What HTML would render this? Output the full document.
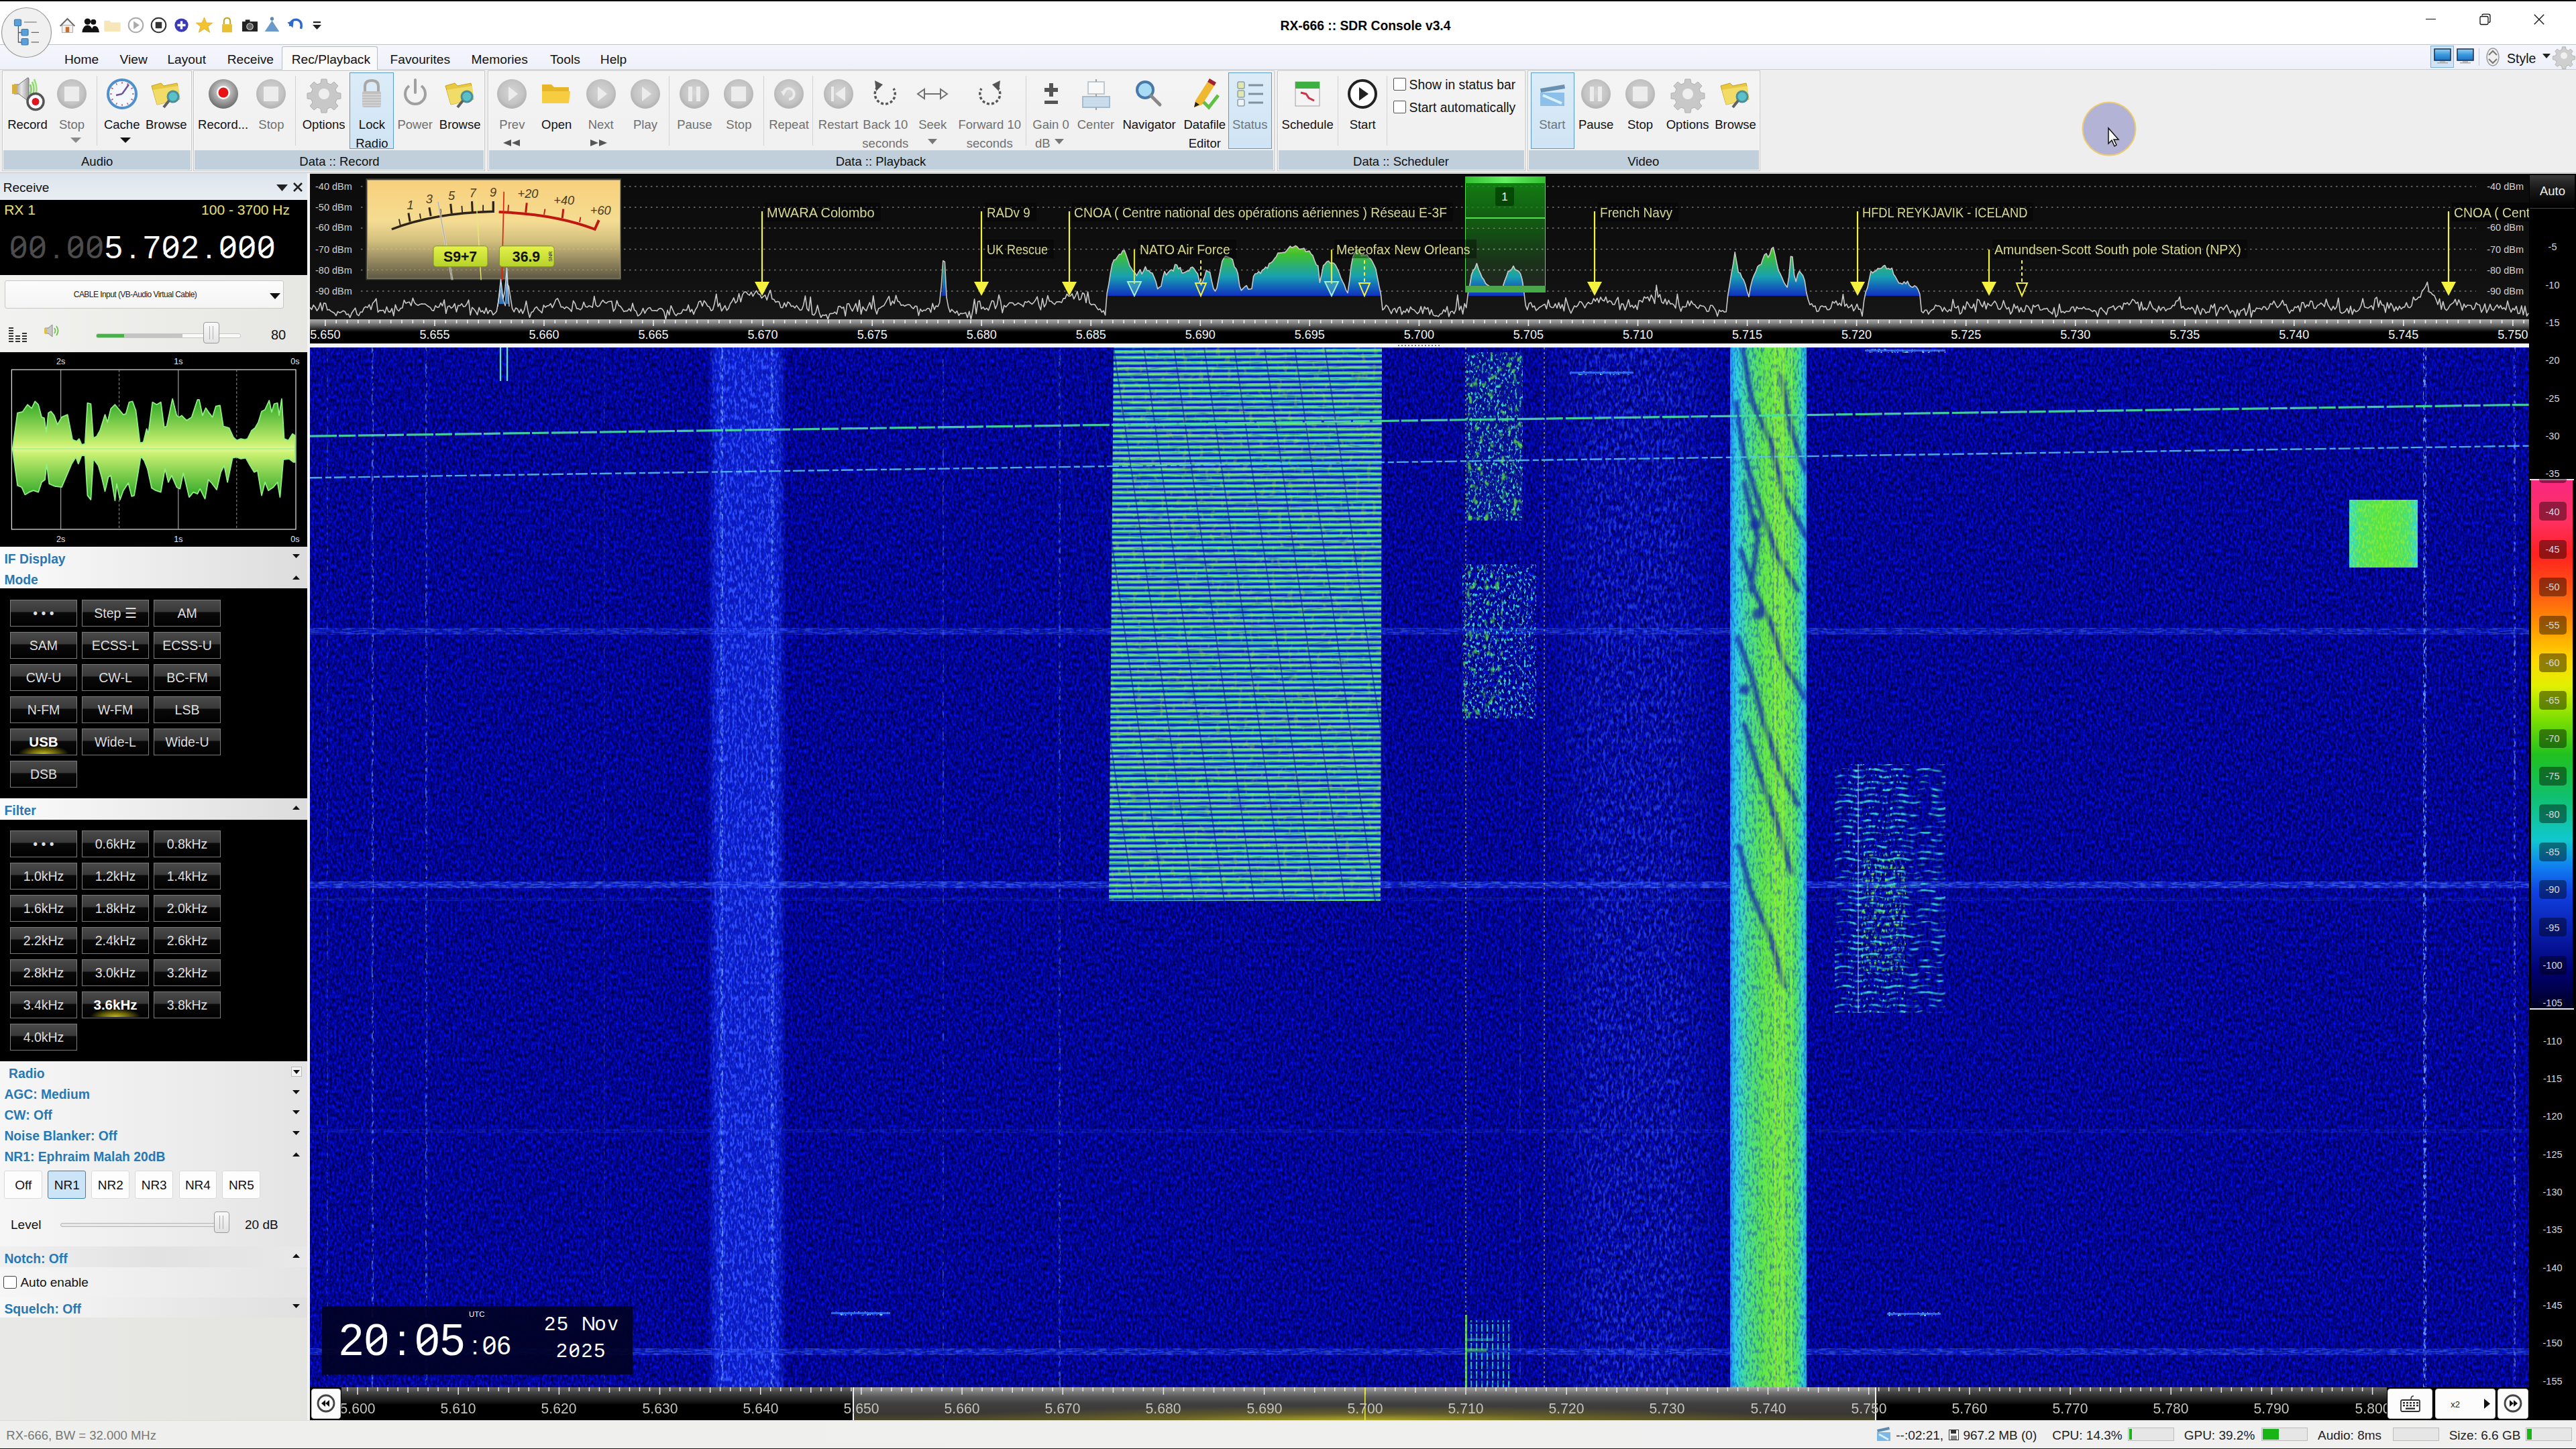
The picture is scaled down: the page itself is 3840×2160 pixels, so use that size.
<!DOCTYPE html><html><head><meta charset="utf-8"><style>*{margin:0;padding:0;box-sizing:border-box}
html,body{width:3840px;height:2160px;overflow:hidden;background:#efefef;font-family:"Liberation Sans",sans-serif}
.a{position:absolute}
.t{position:absolute;white-space:nowrap;line-height:1}
.c{width:400px;text-align:center}
.r{width:400px;text-align:right}
svg{overflow:visible}
</style></head><body><div class="a" style="left:0px;top:0px;width:3840px;height:2px;background:#0a0a0a"></div><div class="a" style="left:0px;top:2px;width:3840px;height:64px;background:#fff"></div><svg class="a" style="left:86.5px;top:23.5px;" width="27" height="27" viewBox="0 0 40 40"><path d="M4 22 L20 6 L36 22" stroke="#666" stroke-width="3" fill="#f4f4f4"/><rect x="8" y="20" width="24" height="16" fill="#f0f0f0" stroke="#888"/><rect x="16" y="24" width="8" height="12" fill="#c07030"/></svg><svg class="a" style="left:120.5px;top:23.5px;" width="27" height="27" viewBox="0 0 40 40"><circle cx="14" cy="12" r="7" fill="#111"/><circle cx="27" cy="13" r="6" fill="#111"/><path d="M2 36 Q4 20 14 20 Q24 20 26 36Z M22 36 Q24 22 30 22 Q38 22 40 36Z" fill="#111"/></svg><svg class="a" style="left:153.5px;top:23.5px;" width="27" height="27" viewBox="0 0 40 40"><path d="M2 10 L14 10 L17 14 L38 14 L38 34 L2 34Z" fill="#f6e6b8"/></svg><svg class="a" style="left:188.5px;top:23.5px;" width="27" height="27" viewBox="0 0 40 40"><circle cx="20" cy="20" r="16" fill="#fff" stroke="#aaa" stroke-width="3"/><path d="M15 11 L28 20 L15 29Z" fill="#aaa"/></svg><svg class="a" style="left:222.5px;top:23.5px;" width="27" height="27" viewBox="0 0 40 40"><circle cx="20" cy="20" r="16" fill="#fff" stroke="#333" stroke-width="3"/><rect x="13" y="13" width="14" height="14" fill="#333"/></svg><svg class="a" style="left:256.5px;top:23.5px;" width="27" height="27" viewBox="0 0 40 40"><circle cx="20" cy="20" r="15" fill="#3a3ab8"/><path d="M20 11V29M11 20H29" stroke="#fff" stroke-width="5"/></svg><svg class="a" style="left:290.5px;top:23.5px;" width="27" height="27" viewBox="0 0 40 40"><path d="M20 3 L25 15 L38 15 L28 23 L32 36 L20 28 L8 36 L12 23 L2 15 L15 15Z" fill="#f4c430" stroke="#d89a10"/></svg><svg class="a" style="left:324.5px;top:23.5px;" width="27" height="27" viewBox="0 0 40 40"><path d="M13 18V12Q13 4 20 4Q27 4 27 12V18" stroke="#c0a020" stroke-width="3" fill="none"/><rect x="9" y="18" width="22" height="18" fill="#e8c030"/></svg><svg class="a" style="left:358.5px;top:23.5px;" width="27" height="27" viewBox="0 0 40 40"><rect x="3" y="12" width="34" height="22" fill="#222"/><rect x="10" y="8" width="10" height="5" fill="#222"/><circle cx="20" cy="23" r="7" fill="#666" stroke="#ddd" stroke-width="1.5"/></svg><svg class="a" style="left:391.5px;top:23.5px;" width="27" height="27" viewBox="0 0 40 40"><circle cx="20" cy="6" r="4" fill="#5a88b8"/><path d="M20 10 L36 34 L4 34Z" fill="#6a9ac8"/></svg><svg class="a" style="left:426.5px;top:23.5px;" width="27" height="27" viewBox="0 0 40 40"><path d="M8 22 Q10 6 24 8 Q36 12 32 28" stroke="#2a6ad0" stroke-width="5" fill="none"/><path d="M2 14 L14 26 L16 10Z" fill="#2a6ad0"/></svg><svg class="a" style="left:466px;top:32px;" width="13" height="13" viewBox="0 0 13 13"><rect x="1" y="0" width="11" height="2.2" fill="#222"/><path d="M0 5 H13 L6.5 12Z" fill="#222"/></svg><div class="t" style="left:1908.5px;top:28.7px;font-size:19.3px;color:#000;font-weight:700;">RX-666 :: SDR Console v3.4</div><div class="a" style="left:3616px;top:28px;width:15px;height:1.3px;background:#111"></div><svg class="a" style="left:3696px;top:20px;" width="18" height="18" viewBox="0 0 18 18"><rect x="1" y="4.5" width="12" height="12" rx="1.8" fill="none" stroke="#111" stroke-width="1.3"/><path d="M4 3.2 Q4 1.2 6 1.2 H13.5 Q16 1.2 16 3.7 V11.5 Q16 13.5 14 13.5" fill="none" stroke="#111" stroke-width="1.3"/></svg><svg class="a" style="left:3777px;top:21px;" width="16" height="16" viewBox="0 0 16 16"><path d="M0.8 0.8 L15.2 15.2 M15.2 0.8 L0.8 15.2" stroke="#111" stroke-width="1.3"/></svg><div class="a" style="left:0px;top:66px;width:3840px;height:38px;background:linear-gradient(#f6f7fd,#eef0fa);border-top:1px solid #bfc3cc;border-bottom:1px solid #c7cad2"></div><div class="a" style="left:420px;top:69px;width:143px;height:35px;background:#fafafa;border:1px solid #b8bcc4;border-bottom:none;border-radius:3px 3px 0 0"></div><div class="t" style="left:96.0px;top:78.7px;font-size:19.2px;color:#111;font-weight:400;">Home</div><div class="t" style="left:178.6px;top:78.7px;font-size:19.2px;color:#111;font-weight:400;">View</div><div class="t" style="left:249.4px;top:78.7px;font-size:19.2px;color:#111;font-weight:400;">Layout</div><div class="t" style="left:338.7px;top:78.7px;font-size:19.2px;color:#111;font-weight:400;">Receive</div><div class="t" style="left:434.7px;top:78.7px;font-size:19.2px;color:#111;font-weight:400;">Rec/Playback</div><div class="t" style="left:581.5px;top:78.7px;font-size:19.2px;color:#111;font-weight:400;">Favourites</div><div class="t" style="left:702.6px;top:78.7px;font-size:19.2px;color:#111;font-weight:400;">Memories</div><div class="t" style="left:820.0px;top:78.7px;font-size:19.2px;color:#111;font-weight:400;">Tools</div><div class="t" style="left:894.8px;top:78.7px;font-size:19.2px;color:#111;font-weight:400;">Help</div><svg class="a" style="left:2px;top:11px;" width="76" height="76" viewBox="0 0 76 76"><circle cx="37.5" cy="37.5" r="37" fill="#f0f0f0" stroke="#9a9a9a" stroke-width="1.2"/><path d="M25.4 27 V52 H30 M25.4 37.5 H30" stroke="#555" stroke-width="1.3" fill="none"/><g fill="#5aa0d8" stroke="#3a78b0" stroke-width="1.2"><rect x="19.5" y="18" width="10" height="9.5" rx="1.5"/><rect x="30" y="32.5" width="10" height="9.5" rx="1.5"/><rect x="30" y="46.5" width="10" height="9.5" rx="1.5"/></g><path d="M34 22 H52.7 M44.6 37.3 H56 M44.6 51.9 H56" stroke="#666" stroke-width="1.2"/></svg><div class="a" style="left:3623px;top:68px;width:35px;height:33px;background:#cfe4f6;border:1px solid #7fb0dc"></div><svg class="a" style="left:3626px;top:70px;" width="30" height="26" viewBox="0 0 30 26"><defs><linearGradient id="scr" x1="0" y1="0" x2="0" y2="1"><stop offset="0" stop-color="#9ad0f0"/><stop offset="0.5" stop-color="#3a9ae0"/><stop offset="1" stop-color="#2070c0"/></linearGradient></defs><rect x="3" y="3" width="24" height="17" fill="url(#scr)" stroke="#1a2a40" stroke-width="1.5"/><rect x="11" y="21" width="8" height="2" fill="#bbb"/><rect x="7" y="23" width="16" height="1.5" fill="#aaa"/></svg><svg class="a" style="left:3660px;top:70px;" width="30" height="26" viewBox="0 0 30 26"><defs><linearGradient id="scr" x1="0" y1="0" x2="0" y2="1"><stop offset="0" stop-color="#9ad0f0"/><stop offset="0.5" stop-color="#3a9ae0"/><stop offset="1" stop-color="#2070c0"/></linearGradient></defs><rect x="3" y="3" width="24" height="17" fill="url(#scr)" stroke="#1a2a40" stroke-width="1.5"/><rect x="11" y="21" width="8" height="2" fill="#bbb"/><rect x="7" y="23" width="16" height="1.5" fill="#aaa"/></svg><div class="a" style="left:3695px;top:72px;width:1px;height:26px;background:#c8c8c8"></div><svg class="a" style="left:3704px;top:70px;" width="24" height="30" viewBox="0 0 24 30"><ellipse cx="12" cy="15" rx="9" ry="13" fill="#f0f0f0" stroke="#999" stroke-width="1.5"/><path d="M6 12 L12 6 L18 12 M6 18 L12 24 L18 18" stroke="#777" stroke-width="2" fill="none"/></svg><div class="t" style="left:3737.0px;top:77.5px;font-size:19.5px;color:#111;font-weight:400;">Style</div><svg class="a" style="left:3790px;top:80px;" width="12" height="8" viewBox="0 0 12 8"><path d="M0 0H12L6 7Z" fill="#222"/></svg><svg class="a" style="left:3808px;top:69px;" width="28" height="28" viewBox="0 0 34 34"><path d="M14 1h6l1 5 4 2 4-3 4 4-3 4 2 4 5 1v6l-5 1-2 4 3 4-4 4-4-3-4 2-1 5h-6l-1-5-4-2-4 3-4-4 3-4-2-4-5-1v-6l5-1 2-4-3-4 4-4 4 3 4-2z" fill="#cfcfcf" stroke="#aaa"/><circle cx="17" cy="17" r="6" fill="#f0f0f0"/></svg><div class="a" style="left:0px;top:104px;width:3840px;height:154px;background:#eeeeee;border-bottom:1px solid #c8c8c8"></div><div class="a" style="left:3px;top:105px;width:283px;height:150px;background:linear-gradient(#f4f4f4,#efefef);border:1px solid #c4c6c8;box-shadow:inset 0 0 0 1px #fdfdfd"></div><div class="a" style="left:5px;top:224px;width:279px;height:29px;background:linear-gradient(#c2cfda,#bfcfdc)"></div><div class="t c" style="left:-55.3px;top:232.3px;font-size:18.5px;color:#111;font-weight:400;">Audio</div><div class="a" style="left:288px;top:105px;width:435px;height:150px;background:linear-gradient(#f4f4f4,#efefef);border:1px solid #c4c6c8;box-shadow:inset 0 0 0 1px #fdfdfd"></div><div class="a" style="left:290px;top:224px;width:431px;height:29px;background:linear-gradient(#c2cfda,#bfcfdc)"></div><div class="t c" style="left:306.0px;top:232.3px;font-size:18.5px;color:#111;font-weight:400;">Data :: Record</div><div class="a" style="left:727px;top:105px;width:1173px;height:150px;background:linear-gradient(#f4f4f4,#efefef);border:1px solid #c4c6c8;box-shadow:inset 0 0 0 1px #fdfdfd"></div><div class="a" style="left:729px;top:224px;width:1169px;height:29px;background:linear-gradient(#c2cfda,#bfcfdc)"></div><div class="t c" style="left:1113.0px;top:232.3px;font-size:18.5px;color:#111;font-weight:400;">Data :: Playback</div><div class="a" style="left:1904px;top:105px;width:370px;height:150px;background:linear-gradient(#f4f4f4,#efefef);border:1px solid #c4c6c8;box-shadow:inset 0 0 0 1px #fdfdfd"></div><div class="a" style="left:1906px;top:224px;width:366px;height:29px;background:linear-gradient(#c2cfda,#bfcfdc)"></div><div class="t c" style="left:1888.5px;top:232.3px;font-size:18.5px;color:#111;font-weight:400;">Data :: Scheduler</div><div class="a" style="left:2277px;top:105px;width:347px;height:150px;background:linear-gradient(#f4f4f4,#efefef);border:1px solid #c4c6c8;box-shadow:inset 0 0 0 1px #fdfdfd"></div><div class="a" style="left:2279px;top:224px;width:343px;height:29px;background:linear-gradient(#c2cfda,#bfcfdc)"></div><div class="t c" style="left:2249.8px;top:232.3px;font-size:18.5px;color:#111;font-weight:400;">Video</div><div class="a" style="left:144px;top:113px;width:1px;height:104px;background:#d2d2d2"></div><div class="a" style="left:440px;top:113px;width:1px;height:104px;background:#d2d2d2"></div><div class="a" style="left:997px;top:113px;width:1px;height:104px;background:#d2d2d2"></div><div class="a" style="left:1138px;top:113px;width:1px;height:104px;background:#d2d2d2"></div><div class="a" style="left:1211px;top:113px;width:1px;height:104px;background:#d2d2d2"></div><div class="a" style="left:1529px;top:113px;width:1px;height:104px;background:#d2d2d2"></div><div class="a" style="left:1994px;top:113px;width:1px;height:104px;background:#d2d2d2"></div><div class="a" style="left:2067px;top:113px;width:1px;height:104px;background:#d2d2d2"></div><div class="a" style="left:521px;top:108px;width:66px;height:114px;background:linear-gradient(#dcecf8,#cfe4f4);border:1px solid #5a9acd"></div><div class="a" style="left:1831px;top:108px;width:65px;height:114px;background:linear-gradient(#dcecf8,#cfe4f4);border:1px solid #5a9acd"></div><div class="a" style="left:2282px;top:108px;width:65px;height:114px;background:linear-gradient(#dcecf8,#cfe4f4);border:1px solid #5a9acd"></div><svg width="0" height="0" style="position:absolute"><defs><radialGradient id="gc" cx="50%" cy="45%" r="55%"><stop offset="0" stop-color="#d6d6d6"/><stop offset="0.7" stop-color="#c4c4c4"/><stop offset="1" stop-color="#b0b0b0"/></radialGradient></defs></svg><svg class="a" style="left:15.0px;top:114.0px;" width="52" height="52" viewBox="0 0 52 52"><defs><linearGradient id="cone" x1="0" x2="1"><stop offset="0" stop-color="#8a8a8a"/><stop offset="0.5" stop-color="#e8e8e8"/><stop offset="1" stop-color="#9a9a9a"/></linearGradient></defs><path d="M6 12 L13 12 L26 2 Q28 1 28 4 L28 34 Q28 37 26 36 L13 26 L6 26 Z" fill="url(#cone)" stroke="#777" stroke-width="1"/><rect x="3" y="12" width="7" height="14" fill="#d8b040"/><path d="M30 12 Q33 19 30 26" stroke="#80d060" stroke-width="2.6" fill="none"/><path d="M33 8 Q38 19 33 30" stroke="#8ada6a" stroke-width="2.6" fill="none"/><path d="M36 4 Q43 19 36 34" stroke="#98e078" stroke-width="2.6" fill="none"/><circle cx="38" cy="37.5" r="12" fill="#fff" stroke="#555" stroke-width="3.5"/><circle cx="38" cy="37.5" r="5.5" fill="#e0141e"/></svg><div class="t c" style="left:-159.0px;top:176.8px;font-size:18.5px;color:#111;font-weight:400;">Record</div><svg class="a" style="left:81.0px;top:114.0px;" width="52" height="52" viewBox="0 0 52 52"><circle cx="26" cy="26" r="22" fill="url(#gc)"/><rect x="15" y="15" width="22" height="22" fill="#ececec"/></svg><div class="t c" style="left:-93.0px;top:176.8px;font-size:18.5px;color:#707070;font-weight:400;">Stop</div><svg class="a" style="left:155.7px;top:114.0px;" width="52" height="52" viewBox="0 0 52 52"><circle cx="26" cy="26" r="21" fill="#f4f8fc" stroke="#4e8fcf" stroke-width="4"/><g stroke="#c06070" stroke-width="1.5"><path d="M26 8v3M26 41v3M8 26h3M41 26h3M35 10l-1.5 2.6M17 10l1.5 2.6M10 17l2.6 1.5M10 35l2.6-1.5M42 17l-2.6 1.5M42 35l-2.6-1.5M35 42l-1.5-2.6M17 42l1.5-2.6"/></g><path d="M26 26 L36 12 M26 26 L17 28" stroke="#7050a0" stroke-width="2.5" fill="none"/></svg><div class="t c" style="left:-18.3px;top:176.8px;font-size:18.5px;color:#111;font-weight:400;">Cache</div><svg class="a" style="left:221.8px;top:114.0px;" width="52" height="52" viewBox="0 0 52 52"><path d="M4 14 L18 10 L22 14 L42 10 L46 34 L12 42 Z" fill="#e8c840" stroke="#c8a020" stroke-width="1"/><path d="M6 20 L44 14 L46 34 L12 42 Z" fill="#f2dc68"/><circle cx="36" cy="30" r="8" fill="#5bc0c8" stroke="#4a8f9a" stroke-width="3"/><path d="M30 36 L22 46" stroke="#606060" stroke-width="4"/></svg><div class="t c" style="left:47.8px;top:176.8px;font-size:18.5px;color:#111;font-weight:400;">Browse</div><svg class="a" style="left:306.6px;top:114.0px;" width="52" height="52" viewBox="0 0 52 52"><defs><radialGradient id="rg" cx="50%" cy="40%" r="60%"><stop offset="0" stop-color="#f0f0f0"/><stop offset="0.6" stop-color="#a0a0a0"/><stop offset="1" stop-color="#6a6a6a"/></radialGradient></defs><circle cx="26" cy="26" r="22" fill="url(#rg)"/><circle cx="26" cy="24" r="10" fill="#fff"/><circle cx="26" cy="24" r="7.5" fill="#e81414"/></svg><div class="t c" style="left:132.6px;top:176.8px;font-size:18.5px;color:#111;font-weight:400;">Record...</div><svg class="a" style="left:378.4px;top:114.0px;" width="52" height="52" viewBox="0 0 52 52"><circle cx="26" cy="26" r="22" fill="url(#gc)"/><rect x="15" y="15" width="22" height="22" fill="#ececec"/></svg><div class="t c" style="left:204.4px;top:176.8px;font-size:18.5px;color:#707070;font-weight:400;">Stop</div><svg class="a" style="left:456.6px;top:114.0px;" width="52" height="52" viewBox="0 0 52 52"><g fill="#c8c8c8" stroke="#b0b0b0" stroke-width="1"><path d="M22 4h8l1 6 5 2 5-4 6 6-4 5 2 5 6 1v8l-6 1-2 5 4 5-6 6-5-4-5 2-1 6h-8l-1-6-5-2-5 4-6-6 4-5-2-5-6-1v-8l6-1 2-5-4-5 6-6 5 4 5-2z"/></g><circle cx="26" cy="26" r="8" fill="#efefef"/></svg><div class="t c" style="left:282.6px;top:176.8px;font-size:18.5px;color:#111;font-weight:400;">Options</div><svg class="a" style="left:528.4px;top:114.0px;" width="52" height="52" viewBox="0 0 52 52"><path d="M16 22 V15 Q16 6 26 6 Q36 6 36 15 V22" stroke="#a8a8a8" stroke-width="4" fill="none"/><rect x="12" y="22" width="28" height="24" rx="3" fill="#c0c0c0"/><g stroke="#d8d8d8" stroke-width="1.5"><path d="M12 27h28M12 31h28M12 35h28M12 39h28M12 43h28"/></g></svg><div class="t c" style="left:354.4px;top:176.8px;font-size:18.5px;color:#111;font-weight:400;">Lock</div><div class="t c" style="left:354.4px;top:204.8px;font-size:18.5px;color:#111;font-weight:400;">Radio</div><svg class="a" style="left:592.7px;top:114.0px;" width="52" height="52" viewBox="0 0 52 52"><path d="M17 14 A15 15 0 1 0 35 14" stroke="#a0a0a0" stroke-width="4" fill="none"/><path d="M26 5 V24" stroke="#a0a0a0" stroke-width="4" stroke-linecap="round"/></svg><div class="t c" style="left:418.7px;top:176.8px;font-size:18.5px;color:#707070;font-weight:400;">Power</div><svg class="a" style="left:659.7px;top:114.0px;" width="52" height="52" viewBox="0 0 52 52"><path d="M4 14 L18 10 L22 14 L42 10 L46 34 L12 42 Z" fill="#e8c840" stroke="#c8a020" stroke-width="1"/><path d="M6 20 L44 14 L46 34 L12 42 Z" fill="#f2dc68"/><circle cx="36" cy="30" r="8" fill="#5bc0c8" stroke="#4a8f9a" stroke-width="3"/><path d="M30 36 L22 46" stroke="#606060" stroke-width="4"/></svg><div class="t c" style="left:485.7px;top:176.8px;font-size:18.5px;color:#111;font-weight:400;">Browse</div><svg class="a" style="left:737.4px;top:114.0px;" width="52" height="52" viewBox="0 0 52 52"><circle cx="26" cy="26" r="22" fill="url(#gc)"/><path d="M21 15 L35 26 L21 37 Z" fill="#ececec"/></svg><div class="t c" style="left:563.4px;top:176.8px;font-size:18.5px;color:#707070;font-weight:400;">Prev</div><svg class="a" style="left:803.7px;top:114.0px;" width="52" height="52" viewBox="0 0 52 52"><path d="M4 12 L18 12 L22 16 L44 16 L44 40 L4 40 Z" fill="#e8b428"/><path d="M4 22 L46 22 L44 40 L4 40 Z" fill="#f6cc40"/></svg><div class="t c" style="left:629.7px;top:176.8px;font-size:18.5px;color:#111;font-weight:400;">Open</div><svg class="a" style="left:869.7px;top:114.0px;" width="52" height="52" viewBox="0 0 52 52"><circle cx="26" cy="26" r="22" fill="url(#gc)"/><path d="M21 15 L35 26 L21 37 Z" fill="#ececec"/></svg><div class="t c" style="left:695.7px;top:176.8px;font-size:18.5px;color:#707070;font-weight:400;">Next</div><svg class="a" style="left:936.0px;top:114.0px;" width="52" height="52" viewBox="0 0 52 52"><circle cx="26" cy="26" r="22" fill="url(#gc)"/><path d="M21 15 L35 26 L21 37 Z" fill="#ececec"/></svg><div class="t c" style="left:762.0px;top:176.8px;font-size:18.5px;color:#707070;font-weight:400;">Play</div><svg class="a" style="left:1009.4000000000001px;top:114.0px;" width="52" height="52" viewBox="0 0 52 52"><circle cx="26" cy="26" r="22" fill="url(#gc)"/><rect x="17" y="15" width="6" height="22" fill="#ececec"/><rect x="29" y="15" width="6" height="22" fill="#ececec"/></svg><div class="t c" style="left:835.4px;top:176.8px;font-size:18.5px;color:#707070;font-weight:400;">Pause</div><svg class="a" style="left:1075.4px;top:114.0px;" width="52" height="52" viewBox="0 0 52 52"><circle cx="26" cy="26" r="22" fill="url(#gc)"/><rect x="15" y="15" width="22" height="22" fill="#ececec"/></svg><div class="t c" style="left:901.4px;top:176.8px;font-size:18.5px;color:#707070;font-weight:400;">Stop</div><svg class="a" style="left:1150.0px;top:114.0px;" width="52" height="52" viewBox="0 0 52 52"><circle cx="26" cy="26" r="22" fill="url(#gc)"/><path d="M18 24 A8 8 0 1 1 26 34" stroke="#ececec" stroke-width="4" fill="none"/><path d="M14 22 L22 22 L18 29Z" fill="#ececec"/></svg><div class="t c" style="left:976.0px;top:176.8px;font-size:18.5px;color:#707070;font-weight:400;">Repeat</div><svg class="a" style="left:1223.7px;top:114.0px;" width="52" height="52" viewBox="0 0 52 52"><circle cx="26" cy="26" r="22" fill="url(#gc)"/><rect x="15" y="15" width="4" height="22" fill="#ececec"/><path d="M36 15 L21 26 L36 37 Z" fill="#ececec"/></svg><div class="t c" style="left:1049.7px;top:176.8px;font-size:18.5px;color:#707070;font-weight:400;">Restart</div><svg class="a" style="left:1293.8px;top:114.0px;" width="52" height="52" viewBox="0 0 52 52"><path d="M14 16 A15 15 0 1 0 38 18" stroke="#555" stroke-width="3.5" fill="none" stroke-dasharray="4 3"/><path d="M10 6 L22 12 L12 22 Z" fill="#555"/></svg><div class="t c" style="left:1119.8px;top:176.8px;font-size:18.5px;color:#707070;font-weight:400;">Back 10</div><div class="t c" style="left:1119.8px;top:204.8px;font-size:18.5px;color:#707070;font-weight:400;">seconds</div><svg class="a" style="left:1364.3px;top:114.0px;" width="52" height="52" viewBox="0 0 52 52"><path d="M4 26 L14 19 V33 Z M48 26 L38 19 V33 Z" fill="none" stroke="#707070" stroke-width="2"/><path d="M14 26 H38" stroke="#707070" stroke-width="2"/></svg><div class="t c" style="left:1190.3px;top:176.8px;font-size:18.5px;color:#707070;font-weight:400;">Seek</div><svg class="a" style="left:1449.2px;top:114.0px;" width="52" height="52" viewBox="0 0 52 52"><path d="M38 16 A15 15 0 1 1 14 18" stroke="#555" stroke-width="3.5" fill="none" stroke-dasharray="4 3"/><path d="M42 6 L30 12 L40 22 Z" fill="#555"/></svg><div class="t c" style="left:1275.2px;top:176.8px;font-size:18.5px;color:#707070;font-weight:400;">Forward 10</div><div class="t c" style="left:1275.2px;top:204.8px;font-size:18.5px;color:#707070;font-weight:400;">seconds</div><svg class="a" style="left:1540.6px;top:114.0px;" width="52" height="52" viewBox="0 0 52 52"><path d="M26 10 V30 M16 20 H36" stroke="#555" stroke-width="6"/><rect x="16" y="36" width="20" height="5" fill="#555"/></svg><div class="t c" style="left:1366.6px;top:176.8px;font-size:18.5px;color:#707070;font-weight:400;">Gain 0</div><svg class="a" style="left:1607.5px;top:114.0px;" width="52" height="52" viewBox="0 0 52 52"><rect x="14" y="8" width="24" height="18" fill="#f8f8f8" stroke="#c0c8d0" stroke-width="2"/><rect x="6" y="30" width="40" height="16" fill="#c8dcec" stroke="#a8bcd0" stroke-width="2"/><path d="M26 4V8M26 26V30M26 46V50" stroke="#a0a0a0" stroke-width="2"/></svg><div class="t c" style="left:1433.5px;top:176.8px;font-size:18.5px;color:#707070;font-weight:400;">Center</div><svg class="a" style="left:1687.0px;top:114.0px;" width="52" height="52" viewBox="0 0 52 52"><circle cx="20" cy="20" r="12" fill="#a8dcf4" stroke="#4a78a8" stroke-width="4"/><path d="M29 29 L42 42" stroke="#888" stroke-width="5" stroke-linecap="round"/></svg><div class="t c" style="left:1513.0px;top:176.8px;font-size:18.5px;color:#111;font-weight:400;">Navigator</div><svg class="a" style="left:1769.8px;top:114.0px;" width="52" height="52" viewBox="0 0 52 52"><path d="M30 8 L40 14 L22 42 L10 46 L12 36 Z" fill="#f0b830"/><path d="M30 8 L40 14 L43 9 L33 3 Z" fill="#a02030"/><path d="M10 46 L12 38 L18 42 Z" fill="#222"/><path d="M24 38 L32 46 L46 28" stroke="#60c040" stroke-width="5" fill="none"/></svg><div class="t c" style="left:1595.8px;top:176.8px;font-size:18.5px;color:#111;font-weight:400;">Datafile</div><div class="t c" style="left:1595.8px;top:204.8px;font-size:18.5px;color:#111;font-weight:400;">Editor</div><svg class="a" style="left:1837.2px;top:114.0px;" width="52" height="52" viewBox="0 0 52 52"><g fill="#e0e8b0" stroke="#90a0a8" stroke-width="1.5"><rect x="8" y="8" width="10" height="10" rx="2"/><rect x="8" y="21" width="10" height="10" rx="2"/><rect x="8" y="34" width="10" height="10" rx="2" fill="#f0f4f8"/></g><path d="M24 13 H46 M24 26 H46 M24 39 H46" stroke="#8090a0" stroke-width="3"/></svg><div class="t c" style="left:1663.2px;top:176.8px;font-size:18.5px;color:#6a7680;font-weight:400;">Status</div><svg class="a" style="left:1923.2px;top:114.0px;" width="52" height="52" viewBox="0 0 52 52"><rect x="8" y="8" width="36" height="36" fill="#f4f4f4" stroke="#a0a0a0"/><rect x="8" y="8" width="36" height="10" fill="#3cb040"/><path d="M16 24 L24 26 L28 32 L36 36" stroke="#d03040" stroke-width="3" fill="none"/></svg><div class="t c" style="left:1749.2px;top:176.8px;font-size:18.5px;color:#111;font-weight:400;">Schedule</div><svg class="a" style="left:2005.2px;top:114.0px;" width="52" height="52" viewBox="0 0 52 52"><circle cx="26" cy="26" r="20" fill="#fff" stroke="#222" stroke-width="4"/><path d="M21 16 L35 26 L21 36 Z" fill="#222"/></svg><div class="t c" style="left:1831.2px;top:176.8px;font-size:18.5px;color:#111;font-weight:400;">Start</div><svg class="a" style="left:2287.8px;top:114.0px;" width="52" height="52" viewBox="0 0 52 52"><path d="M8 18 L44 12 L45 18 L9 24Z" fill="#6a90b0"/><path d="M8 24 H44 V44 H8Z" fill="#8cc0e8"/><path d="M12 28 L40 40" stroke="#d8f0ff" stroke-width="4"/></svg><div class="t c" style="left:2113.8px;top:176.8px;font-size:18.5px;color:#6a7680;font-weight:400;">Start</div><svg class="a" style="left:2353.2px;top:114.0px;" width="52" height="52" viewBox="0 0 52 52"><circle cx="26" cy="26" r="22" fill="url(#gc)"/><rect x="17" y="15" width="6" height="22" fill="#ececec"/><rect x="29" y="15" width="6" height="22" fill="#ececec"/></svg><div class="t c" style="left:2179.2px;top:176.8px;font-size:18.5px;color:#111;font-weight:400;">Pause</div><svg class="a" style="left:2419.0px;top:114.0px;" width="52" height="52" viewBox="0 0 52 52"><circle cx="26" cy="26" r="22" fill="url(#gc)"/><rect x="15" y="15" width="22" height="22" fill="#ececec"/></svg><div class="t c" style="left:2245.0px;top:176.8px;font-size:18.5px;color:#111;font-weight:400;">Stop</div><svg class="a" style="left:2489.6px;top:114.0px;" width="52" height="52" viewBox="0 0 52 52"><g fill="#c8c8c8" stroke="#b0b0b0" stroke-width="1"><path d="M22 4h8l1 6 5 2 5-4 6 6-4 5 2 5 6 1v8l-6 1-2 5 4 5-6 6-5-4-5 2-1 6h-8l-1-6-5-2-5 4-6-6 4-5-2-5-6-1v-8l6-1 2-5-4-5 6-6 5 4 5-2z"/></g><circle cx="26" cy="26" r="8" fill="#efefef"/></svg><div class="t c" style="left:2315.6px;top:176.8px;font-size:18.5px;color:#111;font-weight:400;">Options</div><svg class="a" style="left:2561.0px;top:114.0px;" width="52" height="52" viewBox="0 0 52 52"><path d="M4 14 L18 10 L22 14 L42 10 L46 34 L12 42 Z" fill="#e8c840" stroke="#c8a020" stroke-width="1"/><path d="M6 20 L44 14 L46 34 L12 42 Z" fill="#f2dc68"/><circle cx="36" cy="30" r="8" fill="#5bc0c8" stroke="#4a8f9a" stroke-width="3"/><path d="M30 36 L22 46" stroke="#606060" stroke-width="4"/></svg><div class="t c" style="left:2387.0px;top:176.8px;font-size:18.5px;color:#111;font-weight:400;">Browse</div><div class="t" style="left:1543.0px;top:204.8px;font-size:18.5px;color:#707070;font-weight:400;">dB</div><svg class="a" style="left:1572px;top:207px;" width="14" height="9" viewBox="0 0 14 9"><path d="M0 0H14L7 8Z" fill="#777"/></svg><svg class="a" style="left:1383px;top:207px;" width="14" height="9" viewBox="0 0 14 9"><path d="M0 0H14L7 8Z" fill="#777"/></svg><svg class="a" style="left:105px;top:205px;" width="16" height="9" viewBox="0 0 16 9"><path d="M0 0H16L8 8Z" fill="#8a8a8a"/></svg><svg class="a" style="left:179px;top:205px;" width="16" height="9" viewBox="0 0 16 9"><path d="M0 0H16L8 8Z" fill="#111"/></svg><svg class="a" style="left:750px;top:208px;" width="28" height="10" viewBox="0 0 28 10"><path d="M0 5L12 0V10Z M13 5L25 0V10Z" fill="#555"/></svg><svg class="a" style="left:880px;top:208px;" width="28" height="10" viewBox="0 0 28 10"><path d="M12 5L0 0V10Z M25 5L13 0V10Z" fill="#555"/></svg><div class="a" style="left:2077px;top:116px;width:19px;height:19px;background:#fff;border:1px solid #555;border-radius:2px"></div><div class="t" style="left:2100.6px;top:117.2px;font-size:19.3px;color:#111;font-weight:400;">Show in status bar</div><div class="a" style="left:2077px;top:150px;width:19px;height:19px;background:#fff;border:1px solid #555;border-radius:2px"></div><div class="t" style="left:2100.6px;top:151.2px;font-size:19.3px;color:#111;font-weight:400;">Start automatically</div><svg class="a" style="left:3100px;top:148px;" width="88" height="88" viewBox="0 0 88 88"><circle cx="44" cy="44" r="39.5" fill="#b3b3d6" stroke="#f0cc70" stroke-width="2"/><path d="M43 43 L43 66 L48 61 L52 70 L55 68 L51 60 L58 60 Z" fill="#fff" stroke="#111" stroke-width="1.5"/></svg>
<div class="a" style="left:0px;top:258px;width:458px;height:1860px;background:linear-gradient(90deg,#f2f2f0,#e6e6e2)"></div><div class="a" style="left:458px;top:258px;width:4px;height:1860px;background:#f4f4f4"></div><div class="a" style="left:0px;top:258px;width:458px;height:40px;background:linear-gradient(#dde4ec,#e9eef4)"></div><div class="t" style="left:4.8px;top:269.6px;font-size:19px;color:#111;font-weight:400;">Receive</div><svg class="a" style="left:412px;top:275px;" width="17" height="10" viewBox="0 0 17 10"><path d="M0 0H17L8.5 10Z" fill="#222"/></svg><svg class="a" style="left:437px;top:272px;" width="14" height="14" viewBox="0 0 14 14"><path d="M1 1L13 13M13 1L1 13" stroke="#222" stroke-width="2.6"/></svg><div class="a" style="left:0px;top:298px;width:458px;height:112px;background:#000"></div><div class="t" style="left:6.2px;top:301.8px;font-size:21px;color:#e8e078;font-weight:400;">RX 1</div><div class="t r" style="left:32.0px;top:301.8px;font-size:21px;color:#e8e078;font-weight:400;">100 - 3700 Hz</div><div class="t" style="left:13.3px;top:345.1px;font-size:48px;font-weight:400"><span style="display:inline-block;width:28.4px;text-align:center;color:#4c4c4c">0</span><span style="display:inline-block;width:28.4px;text-align:center;color:#4c4c4c">0</span><span style="display:inline-block;width:28.4px;text-align:center;color:#4c4c4c">.</span><span style="display:inline-block;width:28.4px;text-align:center;color:#4c4c4c">0</span><span style="display:inline-block;width:28.4px;text-align:center;color:#4c4c4c">0</span><span style="display:inline-block;width:28.4px;text-align:center;color:#ffffff">5</span><span style="display:inline-block;width:28.4px;text-align:center;color:#ffffff">.</span><span style="display:inline-block;width:28.4px;text-align:center;color:#ffffff">7</span><span style="display:inline-block;width:28.4px;text-align:center;color:#ffffff">0</span><span style="display:inline-block;width:28.4px;text-align:center;color:#ffffff">2</span><span style="display:inline-block;width:28.4px;text-align:center;color:#ffffff">.</span><span style="display:inline-block;width:28.4px;text-align:center;color:#ffffff">0</span><span style="display:inline-block;width:28.4px;text-align:center;color:#ffffff">0</span><span style="display:inline-block;width:28.4px;text-align:center;color:#ffffff">0</span></div><svg class="a" style="left:0;top:0;pointer-events:none" width="3840" height="2160"><path d="M18.5 377.5L37.0 362.0" stroke="#4c4c4c" stroke-width="3.6" stroke-linecap="round"/><path d="M46.9 377.5L65.4 362.0" stroke="#4c4c4c" stroke-width="3.6" stroke-linecap="round"/><path d="M103.7 377.5L122.2 362.0" stroke="#4c4c4c" stroke-width="3.6" stroke-linecap="round"/><path d="M132.1 377.5L150.6 362.0" stroke="#4c4c4c" stroke-width="3.6" stroke-linecap="round"/><path d="M245.7 377.5L264.2 362.0" stroke="#ffffff" stroke-width="3.6" stroke-linecap="round"/><path d="M330.9 377.5L349.4 362.0" stroke="#ffffff" stroke-width="3.6" stroke-linecap="round"/><path d="M359.3 377.5L377.8 362.0" stroke="#ffffff" stroke-width="3.6" stroke-linecap="round"/><path d="M387.7 377.5L406.2 362.0" stroke="#ffffff" stroke-width="3.6" stroke-linecap="round"/></svg><div class="a" style="left:7px;top:418px;width:416px;height:42px;background:linear-gradient(#fcfcfc,#f4f4f4);border:1px solid #c8c8c8;border-radius:3px"></div><div class="t c" style="left:1.5px;top:432.8px;font-size:12px;color:#222;font-weight:400;letter-spacing:-0.55px">CABLE Input (VB-Audio Virtual Cable)</div><svg class="a" style="left:402px;top:437px;" width="16" height="9" viewBox="0 0 16 9"><path d="M0 0H16L8 9Z" fill="#111"/></svg><svg class="a" style="left:13px;top:488px;" width="28" height="23" viewBox="0 0 28 23"><g fill="#333"><rect x="0" y="0" width="7" height="2"/><rect x="0" y="4" width="7" height="2"/><rect x="0" y="8" width="7" height="2"/><rect x="0" y="12" width="7" height="2"/><rect x="0" y="16" width="7" height="2"/><rect x="0" y="20" width="7" height="2"/><rect x="10" y="12" width="7" height="2"/><rect x="10" y="16" width="7" height="2"/><rect x="10" y="20" width="7" height="2"/><rect x="20" y="8" width="7" height="2"/><rect x="20" y="12" width="7" height="2"/><rect x="20" y="16" width="7" height="2"/><rect x="20" y="20" width="7" height="2"/></g></svg><svg class="a" style="left:65px;top:481px;" width="24" height="24" viewBox="0 0 24 24"><path d="M2 8H7L13 3V21L7 16H2Z" fill="#c8c8c8" stroke="#888"/><rect x="1" y="8" width="4" height="8" fill="#e0c040"/><path d="M16 8Q19 12 16 16M19 5Q24 12 19 19" stroke="#70c050" stroke-width="1.8" fill="none"/></svg><div class="a" style="left:143px;top:497px;width:216px;height:7px;background:linear-gradient(90deg,#4cae4c 0,#4cae4c 41px,#c4c4c4 41px,#c4c4c4 128px,#fafafa 128px);border:1px solid #c8c8c8;border-radius:3px"></div><div class="a" style="left:303px;top:480px;width:24px;height:32px;background:linear-gradient(#fafafa,#e4e4e4);border:1px solid #9a9a9a;border-radius:4px"></div><div class="a" style="left:312px;top:486px;width:1px;height:20px;background:#b0b0b0"></div><div class="a" style="left:317px;top:486px;width:1px;height:20px;background:#b0b0b0"></div><div class="t" style="left:404.0px;top:489.1px;font-size:20px;color:#111;font-weight:400;">80</div><div class="a" style="left:0px;top:525px;width:458px;height:290px;background:#000"></div><div class="t c" style="left:-109.3px;top:533.0px;font-size:12.5px;color:#e8e8e8;font-weight:400;">2s</div><div class="t c" style="left:-109.3px;top:797.6px;font-size:12.5px;color:#e8e8e8;font-weight:400;">2s</div><div class="t c" style="left:65.8px;top:533.0px;font-size:12.5px;color:#e8e8e8;font-weight:400;">1s</div><div class="t c" style="left:65.8px;top:797.6px;font-size:12.5px;color:#e8e8e8;font-weight:400;">1s</div><div class="t c" style="left:239.8px;top:533.0px;font-size:12.5px;color:#e8e8e8;font-weight:400;">0s</div><div class="t c" style="left:239.8px;top:797.6px;font-size:12.5px;color:#e8e8e8;font-weight:400;">0s</div><svg class="a" style="left:0px;top:520px;" width="480" height="360" viewBox="0 0 1932 1449"><defs><linearGradient id="wg" x1="0" y1="290" x2="0" y2="910" gradientUnits="userSpaceOnUse"><stop offset="0" stop-color="#20a020"/><stop offset="0.45" stop-color="#c8f070"/><stop offset="0.5" stop-color="#e0f890"/><stop offset="0.55" stop-color="#c8f070"/><stop offset="1" stop-color="#20a020"/></linearGradient></defs><rect x="70" y="125" width="1705" height="958" fill="none" stroke="#e0e0e0" stroke-width="5"/><path d="M365 125V1083M1070 125V1083" stroke="#bdbdbd" stroke-width="4"/><path d="M715 125V1083M1420 125V1083" stroke="#9a9a9a" stroke-width="4" stroke-dasharray="14 12"/><polygon points="75,600 105,385 135,378 165,335 190,357 210,315 230,335 250,410 265,415 278,500 290,385 305,375 325,400 345,455 370,410 405,395 435,545 460,555 475,540 490,575 510,570 525,325 545,330 560,535 580,525 600,490 630,395 645,440 665,360 690,335 715,365 740,395 755,390 775,320 795,315 815,370 840,565 860,560 880,480 890,510 915,320 940,335 965,320 985,470 1000,465 1035,300 1060,400 1075,410 1090,400 1120,430 1150,410 1185,305 1195,305 1215,400 1235,355 1255,385 1275,410 1295,345 1320,340 1340,465 1360,470 1375,475 1400,530 1420,550 1445,540 1470,545 1485,540 1510,490 1530,475 1550,440 1570,375 1590,365 1615,310 1630,380 1645,330 1665,325 1675,400 1690,300 1705,540 1730,550 1755,510 1770,520 1770,680 1760,680 1735,660 1700,665 1680,890 1665,800 1640,830 1610,850 1590,800 1570,880 1545,730 1525,740 1500,700 1475,655 1445,660 1420,650 1395,655 1365,800 1345,700 1325,740 1300,845 1270,805 1250,785 1230,900 1200,840 1185,870 1160,860 1135,890 1100,745 1080,840 1060,830 1030,760 1010,800 990,720 965,860 935,850 910,835 885,720 865,670 845,645 830,735 805,880 790,885 770,805 740,850 720,905 700,810 690,910 665,760 650,770 630,855 610,770 590,700 560,660 545,905 525,880 510,640 490,640 470,690 455,650 430,690 400,760 370,830 330,825 295,810 280,690 270,785 250,800 230,860 200,850 175,860 150,875 130,830 105,820 75,600" fill="url(#wg)" stroke="#90f080" stroke-width="7" stroke-linejoin="round"/><path d="M75 600H1770" stroke="#a0f090" stroke-width="6"/></svg><div class="a" style="left:0px;top:815px;width:458px;height:31px;background:linear-gradient(90deg,#fbfbfb,#e6e6e6 70%,#dcdcdc)"></div><div class="t" style="left:6.5px;top:824.2px;font-size:19.3px;color:#2878b4;font-weight:700;">IF Display</div><svg class="a" style="left:436px;top:825.5px;" width="11" height="6" viewBox="0 0 11 6"><path d="M0 0H11L5.5 6Z" fill="#111"/></svg><div class="a" style="left:0px;top:846px;width:458px;height:31px;background:linear-gradient(90deg,#fbfbfb,#e6e6e6 70%,#dcdcdc)"></div><div class="t" style="left:6.5px;top:855.2px;font-size:19.3px;color:#2878b4;font-weight:700;">Mode</div><svg class="a" style="left:436px;top:857.5px;" width="11" height="6" viewBox="0 0 11 6"><path d="M0 6H11L5.5 0Z" fill="#111"/></svg><div class="a" style="left:0px;top:877px;width:458px;height:313px;background:#000"></div><div class="a" style="left:15px;top:894px;width:100px;height:40px;background:linear-gradient(#4a4a4a 0%,#383838 45%,#0a0a0a 47%,#000 100%);border:1.5px solid #7a7a7a"></div><div class="t c" style="left:-135.0px;top:904.5px;font-size:19.5px;color:#dedede;font-weight:400;">• • •</div><div class="a" style="left:122px;top:894px;width:100px;height:40px;background:linear-gradient(#4a4a4a 0%,#383838 45%,#0a0a0a 47%,#000 100%);border:1.5px solid #7a7a7a"></div><div class="t c" style="left:-28.0px;top:904.5px;font-size:19.5px;color:#dedede;font-weight:400;">Step ☰</div><div class="a" style="left:229px;top:894px;width:100px;height:40px;background:linear-gradient(#4a4a4a 0%,#383838 45%,#0a0a0a 47%,#000 100%);border:1.5px solid #7a7a7a"></div><div class="t c" style="left:79.0px;top:904.5px;font-size:19.5px;color:#dedede;font-weight:400;">AM</div><div class="a" style="left:15px;top:942px;width:100px;height:40px;background:linear-gradient(#4a4a4a 0%,#383838 45%,#0a0a0a 47%,#000 100%);border:1.5px solid #7a7a7a"></div><div class="t c" style="left:-135.0px;top:952.5px;font-size:19.5px;color:#dedede;font-weight:400;">SAM</div><div class="a" style="left:122px;top:942px;width:100px;height:40px;background:linear-gradient(#4a4a4a 0%,#383838 45%,#0a0a0a 47%,#000 100%);border:1.5px solid #7a7a7a"></div><div class="t c" style="left:-28.0px;top:952.5px;font-size:19.5px;color:#dedede;font-weight:400;">ECSS-L</div><div class="a" style="left:229px;top:942px;width:100px;height:40px;background:linear-gradient(#4a4a4a 0%,#383838 45%,#0a0a0a 47%,#000 100%);border:1.5px solid #7a7a7a"></div><div class="t c" style="left:79.0px;top:952.5px;font-size:19.5px;color:#dedede;font-weight:400;">ECSS-U</div><div class="a" style="left:15px;top:990px;width:100px;height:40px;background:linear-gradient(#4a4a4a 0%,#383838 45%,#0a0a0a 47%,#000 100%);border:1.5px solid #7a7a7a"></div><div class="t c" style="left:-135.0px;top:1000.5px;font-size:19.5px;color:#dedede;font-weight:400;">CW-U</div><div class="a" style="left:122px;top:990px;width:100px;height:40px;background:linear-gradient(#4a4a4a 0%,#383838 45%,#0a0a0a 47%,#000 100%);border:1.5px solid #7a7a7a"></div><div class="t c" style="left:-28.0px;top:1000.5px;font-size:19.5px;color:#dedede;font-weight:400;">CW-L</div><div class="a" style="left:229px;top:990px;width:100px;height:40px;background:linear-gradient(#4a4a4a 0%,#383838 45%,#0a0a0a 47%,#000 100%);border:1.5px solid #7a7a7a"></div><div class="t c" style="left:79.0px;top:1000.5px;font-size:19.5px;color:#dedede;font-weight:400;">BC-FM</div><div class="a" style="left:15px;top:1038px;width:100px;height:40px;background:linear-gradient(#4a4a4a 0%,#383838 45%,#0a0a0a 47%,#000 100%);border:1.5px solid #7a7a7a"></div><div class="t c" style="left:-135.0px;top:1048.5px;font-size:19.5px;color:#dedede;font-weight:400;">N-FM</div><div class="a" style="left:122px;top:1038px;width:100px;height:40px;background:linear-gradient(#4a4a4a 0%,#383838 45%,#0a0a0a 47%,#000 100%);border:1.5px solid #7a7a7a"></div><div class="t c" style="left:-28.0px;top:1048.5px;font-size:19.5px;color:#dedede;font-weight:400;">W-FM</div><div class="a" style="left:229px;top:1038px;width:100px;height:40px;background:linear-gradient(#4a4a4a 0%,#383838 45%,#0a0a0a 47%,#000 100%);border:1.5px solid #7a7a7a"></div><div class="t c" style="left:79.0px;top:1048.5px;font-size:19.5px;color:#dedede;font-weight:400;">LSB</div><div class="a" style="left:15px;top:1086px;width:100px;height:40px;background:linear-gradient(#4a4a4a 0%,#383838 45%,#0a0a0a 47%,#000 100%);border:1.5px solid #7a7a7a"></div><div class="a" style="left:17px;top:1108px;width:96px;height:16px;background:radial-gradient(ellipse 50% 100% at 50% 100%,#c8c020 0%,rgba(160,150,10,0.6) 45%,rgba(0,0,0,0) 80%)"></div><div class="t c" style="left:-135.0px;top:1095.6px;font-size:20.5px;color:#fff;font-weight:700;">USB</div><div class="a" style="left:122px;top:1086px;width:100px;height:40px;background:linear-gradient(#4a4a4a 0%,#383838 45%,#0a0a0a 47%,#000 100%);border:1.5px solid #7a7a7a"></div><div class="t c" style="left:-28.0px;top:1096.5px;font-size:19.5px;color:#dedede;font-weight:400;">Wide-L</div><div class="a" style="left:229px;top:1086px;width:100px;height:40px;background:linear-gradient(#4a4a4a 0%,#383838 45%,#0a0a0a 47%,#000 100%);border:1.5px solid #7a7a7a"></div><div class="t c" style="left:79.0px;top:1096.5px;font-size:19.5px;color:#dedede;font-weight:400;">Wide-U</div><div class="a" style="left:15px;top:1134px;width:100px;height:40px;background:linear-gradient(#4a4a4a 0%,#383838 45%,#0a0a0a 47%,#000 100%);border:1.5px solid #7a7a7a"></div><div class="t c" style="left:-135.0px;top:1144.5px;font-size:19.5px;color:#dedede;font-weight:400;">DSB</div><div class="a" style="left:0px;top:1190px;width:458px;height:32px;background:linear-gradient(90deg,#fbfbfb,#e6e6e6 70%,#dcdcdc)"></div><div class="t" style="left:6.5px;top:1199.0px;font-size:19.3px;color:#2878b4;font-weight:700;">Filter</div><svg class="a" style="left:436px;top:1201.3px;" width="11" height="6" viewBox="0 0 11 6"><path d="M0 6H11L5.5 0Z" fill="#111"/></svg><div class="a" style="left:0px;top:1222px;width:458px;height:360px;background:#000"></div><div class="a" style="left:15px;top:1238px;width:100px;height:40px;background:linear-gradient(#4a4a4a 0%,#383838 45%,#0a0a0a 47%,#000 100%);border:1.5px solid #7a7a7a"></div><div class="t c" style="left:-135.0px;top:1248.5px;font-size:19.5px;color:#dedede;font-weight:400;">• • •</div><div class="a" style="left:122px;top:1238px;width:100px;height:40px;background:linear-gradient(#4a4a4a 0%,#383838 45%,#0a0a0a 47%,#000 100%);border:1.5px solid #7a7a7a"></div><div class="t c" style="left:-28.0px;top:1248.5px;font-size:19.5px;color:#dedede;font-weight:400;">0.6kHz</div><div class="a" style="left:229px;top:1238px;width:100px;height:40px;background:linear-gradient(#4a4a4a 0%,#383838 45%,#0a0a0a 47%,#000 100%);border:1.5px solid #7a7a7a"></div><div class="t c" style="left:79.0px;top:1248.5px;font-size:19.5px;color:#dedede;font-weight:400;">0.8kHz</div><div class="a" style="left:15px;top:1286px;width:100px;height:40px;background:linear-gradient(#4a4a4a 0%,#383838 45%,#0a0a0a 47%,#000 100%);border:1.5px solid #7a7a7a"></div><div class="t c" style="left:-135.0px;top:1296.5px;font-size:19.5px;color:#dedede;font-weight:400;">1.0kHz</div><div class="a" style="left:122px;top:1286px;width:100px;height:40px;background:linear-gradient(#4a4a4a 0%,#383838 45%,#0a0a0a 47%,#000 100%);border:1.5px solid #7a7a7a"></div><div class="t c" style="left:-28.0px;top:1296.5px;font-size:19.5px;color:#dedede;font-weight:400;">1.2kHz</div><div class="a" style="left:229px;top:1286px;width:100px;height:40px;background:linear-gradient(#4a4a4a 0%,#383838 45%,#0a0a0a 47%,#000 100%);border:1.5px solid #7a7a7a"></div><div class="t c" style="left:79.0px;top:1296.5px;font-size:19.5px;color:#dedede;font-weight:400;">1.4kHz</div><div class="a" style="left:15px;top:1334px;width:100px;height:40px;background:linear-gradient(#4a4a4a 0%,#383838 45%,#0a0a0a 47%,#000 100%);border:1.5px solid #7a7a7a"></div><div class="t c" style="left:-135.0px;top:1344.5px;font-size:19.5px;color:#dedede;font-weight:400;">1.6kHz</div><div class="a" style="left:122px;top:1334px;width:100px;height:40px;background:linear-gradient(#4a4a4a 0%,#383838 45%,#0a0a0a 47%,#000 100%);border:1.5px solid #7a7a7a"></div><div class="t c" style="left:-28.0px;top:1344.5px;font-size:19.5px;color:#dedede;font-weight:400;">1.8kHz</div><div class="a" style="left:229px;top:1334px;width:100px;height:40px;background:linear-gradient(#4a4a4a 0%,#383838 45%,#0a0a0a 47%,#000 100%);border:1.5px solid #7a7a7a"></div><div class="t c" style="left:79.0px;top:1344.5px;font-size:19.5px;color:#dedede;font-weight:400;">2.0kHz</div><div class="a" style="left:15px;top:1382px;width:100px;height:40px;background:linear-gradient(#4a4a4a 0%,#383838 45%,#0a0a0a 47%,#000 100%);border:1.5px solid #7a7a7a"></div><div class="t c" style="left:-135.0px;top:1392.5px;font-size:19.5px;color:#dedede;font-weight:400;">2.2kHz</div><div class="a" style="left:122px;top:1382px;width:100px;height:40px;background:linear-gradient(#4a4a4a 0%,#383838 45%,#0a0a0a 47%,#000 100%);border:1.5px solid #7a7a7a"></div><div class="t c" style="left:-28.0px;top:1392.5px;font-size:19.5px;color:#dedede;font-weight:400;">2.4kHz</div><div class="a" style="left:229px;top:1382px;width:100px;height:40px;background:linear-gradient(#4a4a4a 0%,#383838 45%,#0a0a0a 47%,#000 100%);border:1.5px solid #7a7a7a"></div><div class="t c" style="left:79.0px;top:1392.5px;font-size:19.5px;color:#dedede;font-weight:400;">2.6kHz</div><div class="a" style="left:15px;top:1430px;width:100px;height:40px;background:linear-gradient(#4a4a4a 0%,#383838 45%,#0a0a0a 47%,#000 100%);border:1.5px solid #7a7a7a"></div><div class="t c" style="left:-135.0px;top:1440.5px;font-size:19.5px;color:#dedede;font-weight:400;">2.8kHz</div><div class="a" style="left:122px;top:1430px;width:100px;height:40px;background:linear-gradient(#4a4a4a 0%,#383838 45%,#0a0a0a 47%,#000 100%);border:1.5px solid #7a7a7a"></div><div class="t c" style="left:-28.0px;top:1440.5px;font-size:19.5px;color:#dedede;font-weight:400;">3.0kHz</div><div class="a" style="left:229px;top:1430px;width:100px;height:40px;background:linear-gradient(#4a4a4a 0%,#383838 45%,#0a0a0a 47%,#000 100%);border:1.5px solid #7a7a7a"></div><div class="t c" style="left:79.0px;top:1440.5px;font-size:19.5px;color:#dedede;font-weight:400;">3.2kHz</div><div class="a" style="left:15px;top:1478px;width:100px;height:40px;background:linear-gradient(#4a4a4a 0%,#383838 45%,#0a0a0a 47%,#000 100%);border:1.5px solid #7a7a7a"></div><div class="t c" style="left:-135.0px;top:1488.5px;font-size:19.5px;color:#dedede;font-weight:400;">3.4kHz</div><div class="a" style="left:122px;top:1478px;width:100px;height:40px;background:linear-gradient(#4a4a4a 0%,#383838 45%,#0a0a0a 47%,#000 100%);border:1.5px solid #7a7a7a"></div><div class="a" style="left:124px;top:1500px;width:96px;height:16px;background:radial-gradient(ellipse 50% 100% at 50% 100%,#c8c020 0%,rgba(160,150,10,0.6) 45%,rgba(0,0,0,0) 80%)"></div><div class="t c" style="left:-28.0px;top:1487.6px;font-size:20.5px;color:#fff;font-weight:700;">3.6kHz</div><div class="a" style="left:229px;top:1478px;width:100px;height:40px;background:linear-gradient(#4a4a4a 0%,#383838 45%,#0a0a0a 47%,#000 100%);border:1.5px solid #7a7a7a"></div><div class="t c" style="left:79.0px;top:1488.5px;font-size:19.5px;color:#dedede;font-weight:400;">3.8kHz</div><div class="a" style="left:15px;top:1526px;width:100px;height:40px;background:linear-gradient(#4a4a4a 0%,#383838 45%,#0a0a0a 47%,#000 100%);border:1.5px solid #7a7a7a"></div><div class="t c" style="left:-135.0px;top:1536.5px;font-size:19.5px;color:#dedede;font-weight:400;">4.0kHz</div><div class="a" style="left:0px;top:1582px;width:458px;height:536px;background:linear-gradient(90deg,#f6f6f6,#ececec 60%,#e4e4e4)"></div><div class="t" style="left:13.0px;top:1590.7px;font-size:19.3px;color:#2878b4;font-weight:700;">Radio</div><div class="a" style="left:434px;top:1590px;width:16px;height:15px;background:#f4f4f4;border:1px solid #bbb"></div><svg class="a" style="left:437px;top:1595px;" width="10" height="6" viewBox="0 0 10 6"><path d="M0 0H10L5 6Z" fill="#111"/></svg><div class="t" style="left:6.4px;top:1622.4px;font-size:19.3px;color:#2878b4;font-weight:700;">AGC: Medium</div><svg class="a" style="left:436px;top:1624.7px;" width="11" height="6" viewBox="0 0 11 6"><path d="M0 0H11L5.5 6Z" fill="#111"/></svg><div class="t" style="left:6.4px;top:1653.1px;font-size:19.3px;color:#2878b4;font-weight:700;">CW: Off</div><svg class="a" style="left:436px;top:1655.4px;" width="11" height="6" viewBox="0 0 11 6"><path d="M0 0H11L5.5 6Z" fill="#111"/></svg><div class="t" style="left:6.4px;top:1684.1px;font-size:19.3px;color:#2878b4;font-weight:700;">Noise Blanker: Off</div><svg class="a" style="left:436px;top:1686.4px;" width="11" height="6" viewBox="0 0 11 6"><path d="M0 0H11L5.5 6Z" fill="#111"/></svg><div class="t" style="left:6.4px;top:1715.1px;font-size:19.3px;color:#2878b4;font-weight:700;">NR1: Ephraim Malah 20dB</div><svg class="a" style="left:436px;top:1718.4px;" width="11" height="6" viewBox="0 0 11 6"><path d="M0 6H11L5.5 0Z" fill="#111"/></svg><div class="a" style="left:6px;top:1745px;width:57px;height:42px;background:#fdfdfd;border:1px solid #dadada;border-radius:3px"></div><div class="t c" style="left:-165.2px;top:1756.9px;font-size:19px;color:#111;font-weight:400;">Off</div><div class="a" style="left:71px;top:1745px;width:57px;height:42px;background:#cce4f7;border:1px solid #3c7fb1;border-radius:3px"></div><div class="t c" style="left:-100.3px;top:1756.9px;font-size:19px;color:#111;font-weight:400;">NR1</div><div class="a" style="left:136px;top:1745px;width:57px;height:42px;background:#fdfdfd;border:1px solid #dadada;border-radius:3px"></div><div class="t c" style="left:-35.2px;top:1756.9px;font-size:19px;color:#111;font-weight:400;">NR2</div><div class="a" style="left:201px;top:1745px;width:57px;height:42px;background:#fdfdfd;border:1px solid #dadada;border-radius:3px"></div><div class="t c" style="left:29.7px;top:1756.9px;font-size:19px;color:#111;font-weight:400;">NR3</div><div class="a" style="left:267px;top:1745px;width:56px;height:42px;background:#fdfdfd;border:1px solid #dadada;border-radius:3px"></div><div class="t c" style="left:94.9px;top:1756.9px;font-size:19px;color:#111;font-weight:400;">NR4</div><div class="a" style="left:331px;top:1745px;width:57px;height:42px;background:#fdfdfd;border:1px solid #dadada;border-radius:3px"></div><div class="t c" style="left:159.9px;top:1756.9px;font-size:19px;color:#111;font-weight:400;">NR5</div><div class="t" style="left:16.0px;top:1816.2px;font-size:19px;color:#111;font-weight:400;">Level</div><div class="a" style="left:90px;top:1823px;width:241px;height:6px;background:#e8e8e8;border:1px solid #b4b4b4;border-radius:3px"></div><div class="a" style="left:319px;top:1806px;width:23px;height:32px;background:linear-gradient(#fafafa,#e0e0e0);border:1px solid #9a9a9a;border-radius:4px"></div><div class="a" style="left:327px;top:1812px;width:1px;height:20px;background:#aaa"></div><div class="a" style="left:332px;top:1812px;width:1px;height:20px;background:#aaa"></div><div class="t" style="left:365.0px;top:1815.9px;font-size:19px;color:#111;font-weight:400;">20 dB</div><div class="a" style="left:0px;top:1858px;width:458px;height:31px;background:linear-gradient(90deg,#f0f0f0,#e2e2e2 50%,#e8e8e8)"></div><div class="t" style="left:6.4px;top:1866.7px;font-size:19.3px;color:#2878b4;font-weight:700;">Notch: Off</div><svg class="a" style="left:436px;top:1869px;" width="11" height="6" viewBox="0 0 11 6"><path d="M0 6H11L5.5 0Z" fill="#111"/></svg><div class="a" style="left:5px;top:1902px;width:20px;height:19px;background:#fff;border:1px solid #444;border-radius:3px"></div><div class="t" style="left:30.4px;top:1901.7px;font-size:19px;color:#111;font-weight:400;">Auto enable</div><div class="a" style="left:0px;top:1934px;width:458px;height:30px;background:linear-gradient(90deg,#f8f8f8,#e8e8e8 60%,#e0e0e0)"></div><div class="t" style="left:6.4px;top:1942.1px;font-size:19.3px;color:#2878b4;font-weight:700;">Squelch: Off</div><svg class="a" style="left:436px;top:1944px;" width="11" height="6" viewBox="0 0 11 6"><path d="M0 0H11L5.5 6Z" fill="#111"/></svg><div class="a" style="left:0px;top:1964px;width:458px;height:153px;background:linear-gradient(90deg,#e8e8e6,#e4e4e0)"></div>
<div class="a" style="left:462px;top:259px;width:3308px;height:253px;background:linear-gradient(#0b0b0b,#101010 60%,#1a1a1a)"></div><div class="t" style="left:470.0px;top:271.4px;font-size:14.5px;color:#d0d0d0;font-weight:400;">-40 dBm</div><div class="t r" style="left:3362.0px;top:271.4px;font-size:14.5px;color:#d0d0d0;font-weight:400;">-40 dBm</div><div class="t" style="left:470.0px;top:302.4px;font-size:14.5px;color:#d0d0d0;font-weight:400;">-50 dBm</div><div class="t" style="left:470.0px;top:332.4px;font-size:14.5px;color:#d0d0d0;font-weight:400;">-60 dBm</div><div class="t r" style="left:3362.0px;top:332.4px;font-size:14.5px;color:#d0d0d0;font-weight:400;">-60 dBm</div><div class="t" style="left:470.0px;top:364.5px;font-size:14.5px;color:#d0d0d0;font-weight:400;">-70 dBm</div><div class="t r" style="left:3362.0px;top:364.5px;font-size:14.5px;color:#d0d0d0;font-weight:400;">-70 dBm</div><div class="t" style="left:470.0px;top:395.5px;font-size:14.5px;color:#d0d0d0;font-weight:400;">-80 dBm</div><div class="t r" style="left:3362.0px;top:395.5px;font-size:14.5px;color:#d0d0d0;font-weight:400;">-80 dBm</div><div class="t" style="left:470.0px;top:427.3px;font-size:14.5px;color:#d0d0d0;font-weight:400;">-90 dBm</div><div class="t r" style="left:3362.0px;top:427.3px;font-size:14.5px;color:#d0d0d0;font-weight:400;">-90 dBm</div><svg class="a" style="left:0;top:0;overflow:hidden;clip-path:inset(259px 70px 8px 462px)" width="3840" height="520"><defs><linearGradient id="sg" x1="0" y1="345" x2="0" y2="441" gradientUnits="userSpaceOnUse"><stop offset="0" stop-color="#c8e020"/><stop offset="0.35" stop-color="#40c030"/><stop offset="0.7" stop-color="#18a0b0"/><stop offset="1" stop-color="#1030c0"/></linearGradient></defs><path d="M538 278H3691" stroke="#9a9a9a" stroke-width="1.3" stroke-dasharray="2.5 5.5" opacity="0.75"/><path d="M538 309H3691" stroke="#9a9a9a" stroke-width="1.3" stroke-dasharray="2.5 5.5" opacity="0.75"/><path d="M538 340H3691" stroke="#9a9a9a" stroke-width="1.3" stroke-dasharray="2.5 5.5" opacity="0.75"/><path d="M538 371.5H3691" stroke="#9a9a9a" stroke-width="1.3" stroke-dasharray="2.5 5.5" opacity="0.75"/><path d="M538 402.5H3691" stroke="#9a9a9a" stroke-width="1.3" stroke-dasharray="2.5 5.5" opacity="0.75"/><path d="M538 434H3691" stroke="#9a9a9a" stroke-width="1.3" stroke-dasharray="2.5 5.5" opacity="0.75"/><polygon points="1650.2,437.0 1652.8,423.9 1655.4,406.9 1658.0,393.5 1660.6,387.4 1663.2,387.0 1665.8,382.9 1668.4,379.1 1671.0,379.1 1673.6,373.9 1676.2,373.4 1678.8,380.3 1681.4,388.0 1684.0,396.3 1686.6,400.1 1689.2,404.4 1691.8,406.3 1694.4,410.8 1697.0,406.1 1699.6,401.9 1702.2,408.4 1704.8,403.9 1707.4,397.6 1710.0,403.5 1712.6,403.2 1715.2,406.4 1717.8,407.1 1720.4,413.1 1723.0,419.7 1725.6,430.6 1728.2,428.2 1730.8,426.9 1733.4,413.8 1736.0,404.6 1738.6,410.0 1741.2,406.6 1743.8,403.4 1746.4,402.0 1749.0,404.1 1751.6,394.3 1754.2,394.8 1756.8,400.9 1759.4,398.7 1762.0,407.0 1764.6,406.6 1767.2,405.5 1769.8,403.8 1772.4,404.0 1775.0,398.9 1777.6,398.1 1780.2,400.9 1782.8,405.0 1785.4,408.3 1788.0,419.7 1790.6,425.3 1793.2,418.7 1795.8,411.9 1798.4,402.8 1801.0,405.1 1803.6,405.6 1806.2,418.6 1808.8,430.0 1811.4,434.0 1814.0,429.4 1816.6,415.5 1819.2,402.9 1821.8,389.7 1824.4,384.7 1827.0,381.9 1829.6,382.7 1832.2,383.9 1834.8,384.8 1837.4,387.2 1840.0,397.7 1842.6,400.5 1845.2,407.6 1847.8,426.2 1850.4,432.9 1853.0,430.1 1855.6,427.5 1858.2,425.7 1860.8,431.1 1863.4,431.0 1866.0,430.3 1868.6,411.9 1871.2,408.0 1873.8,407.8 1876.4,404.7 1879.0,407.7 1881.6,402.7 1884.2,401.2 1886.8,397.9 1889.4,400.0 1892.0,392.8 1894.6,391.8 1897.2,389.6 1899.8,385.6 1902.4,382.8 1905.0,377.1 1907.6,377.1 1910.2,376.9 1912.8,376.2 1915.4,376.4 1918.0,373.6 1920.6,370.3 1923.2,366.9 1925.8,369.3 1928.4,368.1 1931.0,366.3 1933.6,367.8 1936.2,371.1 1938.8,371.4 1941.4,370.8 1944.0,370.0 1946.6,375.4 1949.2,374.6 1951.8,374.0 1954.4,378.6 1957.0,380.9 1959.6,388.5 1962.2,394.9 1964.8,396.3 1967.4,421.1 1970.0,409.4 1972.6,395.8 1975.2,393.6 1977.8,390.3 1980.4,389.1 1983.0,392.2 1985.6,391.7 1988.2,392.3 1990.8,395.1 1993.4,400.1 1996.0,406.1 1998.6,413.5 2001.2,419.3 2003.8,424.3 2006.4,432.3 2009.0,436.7 2011.6,419.0 2014.2,396.0 2016.8,382.8 2019.4,376.8 2022.0,373.5 2024.6,371.9 2027.2,375.9 2029.8,381.5 2032.4,379.5 2035.0,380.7 2037.6,379.4 2040.2,384.0 2042.8,385.5 2045.4,389.3 2048.0,394.7 2050.6,400.2 2053.2,413.2 2055.8,426.5 2058.4,438.1 2058.4,441 1650.2,441" fill="url(#sg)"/><polygon points="2575.8,439.7 2578.4,423.8 2581.0,407.7 2583.6,393.8 2586.2,375.9 2588.8,390.7 2591.4,406.2 2594.0,406.8 2596.6,413.6 2599.2,417.3 2601.8,424.0 2604.4,434.4 2607.0,441.0 2609.6,427.0 2612.2,416.9 2614.8,410.1 2617.4,404.8 2620.0,397.3 2622.6,395.1 2625.2,394.3 2627.8,386.3 2630.4,379.6 2633.0,377.9 2635.6,383.8 2638.2,379.5 2640.8,370.9 2643.4,368.6 2646.0,379.4 2648.6,392.2 2651.2,403.5 2653.8,408.1 2656.4,413.9 2659.0,420.4 2661.6,424.8 2664.2,428.2 2666.8,412.4 2669.4,382.4 2672.0,382.8 2674.6,410.1 2677.2,419.8 2679.8,409.2 2682.4,404.0 2685.0,407.6 2687.6,410.7 2690.2,418.3 2692.8,436.0 2692.8,441 2575.8,441" fill="url(#sg)"/><polygon points="2778.6,441.0 2781.2,435.5 2783.8,428.9 2786.4,416.6 2789.0,404.2 2791.6,406.9 2794.2,404.5 2796.8,403.4 2799.4,400.1 2802.0,400.6 2804.6,399.7 2807.2,396.8 2809.8,395.5 2812.4,400.9 2815.0,400.0 2817.6,401.6 2820.2,399.5 2822.8,408.9 2825.4,412.5 2828.0,417.4 2830.6,421.9 2833.2,422.1 2835.8,423.5 2838.4,420.0 2841.0,423.0 2843.6,419.2 2846.2,425.1 2848.8,427.4 2851.4,428.2 2854.0,425.9 2856.6,427.4 2859.2,431.5 2861.8,438.4 2861.8,441 2778.6,441" fill="url(#sg)"/><polygon points="2188.4,436.8 2191.0,426.2 2193.6,409.6 2196.2,403.2 2198.8,399.9 2201.4,392.8 2204.0,401.6 2206.6,407.1 2209.2,413.5 2211.8,416.8 2214.4,422.3 2217.0,424.6 2219.6,426.2 2222.2,429.0 2224.8,429.3 2227.4,427.9 2230.0,426.9 2232.6,431.1 2235.2,430.5 2237.8,427.4 2240.4,427.1 2243.0,418.9 2245.6,412.4 2248.2,404.4 2250.8,404.0 2253.4,401.5 2256.0,396.5 2258.6,402.1 2261.2,403.0 2263.8,404.5 2266.4,407.9 2269.0,416.9 2271.6,433.8 2271.6,441 2188.4,441" fill="url(#sg)"/><path d="M1404 441 L1407 386 L1410 441Z" fill="url(#sg)"/><polyline points="462.0,458.3 464.6,461.4 467.2,454.7 469.8,457.7 472.4,463.2 475.0,459.7 477.6,451.2 480.2,462.9 482.8,451.9 485.4,452.2 488.0,462.1 490.6,461.4 493.2,463.9 495.8,465.2 498.4,466.8 501.0,470.6 503.6,464.4 506.2,466.2 508.8,465.2 511.4,463.3 514.0,464.2 516.6,469.0 519.2,468.0 521.8,473.3 524.4,466.5 527.0,462.7 529.6,459.1 532.2,468.7 534.8,470.6 537.4,465.0 540.0,465.4 542.6,459.2 545.2,457.1 547.8,458.6 550.4,454.1 553.0,461.6 555.6,452.0 558.2,449.3 560.8,445.2 563.4,465.5 566.0,462.6 568.6,462.9 571.2,462.2 573.8,466.9 576.4,457.3 579.0,464.6 581.6,465.1 584.2,459.8 586.8,470.7 589.4,454.2 592.0,461.5 594.6,463.6 597.2,459.5 599.8,459.0 602.4,447.4 605.0,452.1 607.6,450.7 610.2,450.2 612.8,455.7 615.4,444.4 618.0,451.2 620.6,453.9 623.2,455.3 625.8,453.8 628.4,452.9 631.0,453.2 633.6,453.0 636.2,455.1 638.8,457.0 641.4,458.4 644.0,462.6 646.6,463.1 649.2,455.6 651.8,458.2 654.4,457.6 657.0,451.5 659.6,456.1 662.2,446.9 664.8,467.3 667.4,456.9 670.0,456.0 672.6,459.4 675.2,457.7 677.8,452.6 680.4,465.0 683.0,455.2 685.6,455.7 688.2,452.7 690.8,457.2 693.4,456.7 696.0,453.0 698.6,447.1 701.2,469.6 703.8,458.4 706.4,460.7 709.0,464.2 711.6,469.3 714.2,458.2 716.8,464.8 719.4,463.2 722.0,467.2 724.6,458.9 727.2,467.6 729.8,462.9 732.4,463.2 735.0,469.4 737.6,467.1 740.2,464.3 742.8,450.5 745.4,433.1 748.0,438.3 750.6,448.7 753.2,455.6 755.8,422.5 758.4,426.8 761.0,443.5 763.6,459.8 766.2,465.0 768.8,459.0 771.4,460.5 774.0,466.2 776.6,460.8 779.2,467.4 781.8,461.3 784.4,448.7 787.0,463.7 789.6,473.2 792.2,465.5 794.8,464.4 797.4,459.4 800.0,457.4 802.6,461.6 805.2,463.7 807.8,466.5 810.4,454.9 813.0,458.1 815.6,455.9 818.2,455.5 820.8,452.6 823.4,458.6 826.0,453.2 828.6,446.7 831.2,444.8 833.8,450.5 836.4,457.7 839.0,457.5 841.6,460.2 844.2,457.4 846.8,458.8 849.4,461.1 852.0,464.4 854.6,448.3 857.2,452.5 859.8,460.3 862.4,460.1 865.0,461.9 867.6,459.3 870.2,450.2 872.8,457.1 875.4,458.0 878.0,455.7 880.6,456.7 883.2,458.4 885.8,441.6 888.4,455.0 891.0,457.1 893.6,455.8 896.2,450.8 898.8,447.4 901.4,450.7 904.0,452.0 906.6,449.7 909.2,449.2 911.8,449.1 914.4,464.1 917.0,460.4 919.6,448.0 922.2,455.4 924.8,456.5 927.4,460.2 930.0,464.6 932.6,463.6 935.2,463.6 937.8,460.2 940.4,463.9 943.0,452.0 945.6,462.0 948.2,463.8 950.8,471.1 953.4,469.4 956.0,466.2 958.6,459.6 961.2,467.1 963.8,462.2 966.4,459.2 969.0,458.5 971.6,462.9 974.2,463.0 976.8,462.8 979.4,463.6 982.0,460.6 984.6,459.5 987.2,460.8 989.8,464.6 992.4,476.0 995.0,462.3 997.6,469.6 1000.2,455.7 1002.8,461.5 1005.4,467.8 1008.0,470.6 1010.6,467.2 1013.2,467.8 1015.8,466.7 1018.4,461.2 1021.0,462.4 1023.6,462.4 1026.2,454.4 1028.8,465.0 1031.4,461.2 1034.0,468.6 1036.6,461.8 1039.2,457.8 1041.8,449.7 1044.4,448.7 1047.0,456.5 1049.6,448.2 1052.2,451.5 1054.8,456.3 1057.4,457.4 1060.0,463.2 1062.6,461.8 1065.2,452.0 1067.8,438.2 1070.4,457.1 1073.0,451.8 1075.6,463.7 1078.2,459.7 1080.8,455.5 1083.4,462.8 1086.0,459.9 1088.6,452.8 1091.2,449.3 1093.8,443.9 1096.4,451.7 1099.0,449.0 1101.6,437.6 1104.2,450.0 1106.8,439.6 1109.4,435.3 1112.0,435.0 1114.6,438.3 1117.2,440.2 1119.8,435.3 1122.4,441.7 1125.0,437.1 1127.6,433.3 1130.2,438.2 1132.8,439.1 1135.4,444.3 1138.0,441.8 1140.6,439.9 1143.2,447.2 1145.8,438.6 1148.4,432.6 1151.0,445.8 1153.6,446.2 1156.2,450.5 1158.8,449.4 1161.4,450.0 1164.0,458.5 1166.6,458.8 1169.2,451.4 1171.8,457.3 1174.4,450.1 1177.0,452.0 1179.6,456.8 1182.2,456.0 1184.8,459.1 1187.4,455.4 1190.0,459.1 1192.6,462.4 1195.2,461.7 1197.8,454.4 1200.4,441.1 1203.0,460.1 1205.6,463.5 1208.2,442.6 1210.8,468.8 1213.4,469.7 1216.0,465.9 1218.6,455.0 1221.2,465.9 1223.8,473.3 1226.4,469.4 1229.0,470.2 1231.6,469.0 1234.2,476.0 1236.8,467.8 1239.4,467.4 1242.0,467.1 1244.6,465.2 1247.2,468.2 1249.8,456.8 1252.4,456.6 1255.0,459.6 1257.6,457.7 1260.2,471.0 1262.8,453.0 1265.4,452.5 1268.0,459.1 1270.6,463.8 1273.2,458.5 1275.8,452.4 1278.4,464.2 1281.0,447.4 1283.6,468.3 1286.2,457.2 1288.8,461.1 1291.4,463.3 1294.0,456.5 1296.6,450.9 1299.2,460.7 1301.8,440.9 1304.4,460.1 1307.0,468.2 1309.6,459.7 1312.2,458.9 1314.8,456.8 1317.4,455.8 1320.0,451.4 1322.6,446.3 1325.2,441.6 1327.8,455.1 1330.4,448.8 1333.0,452.6 1335.6,440.2 1338.2,448.9 1340.8,450.0 1343.4,455.3 1346.0,454.5 1348.6,456.3 1351.2,454.7 1353.8,454.0 1356.4,454.5 1359.0,458.1 1361.6,460.2 1364.2,456.3 1366.8,456.5 1369.4,470.4 1372.0,460.6 1374.6,464.3 1377.2,462.2 1379.8,462.8 1382.4,459.8 1385.0,459.7 1387.6,465.7 1390.2,452.3 1392.8,461.4 1395.4,455.9 1398.0,457.1 1400.6,451.2 1403.2,426.9 1405.8,388.7 1408.4,390.5 1411.0,443.1 1413.6,457.2 1416.2,465.3 1418.8,461.2 1421.4,464.0 1424.0,466.8 1426.6,463.6 1429.2,470.2 1431.8,467.0 1434.4,467.6 1437.0,466.9 1439.6,466.1 1442.2,473.6 1444.8,464.1 1447.4,476.0 1450.0,463.3 1452.6,445.8 1455.2,467.6 1457.8,449.4 1460.4,448.7 1463.0,460.5 1465.6,457.7 1468.2,461.5 1470.8,459.3 1473.4,462.7 1476.0,455.6 1478.6,448.3 1481.2,449.1 1483.8,460.2 1486.4,454.3 1489.0,439.5 1491.6,449.0 1494.2,466.3 1496.8,455.2 1499.4,457.6 1502.0,454.7 1504.6,451.4 1507.2,451.3 1509.8,451.6 1512.4,454.9 1515.0,453.8 1517.6,451.5 1520.2,453.2 1522.8,454.5 1525.4,457.3 1528.0,449.8 1530.6,450.8 1533.2,448.9 1535.8,451.5 1538.4,453.4 1541.0,450.9 1543.6,447.2 1546.2,442.3 1548.8,455.2 1551.4,462.0 1554.0,444.7 1556.6,457.6 1559.2,453.1 1561.8,440.6 1564.4,449.0 1567.0,449.0 1569.6,451.9 1572.2,453.8 1574.8,450.1 1577.4,449.9 1580.0,449.9 1582.6,451.0 1585.2,444.8 1587.8,444.9 1590.4,438.3 1593.0,441.5 1595.6,441.2 1598.2,437.9 1600.8,445.7 1603.4,440.8 1606.0,434.4 1608.6,447.2 1611.2,445.9 1613.8,436.5 1616.4,438.5 1619.0,451.3 1621.6,435.0 1624.2,451.6 1626.8,454.4 1629.4,453.6 1632.0,454.0 1634.6,458.2 1637.2,461.8 1639.8,460.4 1642.4,465.5 1645.0,463.1 1647.6,469.7 1650.2,437.0 1652.8,423.9 1655.4,406.9 1658.0,393.5 1660.6,387.4 1663.2,387.0 1665.8,382.9 1668.4,379.1 1671.0,379.1 1673.6,373.9 1676.2,373.4 1678.8,380.3 1681.4,388.0 1684.0,396.3 1686.6,400.1 1689.2,404.4 1691.8,406.3 1694.4,410.8 1697.0,406.1 1699.6,401.9 1702.2,408.4 1704.8,403.9 1707.4,397.6 1710.0,403.5 1712.6,403.2 1715.2,406.4 1717.8,407.1 1720.4,413.1 1723.0,419.7 1725.6,430.6 1728.2,428.2 1730.8,426.9 1733.4,413.8 1736.0,404.6 1738.6,410.0 1741.2,406.6 1743.8,403.4 1746.4,402.0 1749.0,404.1 1751.6,394.3 1754.2,394.8 1756.8,400.9 1759.4,398.7 1762.0,407.0 1764.6,406.6 1767.2,405.5 1769.8,403.8 1772.4,404.0 1775.0,398.9 1777.6,398.1 1780.2,400.9 1782.8,405.0 1785.4,408.3 1788.0,419.7 1790.6,425.3 1793.2,418.7 1795.8,411.9 1798.4,402.8 1801.0,405.1 1803.6,405.6 1806.2,418.6 1808.8,430.0 1811.4,434.0 1814.0,429.4 1816.6,415.5 1819.2,402.9 1821.8,389.7 1824.4,384.7 1827.0,381.9 1829.6,382.7 1832.2,383.9 1834.8,384.8 1837.4,387.2 1840.0,397.7 1842.6,400.5 1845.2,407.6 1847.8,426.2 1850.4,432.9 1853.0,430.1 1855.6,427.5 1858.2,425.7 1860.8,431.1 1863.4,431.0 1866.0,430.3 1868.6,411.9 1871.2,408.0 1873.8,407.8 1876.4,404.7 1879.0,407.7 1881.6,402.7 1884.2,401.2 1886.8,397.9 1889.4,400.0 1892.0,392.8 1894.6,391.8 1897.2,389.6 1899.8,385.6 1902.4,382.8 1905.0,377.1 1907.6,377.1 1910.2,376.9 1912.8,376.2 1915.4,376.4 1918.0,373.6 1920.6,370.3 1923.2,366.9 1925.8,369.3 1928.4,368.1 1931.0,366.3 1933.6,367.8 1936.2,371.1 1938.8,371.4 1941.4,370.8 1944.0,370.0 1946.6,375.4 1949.2,374.6 1951.8,374.0 1954.4,378.6 1957.0,380.9 1959.6,388.5 1962.2,394.9 1964.8,396.3 1967.4,421.1 1970.0,409.4 1972.6,395.8 1975.2,393.6 1977.8,390.3 1980.4,389.1 1983.0,392.2 1985.6,391.7 1988.2,392.3 1990.8,395.1 1993.4,400.1 1996.0,406.1 1998.6,413.5 2001.2,419.3 2003.8,424.3 2006.4,432.3 2009.0,436.7 2011.6,419.0 2014.2,396.0 2016.8,382.8 2019.4,376.8 2022.0,373.5 2024.6,371.9 2027.2,375.9 2029.8,381.5 2032.4,379.5 2035.0,380.7 2037.6,379.4 2040.2,384.0 2042.8,385.5 2045.4,389.3 2048.0,394.7 2050.6,400.2 2053.2,413.2 2055.8,426.5 2058.4,438.1 2061.0,462.2 2063.6,459.8 2066.2,454.9 2068.8,456.9 2071.4,462.4 2074.0,467.7 2076.6,461.1 2079.2,459.6 2081.8,466.2 2084.4,459.0 2087.0,457.5 2089.6,468.8 2092.2,463.6 2094.8,465.7 2097.4,460.4 2100.0,465.9 2102.6,457.4 2105.2,461.3 2107.8,461.8 2110.4,465.0 2113.0,467.6 2115.6,464.9 2118.2,456.7 2120.8,467.5 2123.4,457.2 2126.0,461.0 2128.6,458.6 2131.2,468.9 2133.8,461.6 2136.4,469.6 2139.0,470.9 2141.6,470.6 2144.2,471.9 2146.8,468.3 2149.4,467.6 2152.0,461.6 2154.6,464.9 2157.2,456.9 2159.8,471.9 2162.4,464.8 2165.0,463.9 2167.6,467.6 2170.2,461.4 2172.8,439.6 2175.4,462.5 2178.0,456.3 2180.6,468.1 2183.2,452.5 2185.8,458.7 2188.4,436.8 2191.0,426.2 2193.6,409.6 2196.2,403.2 2198.8,399.9 2201.4,392.8 2204.0,401.6 2206.6,407.1 2209.2,413.5 2211.8,416.8 2214.4,422.3 2217.0,424.6 2219.6,426.2 2222.2,429.0 2224.8,429.3 2227.4,427.9 2230.0,426.9 2232.6,431.1 2235.2,430.5 2237.8,427.4 2240.4,427.1 2243.0,418.9 2245.6,412.4 2248.2,404.4 2250.8,404.0 2253.4,401.5 2256.0,396.5 2258.6,402.1 2261.2,403.0 2263.8,404.5 2266.4,407.9 2269.0,416.9 2271.6,433.8 2274.2,455.4 2276.8,461.9 2279.4,452.3 2282.0,451.0 2284.6,457.9 2287.2,456.0 2289.8,462.9 2292.4,460.6 2295.0,457.9 2297.6,456.7 2300.2,454.8 2302.8,453.4 2305.4,460.4 2308.0,447.0 2310.6,456.8 2313.2,458.4 2315.8,458.5 2318.4,452.8 2321.0,459.3 2323.6,451.0 2326.2,459.8 2328.8,453.9 2331.4,463.6 2334.0,443.9 2336.6,452.7 2339.2,461.2 2341.8,467.0 2344.4,461.3 2347.0,455.9 2349.6,457.6 2352.2,454.9 2354.8,449.4 2357.4,450.3 2360.0,454.4 2362.6,459.0 2365.2,453.5 2367.8,450.6 2370.4,453.0 2373.0,452.3 2375.6,445.0 2378.2,449.2 2380.8,444.5 2383.4,451.1 2386.0,442.9 2388.6,447.3 2391.2,448.9 2393.8,442.6 2396.4,451.2 2399.0,448.2 2401.6,449.2 2404.2,454.0 2406.8,453.9 2409.4,447.5 2412.0,443.1 2414.6,461.7 2417.2,452.9 2419.8,453.4 2422.4,462.2 2425.0,455.6 2427.6,446.5 2430.2,457.5 2432.8,455.0 2435.4,459.2 2438.0,454.8 2440.6,461.5 2443.2,448.0 2445.8,448.4 2448.4,450.6 2451.0,442.3 2453.6,444.7 2456.2,442.6 2458.8,448.7 2461.4,439.7 2464.0,444.6 2466.6,452.5 2469.2,425.1 2471.8,443.1 2474.4,438.9 2477.0,450.4 2479.6,452.4 2482.2,445.5 2484.8,453.9 2487.4,447.5 2490.0,453.1 2492.6,452.5 2495.2,454.6 2497.8,459.5 2500.4,438.3 2503.0,455.4 2505.6,464.1 2508.2,457.0 2510.8,457.7 2513.4,457.3 2516.0,448.4 2518.6,455.7 2521.2,448.6 2523.8,453.3 2526.4,454.3 2529.0,458.3 2531.6,459.9 2534.2,454.9 2536.8,456.1 2539.4,456.2 2542.0,458.8 2544.6,464.4 2547.2,464.0 2549.8,455.3 2552.4,455.2 2555.0,458.8 2557.6,463.1 2560.2,471.4 2562.8,462.0 2565.4,464.3 2568.0,462.9 2570.6,465.3 2573.2,464.8 2575.8,439.7 2578.4,423.8 2581.0,407.7 2583.6,393.8 2586.2,375.9 2588.8,390.7 2591.4,406.2 2594.0,406.8 2596.6,413.6 2599.2,417.3 2601.8,424.0 2604.4,434.4 2607.0,442.4 2609.6,427.0 2612.2,416.9 2614.8,410.1 2617.4,404.8 2620.0,397.3 2622.6,395.1 2625.2,394.3 2627.8,386.3 2630.4,379.6 2633.0,377.9 2635.6,383.8 2638.2,379.5 2640.8,370.9 2643.4,368.6 2646.0,379.4 2648.6,392.2 2651.2,403.5 2653.8,408.1 2656.4,413.9 2659.0,420.4 2661.6,424.8 2664.2,428.2 2666.8,412.4 2669.4,382.4 2672.0,382.8 2674.6,410.1 2677.2,419.8 2679.8,409.2 2682.4,404.0 2685.0,407.6 2687.6,410.7 2690.2,418.3 2692.8,436.0 2695.4,446.7 2698.0,454.2 2700.6,452.6 2703.2,457.1 2705.8,455.9 2708.4,464.4 2711.0,463.7 2713.6,457.1 2716.2,455.9 2718.8,457.7 2721.4,456.6 2724.0,461.8 2726.6,461.6 2729.2,459.1 2731.8,449.5 2734.4,452.0 2737.0,448.6 2739.6,455.0 2742.2,451.9 2744.8,455.9 2747.4,438.7 2750.0,456.6 2752.6,453.2 2755.2,458.9 2757.8,457.4 2760.4,454.1 2763.0,463.5 2765.6,459.8 2768.2,453.3 2770.8,461.2 2773.4,460.8 2776.0,471.2 2778.6,448.4 2781.2,435.5 2783.8,428.9 2786.4,416.6 2789.0,404.2 2791.6,406.9 2794.2,404.5 2796.8,403.4 2799.4,400.1 2802.0,400.6 2804.6,399.7 2807.2,396.8 2809.8,395.5 2812.4,400.9 2815.0,400.0 2817.6,401.6 2820.2,399.5 2822.8,408.9 2825.4,412.5 2828.0,417.4 2830.6,421.9 2833.2,422.1 2835.8,423.5 2838.4,420.0 2841.0,423.0 2843.6,419.2 2846.2,425.1 2848.8,427.4 2851.4,428.2 2854.0,425.9 2856.6,427.4 2859.2,431.5 2861.8,438.4 2864.4,464.1 2867.0,466.3 2869.6,462.3 2872.2,462.3 2874.8,468.4 2877.4,464.2 2880.0,461.9 2882.6,460.8 2885.2,454.7 2887.8,456.3 2890.4,455.8 2893.0,457.6 2895.6,464.3 2898.2,458.2 2900.8,462.5 2903.4,464.8 2906.0,461.3 2908.6,463.8 2911.2,446.2 2913.8,458.2 2916.4,459.1 2919.0,456.1 2921.6,468.3 2924.2,466.1 2926.8,456.1 2929.4,461.4 2932.0,449.7 2934.6,453.5 2937.2,458.5 2939.8,459.1 2942.4,453.1 2945.0,464.9 2947.6,446.1 2950.2,447.5 2952.8,453.8 2955.4,457.5 2958.0,449.2 2960.6,460.7 2963.2,452.1 2965.8,454.8 2968.4,455.9 2971.0,451.9 2973.6,448.8 2976.2,452.9 2978.8,460.6 2981.4,461.3 2984.0,457.6 2986.6,447.9 2989.2,456.5 2991.8,460.8 2994.4,458.2 2997.0,468.2 2999.6,464.3 3002.2,453.4 3004.8,459.7 3007.4,456.1 3010.0,465.3 3012.6,458.4 3015.2,464.5 3017.8,464.5 3020.4,455.3 3023.0,456.4 3025.6,460.6 3028.2,467.3 3030.8,454.9 3033.4,457.6 3036.0,455.6 3038.6,454.4 3041.2,462.3 3043.8,462.0 3046.4,460.3 3049.0,460.4 3051.6,459.4 3054.2,464.1 3056.8,465.4 3059.4,468.1 3062.0,458.5 3064.6,472.7 3067.2,469.1 3069.8,453.2 3072.4,465.7 3075.0,464.2 3077.6,466.4 3080.2,463.8 3082.8,464.5 3085.4,463.7 3088.0,457.9 3090.6,457.2 3093.2,464.7 3095.8,457.3 3098.4,460.3 3101.0,459.4 3103.6,460.4 3106.2,457.5 3108.8,460.6 3111.4,460.8 3114.0,460.4 3116.6,462.3 3119.2,464.5 3121.8,462.6 3124.4,464.4 3127.0,472.0 3129.6,461.1 3132.2,458.6 3134.8,462.6 3137.4,464.8 3140.0,469.0 3142.6,459.5 3145.2,458.5 3147.8,457.8 3150.4,455.7 3153.0,462.1 3155.6,458.9 3158.2,456.5 3160.8,456.4 3163.4,461.5 3166.0,451.7 3168.6,453.3 3171.2,451.0 3173.8,454.6 3176.4,450.9 3179.0,446.1 3181.6,447.8 3184.2,452.4 3186.8,450.3 3189.4,462.6 3192.0,450.1 3194.6,462.1 3197.2,458.8 3199.8,462.1 3202.4,457.7 3205.0,449.0 3207.6,456.0 3210.2,460.6 3212.8,460.8 3215.4,465.2 3218.0,456.2 3220.6,462.8 3223.2,458.6 3225.8,458.0 3228.4,463.5 3231.0,460.5 3233.6,460.5 3236.2,459.4 3238.8,455.3 3241.4,455.6 3244.0,448.5 3246.6,448.4 3249.2,442.6 3251.8,459.2 3254.4,456.6 3257.0,460.9 3259.6,461.5 3262.2,458.8 3264.8,460.8 3267.4,458.1 3270.0,461.2 3272.6,467.9 3275.2,454.8 3277.8,462.6 3280.4,469.1 3283.0,460.1 3285.6,461.4 3288.2,466.9 3290.8,465.0 3293.4,465.4 3296.0,454.7 3298.6,459.2 3301.2,453.0 3303.8,471.0 3306.4,464.8 3309.0,458.5 3311.6,458.0 3314.2,461.9 3316.8,457.8 3319.4,454.6 3322.0,460.6 3324.6,466.7 3327.2,463.0 3329.8,464.5 3332.4,472.8 3335.0,461.8 3337.6,470.2 3340.2,463.0 3342.8,462.2 3345.4,459.7 3348.0,470.3 3350.6,463.9 3353.2,452.2 3355.8,472.8 3358.4,462.7 3361.0,464.5 3363.6,459.0 3366.2,460.0 3368.8,459.5 3371.4,461.6 3374.0,457.1 3376.6,457.5 3379.2,461.8 3381.8,459.5 3384.4,452.6 3387.0,453.9 3389.6,448.6 3392.2,453.8 3394.8,458.6 3397.4,456.5 3400.0,452.8 3402.6,447.5 3405.2,454.9 3407.8,453.7 3410.4,461.7 3413.0,466.8 3415.6,462.3 3418.2,463.5 3420.8,457.3 3423.4,458.6 3426.0,455.8 3428.6,464.6 3431.2,451.1 3433.8,451.0 3436.4,458.7 3439.0,454.4 3441.6,456.4 3444.2,448.5 3446.8,449.6 3449.4,459.5 3452.0,459.8 3454.6,455.3 3457.2,454.3 3459.8,451.6 3462.4,453.8 3465.0,457.3 3467.6,445.9 3470.2,454.5 3472.8,458.7 3475.4,462.7 3478.0,456.5 3480.6,461.1 3483.2,457.3 3485.8,444.2 3488.4,465.2 3491.0,467.0 3493.6,466.0 3496.2,464.2 3498.8,459.7 3501.4,466.9 3504.0,456.3 3506.6,468.8 3509.2,461.1 3511.8,464.7 3514.4,463.8 3517.0,461.2 3519.6,455.7 3522.2,445.0 3524.8,457.7 3527.4,458.4 3530.0,459.5 3532.6,457.4 3535.2,455.7 3537.8,461.6 3540.4,445.3 3543.0,443.0 3545.6,458.0 3548.2,448.1 3550.8,454.7 3553.4,454.8 3556.0,465.8 3558.6,451.1 3561.2,459.7 3563.8,451.9 3566.4,456.0 3569.0,464.0 3571.6,457.2 3574.2,462.4 3576.8,456.4 3579.4,460.7 3582.0,458.1 3584.6,457.6 3587.2,451.1 3589.8,457.9 3592.4,458.7 3595.0,455.7 3597.6,442.7 3600.2,447.3 3602.8,446.0 3605.4,442.7 3608.0,443.0 3610.6,433.6 3613.2,431.2 3615.8,426.9 3618.4,420.6 3621.0,435.3 3623.6,435.9 3626.2,439.3 3628.8,440.5 3631.4,446.6 3634.0,453.9 3636.6,445.4 3639.2,461.2 3641.8,449.5 3644.4,460.0 3647.0,462.7 3649.6,459.7 3652.2,454.8 3654.8,452.8 3657.4,451.1 3660.0,446.2 3662.6,455.1 3665.2,446.9 3667.8,452.8 3670.4,462.5 3673.0,453.1 3675.6,458.2 3678.2,454.8 3680.8,455.3 3683.4,455.2 3686.0,461.5 3688.6,459.8 3691.2,451.4 3693.8,454.2 3696.4,454.6 3699.0,465.6 3701.6,460.6 3704.2,452.9 3706.8,466.1 3709.4,460.9 3712.0,453.4 3714.6,461.2 3717.2,462.7 3719.8,457.7 3722.4,454.4 3725.0,459.4 3727.6,455.3 3730.2,460.6 3732.8,458.7 3735.4,462.0 3738.0,448.6 3740.6,458.7 3743.2,465.3 3745.8,459.7 3748.4,462.2 3751.0,456.4 3753.6,467.5 3756.2,467.1 3758.8,455.9 3761.4,469.3 3764.0,456.4 3766.6,471.1 3769.2,467.0" fill="none" stroke="#c8c8c8" stroke-width="1.6" stroke-linejoin="round"/></svg><svg class="a" style="left:540px;top:260px;" width="390" height="165" viewBox="0 0 2576 1090"><defs><linearGradient id="smg" x1="0" y1="0" x2="0" y2="1"><stop offset="0" stop-color="#f9d07c"/><stop offset="0.42" stop-color="#f4dc92"/><stop offset="0.62" stop-color="#d2bf7e"/><stop offset="1" stop-color="#5e5844"/></linearGradient><linearGradient id="tag" x1="0" y1="0" x2="0" y2="1"><stop offset="0" stop-color="#e6f24a"/><stop offset="1" stop-color="#b4d22a"/></linearGradient></defs><rect x="35" y="40" width="2515" height="1000" fill="#3a3a30"/><rect x="50" y="55" width="2490" height="970" fill="url(#smg)" stroke="#9a9070" stroke-width="6"/><path d="M50 735H2540M50 940H2540" stroke="#f0e8c0" stroke-width="5" stroke-dasharray="16 30" opacity="0.5"/><path d="M290 540 Q700 380 1290 365 V265" fill="none" stroke="#2e2418" stroke-width="22"/><g stroke="#2e2418" stroke-width="20" fill="none"><path d="M470 465L455 380M675 410L660 325M880 385L870 290M1085 370L1080 265"/></g><g stroke="#2e2418" stroke-width="12" fill="none"><path d="M375 500L362 440M575 435L567 385M775 395L770 340M985 375L980 310M1190 368L1190 300"/></g><path d="M1345 370 Q1900 390 2290 540 L2330 450" fill="none" stroke="#c01810" stroke-width="26"/><g stroke="#c01810" stroke-width="20" fill="none"><path d="M1610 375L1620 280M1970 430L1980 340"/></g><g stroke="#c01810" stroke-width="12" fill="none"><path d="M1435 370L1440 300M1790 395L1800 340M2140 470L2150 420"/></g><g font-family="Liberation Sans" font-style="italic" font-size="120" fill="#4a3c24"><text x="440" y="345">1</text><text x="625" y="282">3</text><text x="845" y="250">5</text><text x="1055" y="222">7</text><text x="1255" y="215">9</text><text x="1530" y="232">+20</text><text x="1885" y="295">+40</text><text x="2245" y="395">+60</text></g><path d="M740 270 L880 1040 M752 268 L892 1040" stroke="#d8d8d0" stroke-width="7"/><path d="M746 270 L886 1040" stroke="#707070" stroke-width="3"/><path d="M1120 210 L1170 1040" stroke="#e8e880" stroke-width="9"/><path d="M1395 170 L1375 1040" stroke="#e02010" stroke-width="11"/><rect x="700" y="705" width="535" height="205" rx="30" fill="url(#tag)" stroke="#7a8a20" stroke-width="6"/><rect x="1350" y="705" width="540" height="205" rx="30" fill="url(#tag)" stroke="#7a8a20" stroke-width="6"/><text x="965" y="858" font-family="Liberation Sans" font-weight="700" font-size="140" text-anchor="middle" fill="#111">S9+7</text><text x="1615" y="858" font-family="Liberation Sans" font-weight="700" font-size="140" text-anchor="middle" fill="#111">36.9</text><text x="0" y="0" font-family="Liberation Sans" font-size="48" fill="#222" transform="translate(1872,858) rotate(-90)">SNR</text></svg><svg class="a" style="left:735px;top:395px;" width="30" height="66" viewBox="0 0 30 66"><defs><linearGradient id="spkg" x1="0" y1="0" x2="0" y2="1"><stop offset="0" stop-color="#d0f0ff"/><stop offset="1" stop-color="#3080d0"/></linearGradient></defs><path d="M9 58 L11.5 21 L14 50 L17 58Z M18 58 L20.5 4 L23 58Z" fill="url(#spkg)" opacity="0.85"/><path d="M7 62 L11.5 21 L15 50 L17.5 40 L20.5 4 L24 62" fill="none" stroke="#d0dce8" stroke-width="1.4"/></svg><div class="a" style="left:2184px;top:263px;width:120px;height:173px;background:linear-gradient(rgba(20,150,20,0.85) 0%,rgba(20,120,20,0.7) 40%,rgba(40,90,40,0.45) 75%,rgba(60,70,60,0.4) 100%);border:1.5px solid #50e050"></div><div class="a" style="left:2184px;top:263px;width:120px;height:10px;background:linear-gradient(90deg,#30c030,#60f060 50%,#30c030)"></div><div class="a" style="left:2184px;top:324px;width:120px;height:1.5px;background:#50e050"></div><div class="a" style="left:2184px;top:426px;width:120px;height:10px;background:linear-gradient(#50a050,#40b040)"></div><div class="a" style="left:2229px;top:279px;width:28px;height:28px;background:rgba(0,60,0,0.75);border-radius:3px"></div><div class="t c" style="left:2043.0px;top:284.6px;font-size:17px;color:#e8ffe8;font-weight:400;">1</div><svg class="a" style="left:0;top:0;overflow:hidden;clip-path:inset(340px 1538px 94px 2186px)" width="3840" height="520"><defs><linearGradient id="sg" x1="0" y1="345" x2="0" y2="441" gradientUnits="userSpaceOnUse"><stop offset="0" stop-color="#c8e020"/><stop offset="0.35" stop-color="#40c030"/><stop offset="0.7" stop-color="#18a0b0"/><stop offset="1" stop-color="#1030c0"/></linearGradient></defs><path d="M538 278H3691" stroke="#9a9a9a" stroke-width="1.3" stroke-dasharray="2.5 5.5" opacity="0.75"/><path d="M538 309H3691" stroke="#9a9a9a" stroke-width="1.3" stroke-dasharray="2.5 5.5" opacity="0.75"/><path d="M538 340H3691" stroke="#9a9a9a" stroke-width="1.3" stroke-dasharray="2.5 5.5" opacity="0.75"/><path d="M538 371.5H3691" stroke="#9a9a9a" stroke-width="1.3" stroke-dasharray="2.5 5.5" opacity="0.75"/><path d="M538 402.5H3691" stroke="#9a9a9a" stroke-width="1.3" stroke-dasharray="2.5 5.5" opacity="0.75"/><path d="M538 434H3691" stroke="#9a9a9a" stroke-width="1.3" stroke-dasharray="2.5 5.5" opacity="0.75"/><polygon points="1650.2,437.0 1652.8,423.9 1655.4,406.9 1658.0,393.5 1660.6,387.4 1663.2,387.0 1665.8,382.9 1668.4,379.1 1671.0,379.1 1673.6,373.9 1676.2,373.4 1678.8,380.3 1681.4,388.0 1684.0,396.3 1686.6,400.1 1689.2,404.4 1691.8,406.3 1694.4,410.8 1697.0,406.1 1699.6,401.9 1702.2,408.4 1704.8,403.9 1707.4,397.6 1710.0,403.5 1712.6,403.2 1715.2,406.4 1717.8,407.1 1720.4,413.1 1723.0,419.7 1725.6,430.6 1728.2,428.2 1730.8,426.9 1733.4,413.8 1736.0,404.6 1738.6,410.0 1741.2,406.6 1743.8,403.4 1746.4,402.0 1749.0,404.1 1751.6,394.3 1754.2,394.8 1756.8,400.9 1759.4,398.7 1762.0,407.0 1764.6,406.6 1767.2,405.5 1769.8,403.8 1772.4,404.0 1775.0,398.9 1777.6,398.1 1780.2,400.9 1782.8,405.0 1785.4,408.3 1788.0,419.7 1790.6,425.3 1793.2,418.7 1795.8,411.9 1798.4,402.8 1801.0,405.1 1803.6,405.6 1806.2,418.6 1808.8,430.0 1811.4,434.0 1814.0,429.4 1816.6,415.5 1819.2,402.9 1821.8,389.7 1824.4,384.7 1827.0,381.9 1829.6,382.7 1832.2,383.9 1834.8,384.8 1837.4,387.2 1840.0,397.7 1842.6,400.5 1845.2,407.6 1847.8,426.2 1850.4,432.9 1853.0,430.1 1855.6,427.5 1858.2,425.7 1860.8,431.1 1863.4,431.0 1866.0,430.3 1868.6,411.9 1871.2,408.0 1873.8,407.8 1876.4,404.7 1879.0,407.7 1881.6,402.7 1884.2,401.2 1886.8,397.9 1889.4,400.0 1892.0,392.8 1894.6,391.8 1897.2,389.6 1899.8,385.6 1902.4,382.8 1905.0,377.1 1907.6,377.1 1910.2,376.9 1912.8,376.2 1915.4,376.4 1918.0,373.6 1920.6,370.3 1923.2,366.9 1925.8,369.3 1928.4,368.1 1931.0,366.3 1933.6,367.8 1936.2,371.1 1938.8,371.4 1941.4,370.8 1944.0,370.0 1946.6,375.4 1949.2,374.6 1951.8,374.0 1954.4,378.6 1957.0,380.9 1959.6,388.5 1962.2,394.9 1964.8,396.3 1967.4,421.1 1970.0,409.4 1972.6,395.8 1975.2,393.6 1977.8,390.3 1980.4,389.1 1983.0,392.2 1985.6,391.7 1988.2,392.3 1990.8,395.1 1993.4,400.1 1996.0,406.1 1998.6,413.5 2001.2,419.3 2003.8,424.3 2006.4,432.3 2009.0,436.7 2011.6,419.0 2014.2,396.0 2016.8,382.8 2019.4,376.8 2022.0,373.5 2024.6,371.9 2027.2,375.9 2029.8,381.5 2032.4,379.5 2035.0,380.7 2037.6,379.4 2040.2,384.0 2042.8,385.5 2045.4,389.3 2048.0,394.7 2050.6,400.2 2053.2,413.2 2055.8,426.5 2058.4,438.1 2058.4,441 1650.2,441" fill="url(#sg)"/><polygon points="2575.8,439.7 2578.4,423.8 2581.0,407.7 2583.6,393.8 2586.2,375.9 2588.8,390.7 2591.4,406.2 2594.0,406.8 2596.6,413.6 2599.2,417.3 2601.8,424.0 2604.4,434.4 2607.0,441.0 2609.6,427.0 2612.2,416.9 2614.8,410.1 2617.4,404.8 2620.0,397.3 2622.6,395.1 2625.2,394.3 2627.8,386.3 2630.4,379.6 2633.0,377.9 2635.6,383.8 2638.2,379.5 2640.8,370.9 2643.4,368.6 2646.0,379.4 2648.6,392.2 2651.2,403.5 2653.8,408.1 2656.4,413.9 2659.0,420.4 2661.6,424.8 2664.2,428.2 2666.8,412.4 2669.4,382.4 2672.0,382.8 2674.6,410.1 2677.2,419.8 2679.8,409.2 2682.4,404.0 2685.0,407.6 2687.6,410.7 2690.2,418.3 2692.8,436.0 2692.8,441 2575.8,441" fill="url(#sg)"/><polygon points="2778.6,441.0 2781.2,435.5 2783.8,428.9 2786.4,416.6 2789.0,404.2 2791.6,406.9 2794.2,404.5 2796.8,403.4 2799.4,400.1 2802.0,400.6 2804.6,399.7 2807.2,396.8 2809.8,395.5 2812.4,400.9 2815.0,400.0 2817.6,401.6 2820.2,399.5 2822.8,408.9 2825.4,412.5 2828.0,417.4 2830.6,421.9 2833.2,422.1 2835.8,423.5 2838.4,420.0 2841.0,423.0 2843.6,419.2 2846.2,425.1 2848.8,427.4 2851.4,428.2 2854.0,425.9 2856.6,427.4 2859.2,431.5 2861.8,438.4 2861.8,441 2778.6,441" fill="url(#sg)"/><polygon points="2188.4,436.8 2191.0,426.2 2193.6,409.6 2196.2,403.2 2198.8,399.9 2201.4,392.8 2204.0,401.6 2206.6,407.1 2209.2,413.5 2211.8,416.8 2214.4,422.3 2217.0,424.6 2219.6,426.2 2222.2,429.0 2224.8,429.3 2227.4,427.9 2230.0,426.9 2232.6,431.1 2235.2,430.5 2237.8,427.4 2240.4,427.1 2243.0,418.9 2245.6,412.4 2248.2,404.4 2250.8,404.0 2253.4,401.5 2256.0,396.5 2258.6,402.1 2261.2,403.0 2263.8,404.5 2266.4,407.9 2269.0,416.9 2271.6,433.8 2271.6,441 2188.4,441" fill="url(#sg)"/><path d="M1404 441 L1407 386 L1410 441Z" fill="url(#sg)"/><polyline points="462.0,458.3 464.6,461.4 467.2,454.7 469.8,457.7 472.4,463.2 475.0,459.7 477.6,451.2 480.2,462.9 482.8,451.9 485.4,452.2 488.0,462.1 490.6,461.4 493.2,463.9 495.8,465.2 498.4,466.8 501.0,470.6 503.6,464.4 506.2,466.2 508.8,465.2 511.4,463.3 514.0,464.2 516.6,469.0 519.2,468.0 521.8,473.3 524.4,466.5 527.0,462.7 529.6,459.1 532.2,468.7 534.8,470.6 537.4,465.0 540.0,465.4 542.6,459.2 545.2,457.1 547.8,458.6 550.4,454.1 553.0,461.6 555.6,452.0 558.2,449.3 560.8,445.2 563.4,465.5 566.0,462.6 568.6,462.9 571.2,462.2 573.8,466.9 576.4,457.3 579.0,464.6 581.6,465.1 584.2,459.8 586.8,470.7 589.4,454.2 592.0,461.5 594.6,463.6 597.2,459.5 599.8,459.0 602.4,447.4 605.0,452.1 607.6,450.7 610.2,450.2 612.8,455.7 615.4,444.4 618.0,451.2 620.6,453.9 623.2,455.3 625.8,453.8 628.4,452.9 631.0,453.2 633.6,453.0 636.2,455.1 638.8,457.0 641.4,458.4 644.0,462.6 646.6,463.1 649.2,455.6 651.8,458.2 654.4,457.6 657.0,451.5 659.6,456.1 662.2,446.9 664.8,467.3 667.4,456.9 670.0,456.0 672.6,459.4 675.2,457.7 677.8,452.6 680.4,465.0 683.0,455.2 685.6,455.7 688.2,452.7 690.8,457.2 693.4,456.7 696.0,453.0 698.6,447.1 701.2,469.6 703.8,458.4 706.4,460.7 709.0,464.2 711.6,469.3 714.2,458.2 716.8,464.8 719.4,463.2 722.0,467.2 724.6,458.9 727.2,467.6 729.8,462.9 732.4,463.2 735.0,469.4 737.6,467.1 740.2,464.3 742.8,450.5 745.4,433.1 748.0,438.3 750.6,448.7 753.2,455.6 755.8,422.5 758.4,426.8 761.0,443.5 763.6,459.8 766.2,465.0 768.8,459.0 771.4,460.5 774.0,466.2 776.6,460.8 779.2,467.4 781.8,461.3 784.4,448.7 787.0,463.7 789.6,473.2 792.2,465.5 794.8,464.4 797.4,459.4 800.0,457.4 802.6,461.6 805.2,463.7 807.8,466.5 810.4,454.9 813.0,458.1 815.6,455.9 818.2,455.5 820.8,452.6 823.4,458.6 826.0,453.2 828.6,446.7 831.2,444.8 833.8,450.5 836.4,457.7 839.0,457.5 841.6,460.2 844.2,457.4 846.8,458.8 849.4,461.1 852.0,464.4 854.6,448.3 857.2,452.5 859.8,460.3 862.4,460.1 865.0,461.9 867.6,459.3 870.2,450.2 872.8,457.1 875.4,458.0 878.0,455.7 880.6,456.7 883.2,458.4 885.8,441.6 888.4,455.0 891.0,457.1 893.6,455.8 896.2,450.8 898.8,447.4 901.4,450.7 904.0,452.0 906.6,449.7 909.2,449.2 911.8,449.1 914.4,464.1 917.0,460.4 919.6,448.0 922.2,455.4 924.8,456.5 927.4,460.2 930.0,464.6 932.6,463.6 935.2,463.6 937.8,460.2 940.4,463.9 943.0,452.0 945.6,462.0 948.2,463.8 950.8,471.1 953.4,469.4 956.0,466.2 958.6,459.6 961.2,467.1 963.8,462.2 966.4,459.2 969.0,458.5 971.6,462.9 974.2,463.0 976.8,462.8 979.4,463.6 982.0,460.6 984.6,459.5 987.2,460.8 989.8,464.6 992.4,476.0 995.0,462.3 997.6,469.6 1000.2,455.7 1002.8,461.5 1005.4,467.8 1008.0,470.6 1010.6,467.2 1013.2,467.8 1015.8,466.7 1018.4,461.2 1021.0,462.4 1023.6,462.4 1026.2,454.4 1028.8,465.0 1031.4,461.2 1034.0,468.6 1036.6,461.8 1039.2,457.8 1041.8,449.7 1044.4,448.7 1047.0,456.5 1049.6,448.2 1052.2,451.5 1054.8,456.3 1057.4,457.4 1060.0,463.2 1062.6,461.8 1065.2,452.0 1067.8,438.2 1070.4,457.1 1073.0,451.8 1075.6,463.7 1078.2,459.7 1080.8,455.5 1083.4,462.8 1086.0,459.9 1088.6,452.8 1091.2,449.3 1093.8,443.9 1096.4,451.7 1099.0,449.0 1101.6,437.6 1104.2,450.0 1106.8,439.6 1109.4,435.3 1112.0,435.0 1114.6,438.3 1117.2,440.2 1119.8,435.3 1122.4,441.7 1125.0,437.1 1127.6,433.3 1130.2,438.2 1132.8,439.1 1135.4,444.3 1138.0,441.8 1140.6,439.9 1143.2,447.2 1145.8,438.6 1148.4,432.6 1151.0,445.8 1153.6,446.2 1156.2,450.5 1158.8,449.4 1161.4,450.0 1164.0,458.5 1166.6,458.8 1169.2,451.4 1171.8,457.3 1174.4,450.1 1177.0,452.0 1179.6,456.8 1182.2,456.0 1184.8,459.1 1187.4,455.4 1190.0,459.1 1192.6,462.4 1195.2,461.7 1197.8,454.4 1200.4,441.1 1203.0,460.1 1205.6,463.5 1208.2,442.6 1210.8,468.8 1213.4,469.7 1216.0,465.9 1218.6,455.0 1221.2,465.9 1223.8,473.3 1226.4,469.4 1229.0,470.2 1231.6,469.0 1234.2,476.0 1236.8,467.8 1239.4,467.4 1242.0,467.1 1244.6,465.2 1247.2,468.2 1249.8,456.8 1252.4,456.6 1255.0,459.6 1257.6,457.7 1260.2,471.0 1262.8,453.0 1265.4,452.5 1268.0,459.1 1270.6,463.8 1273.2,458.5 1275.8,452.4 1278.4,464.2 1281.0,447.4 1283.6,468.3 1286.2,457.2 1288.8,461.1 1291.4,463.3 1294.0,456.5 1296.6,450.9 1299.2,460.7 1301.8,440.9 1304.4,460.1 1307.0,468.2 1309.6,459.7 1312.2,458.9 1314.8,456.8 1317.4,455.8 1320.0,451.4 1322.6,446.3 1325.2,441.6 1327.8,455.1 1330.4,448.8 1333.0,452.6 1335.6,440.2 1338.2,448.9 1340.8,450.0 1343.4,455.3 1346.0,454.5 1348.6,456.3 1351.2,454.7 1353.8,454.0 1356.4,454.5 1359.0,458.1 1361.6,460.2 1364.2,456.3 1366.8,456.5 1369.4,470.4 1372.0,460.6 1374.6,464.3 1377.2,462.2 1379.8,462.8 1382.4,459.8 1385.0,459.7 1387.6,465.7 1390.2,452.3 1392.8,461.4 1395.4,455.9 1398.0,457.1 1400.6,451.2 1403.2,426.9 1405.8,388.7 1408.4,390.5 1411.0,443.1 1413.6,457.2 1416.2,465.3 1418.8,461.2 1421.4,464.0 1424.0,466.8 1426.6,463.6 1429.2,470.2 1431.8,467.0 1434.4,467.6 1437.0,466.9 1439.6,466.1 1442.2,473.6 1444.8,464.1 1447.4,476.0 1450.0,463.3 1452.6,445.8 1455.2,467.6 1457.8,449.4 1460.4,448.7 1463.0,460.5 1465.6,457.7 1468.2,461.5 1470.8,459.3 1473.4,462.7 1476.0,455.6 1478.6,448.3 1481.2,449.1 1483.8,460.2 1486.4,454.3 1489.0,439.5 1491.6,449.0 1494.2,466.3 1496.8,455.2 1499.4,457.6 1502.0,454.7 1504.6,451.4 1507.2,451.3 1509.8,451.6 1512.4,454.9 1515.0,453.8 1517.6,451.5 1520.2,453.2 1522.8,454.5 1525.4,457.3 1528.0,449.8 1530.6,450.8 1533.2,448.9 1535.8,451.5 1538.4,453.4 1541.0,450.9 1543.6,447.2 1546.2,442.3 1548.8,455.2 1551.4,462.0 1554.0,444.7 1556.6,457.6 1559.2,453.1 1561.8,440.6 1564.4,449.0 1567.0,449.0 1569.6,451.9 1572.2,453.8 1574.8,450.1 1577.4,449.9 1580.0,449.9 1582.6,451.0 1585.2,444.8 1587.8,444.9 1590.4,438.3 1593.0,441.5 1595.6,441.2 1598.2,437.9 1600.8,445.7 1603.4,440.8 1606.0,434.4 1608.6,447.2 1611.2,445.9 1613.8,436.5 1616.4,438.5 1619.0,451.3 1621.6,435.0 1624.2,451.6 1626.8,454.4 1629.4,453.6 1632.0,454.0 1634.6,458.2 1637.2,461.8 1639.8,460.4 1642.4,465.5 1645.0,463.1 1647.6,469.7 1650.2,437.0 1652.8,423.9 1655.4,406.9 1658.0,393.5 1660.6,387.4 1663.2,387.0 1665.8,382.9 1668.4,379.1 1671.0,379.1 1673.6,373.9 1676.2,373.4 1678.8,380.3 1681.4,388.0 1684.0,396.3 1686.6,400.1 1689.2,404.4 1691.8,406.3 1694.4,410.8 1697.0,406.1 1699.6,401.9 1702.2,408.4 1704.8,403.9 1707.4,397.6 1710.0,403.5 1712.6,403.2 1715.2,406.4 1717.8,407.1 1720.4,413.1 1723.0,419.7 1725.6,430.6 1728.2,428.2 1730.8,426.9 1733.4,413.8 1736.0,404.6 1738.6,410.0 1741.2,406.6 1743.8,403.4 1746.4,402.0 1749.0,404.1 1751.6,394.3 1754.2,394.8 1756.8,400.9 1759.4,398.7 1762.0,407.0 1764.6,406.6 1767.2,405.5 1769.8,403.8 1772.4,404.0 1775.0,398.9 1777.6,398.1 1780.2,400.9 1782.8,405.0 1785.4,408.3 1788.0,419.7 1790.6,425.3 1793.2,418.7 1795.8,411.9 1798.4,402.8 1801.0,405.1 1803.6,405.6 1806.2,418.6 1808.8,430.0 1811.4,434.0 1814.0,429.4 1816.6,415.5 1819.2,402.9 1821.8,389.7 1824.4,384.7 1827.0,381.9 1829.6,382.7 1832.2,383.9 1834.8,384.8 1837.4,387.2 1840.0,397.7 1842.6,400.5 1845.2,407.6 1847.8,426.2 1850.4,432.9 1853.0,430.1 1855.6,427.5 1858.2,425.7 1860.8,431.1 1863.4,431.0 1866.0,430.3 1868.6,411.9 1871.2,408.0 1873.8,407.8 1876.4,404.7 1879.0,407.7 1881.6,402.7 1884.2,401.2 1886.8,397.9 1889.4,400.0 1892.0,392.8 1894.6,391.8 1897.2,389.6 1899.8,385.6 1902.4,382.8 1905.0,377.1 1907.6,377.1 1910.2,376.9 1912.8,376.2 1915.4,376.4 1918.0,373.6 1920.6,370.3 1923.2,366.9 1925.8,369.3 1928.4,368.1 1931.0,366.3 1933.6,367.8 1936.2,371.1 1938.8,371.4 1941.4,370.8 1944.0,370.0 1946.6,375.4 1949.2,374.6 1951.8,374.0 1954.4,378.6 1957.0,380.9 1959.6,388.5 1962.2,394.9 1964.8,396.3 1967.4,421.1 1970.0,409.4 1972.6,395.8 1975.2,393.6 1977.8,390.3 1980.4,389.1 1983.0,392.2 1985.6,391.7 1988.2,392.3 1990.8,395.1 1993.4,400.1 1996.0,406.1 1998.6,413.5 2001.2,419.3 2003.8,424.3 2006.4,432.3 2009.0,436.7 2011.6,419.0 2014.2,396.0 2016.8,382.8 2019.4,376.8 2022.0,373.5 2024.6,371.9 2027.2,375.9 2029.8,381.5 2032.4,379.5 2035.0,380.7 2037.6,379.4 2040.2,384.0 2042.8,385.5 2045.4,389.3 2048.0,394.7 2050.6,400.2 2053.2,413.2 2055.8,426.5 2058.4,438.1 2061.0,462.2 2063.6,459.8 2066.2,454.9 2068.8,456.9 2071.4,462.4 2074.0,467.7 2076.6,461.1 2079.2,459.6 2081.8,466.2 2084.4,459.0 2087.0,457.5 2089.6,468.8 2092.2,463.6 2094.8,465.7 2097.4,460.4 2100.0,465.9 2102.6,457.4 2105.2,461.3 2107.8,461.8 2110.4,465.0 2113.0,467.6 2115.6,464.9 2118.2,456.7 2120.8,467.5 2123.4,457.2 2126.0,461.0 2128.6,458.6 2131.2,468.9 2133.8,461.6 2136.4,469.6 2139.0,470.9 2141.6,470.6 2144.2,471.9 2146.8,468.3 2149.4,467.6 2152.0,461.6 2154.6,464.9 2157.2,456.9 2159.8,471.9 2162.4,464.8 2165.0,463.9 2167.6,467.6 2170.2,461.4 2172.8,439.6 2175.4,462.5 2178.0,456.3 2180.6,468.1 2183.2,452.5 2185.8,458.7 2188.4,436.8 2191.0,426.2 2193.6,409.6 2196.2,403.2 2198.8,399.9 2201.4,392.8 2204.0,401.6 2206.6,407.1 2209.2,413.5 2211.8,416.8 2214.4,422.3 2217.0,424.6 2219.6,426.2 2222.2,429.0 2224.8,429.3 2227.4,427.9 2230.0,426.9 2232.6,431.1 2235.2,430.5 2237.8,427.4 2240.4,427.1 2243.0,418.9 2245.6,412.4 2248.2,404.4 2250.8,404.0 2253.4,401.5 2256.0,396.5 2258.6,402.1 2261.2,403.0 2263.8,404.5 2266.4,407.9 2269.0,416.9 2271.6,433.8 2274.2,455.4 2276.8,461.9 2279.4,452.3 2282.0,451.0 2284.6,457.9 2287.2,456.0 2289.8,462.9 2292.4,460.6 2295.0,457.9 2297.6,456.7 2300.2,454.8 2302.8,453.4 2305.4,460.4 2308.0,447.0 2310.6,456.8 2313.2,458.4 2315.8,458.5 2318.4,452.8 2321.0,459.3 2323.6,451.0 2326.2,459.8 2328.8,453.9 2331.4,463.6 2334.0,443.9 2336.6,452.7 2339.2,461.2 2341.8,467.0 2344.4,461.3 2347.0,455.9 2349.6,457.6 2352.2,454.9 2354.8,449.4 2357.4,450.3 2360.0,454.4 2362.6,459.0 2365.2,453.5 2367.8,450.6 2370.4,453.0 2373.0,452.3 2375.6,445.0 2378.2,449.2 2380.8,444.5 2383.4,451.1 2386.0,442.9 2388.6,447.3 2391.2,448.9 2393.8,442.6 2396.4,451.2 2399.0,448.2 2401.6,449.2 2404.2,454.0 2406.8,453.9 2409.4,447.5 2412.0,443.1 2414.6,461.7 2417.2,452.9 2419.8,453.4 2422.4,462.2 2425.0,455.6 2427.6,446.5 2430.2,457.5 2432.8,455.0 2435.4,459.2 2438.0,454.8 2440.6,461.5 2443.2,448.0 2445.8,448.4 2448.4,450.6 2451.0,442.3 2453.6,444.7 2456.2,442.6 2458.8,448.7 2461.4,439.7 2464.0,444.6 2466.6,452.5 2469.2,425.1 2471.8,443.1 2474.4,438.9 2477.0,450.4 2479.6,452.4 2482.2,445.5 2484.8,453.9 2487.4,447.5 2490.0,453.1 2492.6,452.5 2495.2,454.6 2497.8,459.5 2500.4,438.3 2503.0,455.4 2505.6,464.1 2508.2,457.0 2510.8,457.7 2513.4,457.3 2516.0,448.4 2518.6,455.7 2521.2,448.6 2523.8,453.3 2526.4,454.3 2529.0,458.3 2531.6,459.9 2534.2,454.9 2536.8,456.1 2539.4,456.2 2542.0,458.8 2544.6,464.4 2547.2,464.0 2549.8,455.3 2552.4,455.2 2555.0,458.8 2557.6,463.1 2560.2,471.4 2562.8,462.0 2565.4,464.3 2568.0,462.9 2570.6,465.3 2573.2,464.8 2575.8,439.7 2578.4,423.8 2581.0,407.7 2583.6,393.8 2586.2,375.9 2588.8,390.7 2591.4,406.2 2594.0,406.8 2596.6,413.6 2599.2,417.3 2601.8,424.0 2604.4,434.4 2607.0,442.4 2609.6,427.0 2612.2,416.9 2614.8,410.1 2617.4,404.8 2620.0,397.3 2622.6,395.1 2625.2,394.3 2627.8,386.3 2630.4,379.6 2633.0,377.9 2635.6,383.8 2638.2,379.5 2640.8,370.9 2643.4,368.6 2646.0,379.4 2648.6,392.2 2651.2,403.5 2653.8,408.1 2656.4,413.9 2659.0,420.4 2661.6,424.8 2664.2,428.2 2666.8,412.4 2669.4,382.4 2672.0,382.8 2674.6,410.1 2677.2,419.8 2679.8,409.2 2682.4,404.0 2685.0,407.6 2687.6,410.7 2690.2,418.3 2692.8,436.0 2695.4,446.7 2698.0,454.2 2700.6,452.6 2703.2,457.1 2705.8,455.9 2708.4,464.4 2711.0,463.7 2713.6,457.1 2716.2,455.9 2718.8,457.7 2721.4,456.6 2724.0,461.8 2726.6,461.6 2729.2,459.1 2731.8,449.5 2734.4,452.0 2737.0,448.6 2739.6,455.0 2742.2,451.9 2744.8,455.9 2747.4,438.7 2750.0,456.6 2752.6,453.2 2755.2,458.9 2757.8,457.4 2760.4,454.1 2763.0,463.5 2765.6,459.8 2768.2,453.3 2770.8,461.2 2773.4,460.8 2776.0,471.2 2778.6,448.4 2781.2,435.5 2783.8,428.9 2786.4,416.6 2789.0,404.2 2791.6,406.9 2794.2,404.5 2796.8,403.4 2799.4,400.1 2802.0,400.6 2804.6,399.7 2807.2,396.8 2809.8,395.5 2812.4,400.9 2815.0,400.0 2817.6,401.6 2820.2,399.5 2822.8,408.9 2825.4,412.5 2828.0,417.4 2830.6,421.9 2833.2,422.1 2835.8,423.5 2838.4,420.0 2841.0,423.0 2843.6,419.2 2846.2,425.1 2848.8,427.4 2851.4,428.2 2854.0,425.9 2856.6,427.4 2859.2,431.5 2861.8,438.4 2864.4,464.1 2867.0,466.3 2869.6,462.3 2872.2,462.3 2874.8,468.4 2877.4,464.2 2880.0,461.9 2882.6,460.8 2885.2,454.7 2887.8,456.3 2890.4,455.8 2893.0,457.6 2895.6,464.3 2898.2,458.2 2900.8,462.5 2903.4,464.8 2906.0,461.3 2908.6,463.8 2911.2,446.2 2913.8,458.2 2916.4,459.1 2919.0,456.1 2921.6,468.3 2924.2,466.1 2926.8,456.1 2929.4,461.4 2932.0,449.7 2934.6,453.5 2937.2,458.5 2939.8,459.1 2942.4,453.1 2945.0,464.9 2947.6,446.1 2950.2,447.5 2952.8,453.8 2955.4,457.5 2958.0,449.2 2960.6,460.7 2963.2,452.1 2965.8,454.8 2968.4,455.9 2971.0,451.9 2973.6,448.8 2976.2,452.9 2978.8,460.6 2981.4,461.3 2984.0,457.6 2986.6,447.9 2989.2,456.5 2991.8,460.8 2994.4,458.2 2997.0,468.2 2999.6,464.3 3002.2,453.4 3004.8,459.7 3007.4,456.1 3010.0,465.3 3012.6,458.4 3015.2,464.5 3017.8,464.5 3020.4,455.3 3023.0,456.4 3025.6,460.6 3028.2,467.3 3030.8,454.9 3033.4,457.6 3036.0,455.6 3038.6,454.4 3041.2,462.3 3043.8,462.0 3046.4,460.3 3049.0,460.4 3051.6,459.4 3054.2,464.1 3056.8,465.4 3059.4,468.1 3062.0,458.5 3064.6,472.7 3067.2,469.1 3069.8,453.2 3072.4,465.7 3075.0,464.2 3077.6,466.4 3080.2,463.8 3082.8,464.5 3085.4,463.7 3088.0,457.9 3090.6,457.2 3093.2,464.7 3095.8,457.3 3098.4,460.3 3101.0,459.4 3103.6,460.4 3106.2,457.5 3108.8,460.6 3111.4,460.8 3114.0,460.4 3116.6,462.3 3119.2,464.5 3121.8,462.6 3124.4,464.4 3127.0,472.0 3129.6,461.1 3132.2,458.6 3134.8,462.6 3137.4,464.8 3140.0,469.0 3142.6,459.5 3145.2,458.5 3147.8,457.8 3150.4,455.7 3153.0,462.1 3155.6,458.9 3158.2,456.5 3160.8,456.4 3163.4,461.5 3166.0,451.7 3168.6,453.3 3171.2,451.0 3173.8,454.6 3176.4,450.9 3179.0,446.1 3181.6,447.8 3184.2,452.4 3186.8,450.3 3189.4,462.6 3192.0,450.1 3194.6,462.1 3197.2,458.8 3199.8,462.1 3202.4,457.7 3205.0,449.0 3207.6,456.0 3210.2,460.6 3212.8,460.8 3215.4,465.2 3218.0,456.2 3220.6,462.8 3223.2,458.6 3225.8,458.0 3228.4,463.5 3231.0,460.5 3233.6,460.5 3236.2,459.4 3238.8,455.3 3241.4,455.6 3244.0,448.5 3246.6,448.4 3249.2,442.6 3251.8,459.2 3254.4,456.6 3257.0,460.9 3259.6,461.5 3262.2,458.8 3264.8,460.8 3267.4,458.1 3270.0,461.2 3272.6,467.9 3275.2,454.8 3277.8,462.6 3280.4,469.1 3283.0,460.1 3285.6,461.4 3288.2,466.9 3290.8,465.0 3293.4,465.4 3296.0,454.7 3298.6,459.2 3301.2,453.0 3303.8,471.0 3306.4,464.8 3309.0,458.5 3311.6,458.0 3314.2,461.9 3316.8,457.8 3319.4,454.6 3322.0,460.6 3324.6,466.7 3327.2,463.0 3329.8,464.5 3332.4,472.8 3335.0,461.8 3337.6,470.2 3340.2,463.0 3342.8,462.2 3345.4,459.7 3348.0,470.3 3350.6,463.9 3353.2,452.2 3355.8,472.8 3358.4,462.7 3361.0,464.5 3363.6,459.0 3366.2,460.0 3368.8,459.5 3371.4,461.6 3374.0,457.1 3376.6,457.5 3379.2,461.8 3381.8,459.5 3384.4,452.6 3387.0,453.9 3389.6,448.6 3392.2,453.8 3394.8,458.6 3397.4,456.5 3400.0,452.8 3402.6,447.5 3405.2,454.9 3407.8,453.7 3410.4,461.7 3413.0,466.8 3415.6,462.3 3418.2,463.5 3420.8,457.3 3423.4,458.6 3426.0,455.8 3428.6,464.6 3431.2,451.1 3433.8,451.0 3436.4,458.7 3439.0,454.4 3441.6,456.4 3444.2,448.5 3446.8,449.6 3449.4,459.5 3452.0,459.8 3454.6,455.3 3457.2,454.3 3459.8,451.6 3462.4,453.8 3465.0,457.3 3467.6,445.9 3470.2,454.5 3472.8,458.7 3475.4,462.7 3478.0,456.5 3480.6,461.1 3483.2,457.3 3485.8,444.2 3488.4,465.2 3491.0,467.0 3493.6,466.0 3496.2,464.2 3498.8,459.7 3501.4,466.9 3504.0,456.3 3506.6,468.8 3509.2,461.1 3511.8,464.7 3514.4,463.8 3517.0,461.2 3519.6,455.7 3522.2,445.0 3524.8,457.7 3527.4,458.4 3530.0,459.5 3532.6,457.4 3535.2,455.7 3537.8,461.6 3540.4,445.3 3543.0,443.0 3545.6,458.0 3548.2,448.1 3550.8,454.7 3553.4,454.8 3556.0,465.8 3558.6,451.1 3561.2,459.7 3563.8,451.9 3566.4,456.0 3569.0,464.0 3571.6,457.2 3574.2,462.4 3576.8,456.4 3579.4,460.7 3582.0,458.1 3584.6,457.6 3587.2,451.1 3589.8,457.9 3592.4,458.7 3595.0,455.7 3597.6,442.7 3600.2,447.3 3602.8,446.0 3605.4,442.7 3608.0,443.0 3610.6,433.6 3613.2,431.2 3615.8,426.9 3618.4,420.6 3621.0,435.3 3623.6,435.9 3626.2,439.3 3628.8,440.5 3631.4,446.6 3634.0,453.9 3636.6,445.4 3639.2,461.2 3641.8,449.5 3644.4,460.0 3647.0,462.7 3649.6,459.7 3652.2,454.8 3654.8,452.8 3657.4,451.1 3660.0,446.2 3662.6,455.1 3665.2,446.9 3667.8,452.8 3670.4,462.5 3673.0,453.1 3675.6,458.2 3678.2,454.8 3680.8,455.3 3683.4,455.2 3686.0,461.5 3688.6,459.8 3691.2,451.4 3693.8,454.2 3696.4,454.6 3699.0,465.6 3701.6,460.6 3704.2,452.9 3706.8,466.1 3709.4,460.9 3712.0,453.4 3714.6,461.2 3717.2,462.7 3719.8,457.7 3722.4,454.4 3725.0,459.4 3727.6,455.3 3730.2,460.6 3732.8,458.7 3735.4,462.0 3738.0,448.6 3740.6,458.7 3743.2,465.3 3745.8,459.7 3748.4,462.2 3751.0,456.4 3753.6,467.5 3756.2,467.1 3758.8,455.9 3761.4,469.3 3764.0,456.4 3766.6,471.1 3769.2,467.0" fill="none" stroke="#c8c8c8" stroke-width="1.6" stroke-linejoin="round"/></svg><div class="a" style="left:1140px;top:302px;width:173px;height:28px;background:rgba(0,0,0,0.38)"></div><div class="a" style="left:1468px;top:302px;width:77px;height:28px;background:rgba(0,0,0,0.38)"></div><div class="a" style="left:1598px;top:302px;width:568px;height:28px;background:rgba(0,0,0,0.38)"></div><div class="a" style="left:2382px;top:302px;width:120px;height:28px;background:rgba(0,0,0,0.38)"></div><div class="a" style="left:2773px;top:302px;width:258px;height:28px;background:rgba(0,0,0,0.38)"></div><div class="a" style="left:1468px;top:357px;width:103px;height:28px;background:rgba(0,0,0,0.38)"></div><div class="a" style="left:1696px;top:357px;width:147px;height:28px;background:rgba(0,0,0,0.38)"></div><div class="a" style="left:1989px;top:357px;width:212px;height:28px;background:rgba(0,0,0,0.38)"></div><div class="a" style="left:2970px;top:357px;width:380px;height:28px;background:rgba(0,0,0,0.38)"></div><svg class="a" style="left:1125.3px;top:315px;" width="22" height="126" viewBox="0 0 22 126"><path d="M11 0V108" stroke="#f4f040" stroke-width="2.2"/><path d="M0 105 H22 L11 126 Z" fill="#f4f040"/></svg><svg class="a" style="left:1452px;top:315px;" width="22" height="126" viewBox="0 0 22 126"><path d="M11 0V108" stroke="#f4f040" stroke-width="2.2"/><path d="M0 105 H22 L11 126 Z" fill="#f4f040"/></svg><svg class="a" style="left:1582.5px;top:315px;" width="22" height="126" viewBox="0 0 22 126"><path d="M11 0V108" stroke="#f4f040" stroke-width="2.2"/><path d="M0 105 H22 L11 126 Z" fill="#f4f040"/></svg><svg class="a" style="left:2365.6px;top:315px;" width="22" height="126" viewBox="0 0 22 126"><path d="M11 0V108" stroke="#f4f040" stroke-width="2.2"/><path d="M0 105 H22 L11 126 Z" fill="#f4f040"/></svg><svg class="a" style="left:2758px;top:315px;" width="22" height="126" viewBox="0 0 22 126"><path d="M11 0V108" stroke="#f4f040" stroke-width="2.2"/><path d="M0 105 H22 L11 126 Z" fill="#f4f040"/></svg><svg class="a" style="left:3639.2px;top:315px;" width="22" height="126" viewBox="0 0 22 126"><path d="M11 0V108" stroke="#f4f040" stroke-width="2.2"/><path d="M0 105 H22 L11 126 Z" fill="#f4f040"/></svg><svg class="a" style="left:1680.3px;top:372px;" width="22" height="69" viewBox="0 0 22 69"><path d="M11 0V51" stroke="#f4f040" stroke-width="2.2" opacity="0.9"/><path d="M1 48 H21 L11 69 Z" fill="rgba(120,230,200,0.35)" stroke="#a0f0d0" stroke-width="2"/></svg><svg class="a" style="left:1973.7px;top:372px;" width="22" height="69" viewBox="0 0 22 69"><path d="M11 0V51" stroke="#f4f040" stroke-width="2.2" opacity="0.9"/><path d="M1 48 H21 L11 69 Z" fill="rgba(120,230,200,0.35)" stroke="#a0f0d0" stroke-width="2"/></svg><svg class="a" style="left:2954px;top:372px;" width="22" height="69" viewBox="0 0 22 69"><path d="M11 0V51" stroke="#f4f040" stroke-width="2.2"/><path d="M0 48 H22 L11 69 Z" fill="#f4f040"/></svg><svg class="a" style="left:1779.5px;top:388px;" width="20" height="53" viewBox="0 0 20 53"><path d="M10 0V35" stroke="#f4f040" stroke-width="2" stroke-dasharray="5 4"/><path d="M2 34 H18 L10 53 Z" fill="none" stroke="#f4f040" stroke-width="2"/></svg><svg class="a" style="left:2024.4px;top:388px;" width="20" height="53" viewBox="0 0 20 53"><path d="M10 0V35" stroke="#f4f040" stroke-width="2" stroke-dasharray="5 4"/><path d="M2 34 H18 L10 53 Z" fill="none" stroke="#f4f040" stroke-width="2"/></svg><svg class="a" style="left:3003.5px;top:388px;" width="20" height="53" viewBox="0 0 20 53"><path d="M10 0V35" stroke="#f4f040" stroke-width="2" stroke-dasharray="5 4"/><path d="M2 34 H18 L10 53 Z" fill="none" stroke="#f4f040" stroke-width="2"/></svg><div class="t" style="left:1143.0px;top:306.9px;font-size:20.5px;color:#d8d890;font-weight:400;transform:scaleX(0.9768);transform-origin:0 0">MWARA Colombo</div><div class="t" style="left:1470.5px;top:306.9px;font-size:20.5px;color:#d8d890;font-weight:400;transform:scaleX(0.9147);transform-origin:0 0">RADv 9</div><div class="t" style="left:1600.8px;top:306.9px;font-size:20.5px;color:#d8d890;font-weight:400;transform:scaleX(0.9419);transform-origin:0 0">CNOA ( Centre national des opérations aériennes ) Réseau E-3F</div><div class="t" style="left:2384.7px;top:306.9px;font-size:20.5px;color:#d8d890;font-weight:400;transform:scaleX(0.9292);transform-origin:0 0">French Navy</div><div class="t" style="left:2776.3px;top:306.9px;font-size:20.5px;color:#d8d890;font-weight:400;transform:scaleX(0.8900);transform-origin:0 0">HFDL REYKJAVIK - ICELAND</div><div class="t" style="left:1470.5px;top:361.6px;font-size:20.5px;color:#d8d890;font-weight:400;transform:scaleX(0.8773);transform-origin:0 0">UK Rescue</div><div class="t" style="left:1698.6px;top:361.6px;font-size:20.5px;color:#d8d890;font-weight:400;transform:scaleX(0.9434);transform-origin:0 0">NATO Air Force</div><div class="t" style="left:1992.4px;top:361.6px;font-size:20.5px;color:#d8d890;font-weight:400;transform:scaleX(0.9574);transform-origin:0 0">Meteofax New Orleans</div><div class="t" style="left:2972.6px;top:361.6px;font-size:20.5px;color:#d8d890;font-weight:400;transform:scaleX(0.9521);transform-origin:0 0">Amundsen-Scott South pole Station (NPX)</div><div class="a" style="left:3655px;top:302px;width:115px;height:28px;background:rgba(0,0,0,0.55)"></div><div class="a" style="left:3657px;top:290px;width:113px;height:40px;overflow:hidden"><div class="t" style="left:0.9px;top:16.6px;font-size:20.5px;color:#d8d890;font-weight:400;transform:scaleX(0.945);transform-origin:0 0">CNOA ( Centre</div></div><div class="a" style="left:462px;top:476px;width:3308px;height:36px;background:linear-gradient(#a8a8a8 0px,#8a8a8a 5px,#5a5a5a 10px,#262626 15px,#000 19px,#000 36px)"></div><svg class="a" style="left:0;top:0" width="3840" height="520"><path d="M484.9 477V486" stroke="#f0f0f0" stroke-width="1.6"/><path d="M501.2 477V482" stroke="#f0f0f0" stroke-width="1.6"/><path d="M517.5 477V482" stroke="#f0f0f0" stroke-width="1.6"/><path d="M533.8 477V482" stroke="#f0f0f0" stroke-width="1.6"/><path d="M550.1 477V482" stroke="#f0f0f0" stroke-width="1.6"/><path d="M566.4 477V482" stroke="#f0f0f0" stroke-width="1.6"/><path d="M582.7 477V482" stroke="#f0f0f0" stroke-width="1.6"/><path d="M599.0 477V482" stroke="#f0f0f0" stroke-width="1.6"/><path d="M615.3 477V482" stroke="#f0f0f0" stroke-width="1.6"/><path d="M631.6 477V482" stroke="#f0f0f0" stroke-width="1.6"/><path d="M648.0 477V486" stroke="#f0f0f0" stroke-width="1.6"/><path d="M664.3 477V482" stroke="#f0f0f0" stroke-width="1.6"/><path d="M680.6 477V482" stroke="#f0f0f0" stroke-width="1.6"/><path d="M696.9 477V482" stroke="#f0f0f0" stroke-width="1.6"/><path d="M713.2 477V482" stroke="#f0f0f0" stroke-width="1.6"/><path d="M729.5 477V482" stroke="#f0f0f0" stroke-width="1.6"/><path d="M745.8 477V482" stroke="#f0f0f0" stroke-width="1.6"/><path d="M762.1 477V482" stroke="#f0f0f0" stroke-width="1.6"/><path d="M778.4 477V482" stroke="#f0f0f0" stroke-width="1.6"/><path d="M794.7 477V482" stroke="#f0f0f0" stroke-width="1.6"/><path d="M811.0 477V486" stroke="#f0f0f0" stroke-width="1.6"/><path d="M827.3 477V482" stroke="#f0f0f0" stroke-width="1.6"/><path d="M843.6 477V482" stroke="#f0f0f0" stroke-width="1.6"/><path d="M859.9 477V482" stroke="#f0f0f0" stroke-width="1.6"/><path d="M876.2 477V482" stroke="#f0f0f0" stroke-width="1.6"/><path d="M892.5 477V482" stroke="#f0f0f0" stroke-width="1.6"/><path d="M908.8 477V482" stroke="#f0f0f0" stroke-width="1.6"/><path d="M925.1 477V482" stroke="#f0f0f0" stroke-width="1.6"/><path d="M941.4 477V482" stroke="#f0f0f0" stroke-width="1.6"/><path d="M957.7 477V482" stroke="#f0f0f0" stroke-width="1.6"/><path d="M974.0 477V486" stroke="#f0f0f0" stroke-width="1.6"/><path d="M990.4 477V482" stroke="#f0f0f0" stroke-width="1.6"/><path d="M1006.7 477V482" stroke="#f0f0f0" stroke-width="1.6"/><path d="M1023.0 477V482" stroke="#f0f0f0" stroke-width="1.6"/><path d="M1039.3 477V482" stroke="#f0f0f0" stroke-width="1.6"/><path d="M1055.6 477V482" stroke="#f0f0f0" stroke-width="1.6"/><path d="M1071.9 477V482" stroke="#f0f0f0" stroke-width="1.6"/><path d="M1088.2 477V482" stroke="#f0f0f0" stroke-width="1.6"/><path d="M1104.5 477V482" stroke="#f0f0f0" stroke-width="1.6"/><path d="M1120.8 477V482" stroke="#f0f0f0" stroke-width="1.6"/><path d="M1137.1 477V486" stroke="#f0f0f0" stroke-width="1.6"/><path d="M1153.4 477V482" stroke="#f0f0f0" stroke-width="1.6"/><path d="M1169.7 477V482" stroke="#f0f0f0" stroke-width="1.6"/><path d="M1186.0 477V482" stroke="#f0f0f0" stroke-width="1.6"/><path d="M1202.3 477V482" stroke="#f0f0f0" stroke-width="1.6"/><path d="M1218.6 477V482" stroke="#f0f0f0" stroke-width="1.6"/><path d="M1234.9 477V482" stroke="#f0f0f0" stroke-width="1.6"/><path d="M1251.2 477V482" stroke="#f0f0f0" stroke-width="1.6"/><path d="M1267.5 477V482" stroke="#f0f0f0" stroke-width="1.6"/><path d="M1283.8 477V482" stroke="#f0f0f0" stroke-width="1.6"/><path d="M1300.2 477V486" stroke="#f0f0f0" stroke-width="1.6"/><path d="M1316.5 477V482" stroke="#f0f0f0" stroke-width="1.6"/><path d="M1332.8 477V482" stroke="#f0f0f0" stroke-width="1.6"/><path d="M1349.1 477V482" stroke="#f0f0f0" stroke-width="1.6"/><path d="M1365.4 477V482" stroke="#f0f0f0" stroke-width="1.6"/><path d="M1381.7 477V482" stroke="#f0f0f0" stroke-width="1.6"/><path d="M1398.0 477V482" stroke="#f0f0f0" stroke-width="1.6"/><path d="M1414.3 477V482" stroke="#f0f0f0" stroke-width="1.6"/><path d="M1430.6 477V482" stroke="#f0f0f0" stroke-width="1.6"/><path d="M1446.9 477V482" stroke="#f0f0f0" stroke-width="1.6"/><path d="M1463.2 477V486" stroke="#f0f0f0" stroke-width="1.6"/><path d="M1479.5 477V482" stroke="#f0f0f0" stroke-width="1.6"/><path d="M1495.8 477V482" stroke="#f0f0f0" stroke-width="1.6"/><path d="M1512.1 477V482" stroke="#f0f0f0" stroke-width="1.6"/><path d="M1528.4 477V482" stroke="#f0f0f0" stroke-width="1.6"/><path d="M1544.7 477V482" stroke="#f0f0f0" stroke-width="1.6"/><path d="M1561.0 477V482" stroke="#f0f0f0" stroke-width="1.6"/><path d="M1577.3 477V482" stroke="#f0f0f0" stroke-width="1.6"/><path d="M1593.6 477V482" stroke="#f0f0f0" stroke-width="1.6"/><path d="M1609.9 477V482" stroke="#f0f0f0" stroke-width="1.6"/><path d="M1626.2 477V486" stroke="#f0f0f0" stroke-width="1.6"/><path d="M1642.6 477V482" stroke="#f0f0f0" stroke-width="1.6"/><path d="M1658.9 477V482" stroke="#f0f0f0" stroke-width="1.6"/><path d="M1675.2 477V482" stroke="#f0f0f0" stroke-width="1.6"/><path d="M1691.5 477V482" stroke="#f0f0f0" stroke-width="1.6"/><path d="M1707.8 477V482" stroke="#f0f0f0" stroke-width="1.6"/><path d="M1724.1 477V482" stroke="#f0f0f0" stroke-width="1.6"/><path d="M1740.4 477V482" stroke="#f0f0f0" stroke-width="1.6"/><path d="M1756.7 477V482" stroke="#f0f0f0" stroke-width="1.6"/><path d="M1773.0 477V482" stroke="#f0f0f0" stroke-width="1.6"/><path d="M1789.3 477V486" stroke="#f0f0f0" stroke-width="1.6"/><path d="M1805.6 477V482" stroke="#f0f0f0" stroke-width="1.6"/><path d="M1821.9 477V482" stroke="#f0f0f0" stroke-width="1.6"/><path d="M1838.2 477V482" stroke="#f0f0f0" stroke-width="1.6"/><path d="M1854.5 477V482" stroke="#f0f0f0" stroke-width="1.6"/><path d="M1870.8 477V482" stroke="#f0f0f0" stroke-width="1.6"/><path d="M1887.1 477V482" stroke="#f0f0f0" stroke-width="1.6"/><path d="M1903.4 477V482" stroke="#f0f0f0" stroke-width="1.6"/><path d="M1919.7 477V482" stroke="#f0f0f0" stroke-width="1.6"/><path d="M1936.0 477V482" stroke="#f0f0f0" stroke-width="1.6"/><path d="M1952.3 477V486" stroke="#f0f0f0" stroke-width="1.6"/><path d="M1968.7 477V482" stroke="#f0f0f0" stroke-width="1.6"/><path d="M1985.0 477V482" stroke="#f0f0f0" stroke-width="1.6"/><path d="M2001.3 477V482" stroke="#f0f0f0" stroke-width="1.6"/><path d="M2017.6 477V482" stroke="#f0f0f0" stroke-width="1.6"/><path d="M2033.9 477V482" stroke="#f0f0f0" stroke-width="1.6"/><path d="M2050.2 477V482" stroke="#f0f0f0" stroke-width="1.6"/><path d="M2066.5 477V482" stroke="#f0f0f0" stroke-width="1.6"/><path d="M2082.8 477V482" stroke="#f0f0f0" stroke-width="1.6"/><path d="M2099.1 477V482" stroke="#f0f0f0" stroke-width="1.6"/><path d="M2115.4 477V486" stroke="#f0f0f0" stroke-width="1.6"/><path d="M2131.7 477V482" stroke="#f0f0f0" stroke-width="1.6"/><path d="M2148.0 477V482" stroke="#f0f0f0" stroke-width="1.6"/><path d="M2164.3 477V482" stroke="#f0f0f0" stroke-width="1.6"/><path d="M2180.6 477V482" stroke="#f0f0f0" stroke-width="1.6"/><path d="M2196.9 477V482" stroke="#f0f0f0" stroke-width="1.6"/><path d="M2213.2 477V482" stroke="#f0f0f0" stroke-width="1.6"/><path d="M2229.5 477V482" stroke="#f0f0f0" stroke-width="1.6"/><path d="M2245.8 477V482" stroke="#f0f0f0" stroke-width="1.6"/><path d="M2262.1 477V482" stroke="#f0f0f0" stroke-width="1.6"/><path d="M2278.4 477V486" stroke="#f0f0f0" stroke-width="1.6"/><path d="M2294.8 477V482" stroke="#f0f0f0" stroke-width="1.6"/><path d="M2311.1 477V482" stroke="#f0f0f0" stroke-width="1.6"/><path d="M2327.4 477V482" stroke="#f0f0f0" stroke-width="1.6"/><path d="M2343.7 477V482" stroke="#f0f0f0" stroke-width="1.6"/><path d="M2360.0 477V482" stroke="#f0f0f0" stroke-width="1.6"/><path d="M2376.3 477V482" stroke="#f0f0f0" stroke-width="1.6"/><path d="M2392.6 477V482" stroke="#f0f0f0" stroke-width="1.6"/><path d="M2408.9 477V482" stroke="#f0f0f0" stroke-width="1.6"/><path d="M2425.2 477V482" stroke="#f0f0f0" stroke-width="1.6"/><path d="M2441.5 477V486" stroke="#f0f0f0" stroke-width="1.6"/><path d="M2457.8 477V482" stroke="#f0f0f0" stroke-width="1.6"/><path d="M2474.1 477V482" stroke="#f0f0f0" stroke-width="1.6"/><path d="M2490.4 477V482" stroke="#f0f0f0" stroke-width="1.6"/><path d="M2506.7 477V482" stroke="#f0f0f0" stroke-width="1.6"/><path d="M2523.0 477V482" stroke="#f0f0f0" stroke-width="1.6"/><path d="M2539.3 477V482" stroke="#f0f0f0" stroke-width="1.6"/><path d="M2555.6 477V482" stroke="#f0f0f0" stroke-width="1.6"/><path d="M2571.9 477V482" stroke="#f0f0f0" stroke-width="1.6"/><path d="M2588.2 477V482" stroke="#f0f0f0" stroke-width="1.6"/><path d="M2604.6 477V486" stroke="#f0f0f0" stroke-width="1.6"/><path d="M2620.9 477V482" stroke="#f0f0f0" stroke-width="1.6"/><path d="M2637.2 477V482" stroke="#f0f0f0" stroke-width="1.6"/><path d="M2653.5 477V482" stroke="#f0f0f0" stroke-width="1.6"/><path d="M2669.8 477V482" stroke="#f0f0f0" stroke-width="1.6"/><path d="M2686.1 477V482" stroke="#f0f0f0" stroke-width="1.6"/><path d="M2702.4 477V482" stroke="#f0f0f0" stroke-width="1.6"/><path d="M2718.7 477V482" stroke="#f0f0f0" stroke-width="1.6"/><path d="M2735.0 477V482" stroke="#f0f0f0" stroke-width="1.6"/><path d="M2751.3 477V482" stroke="#f0f0f0" stroke-width="1.6"/><path d="M2767.6 477V486" stroke="#f0f0f0" stroke-width="1.6"/><path d="M2783.9 477V482" stroke="#f0f0f0" stroke-width="1.6"/><path d="M2800.2 477V482" stroke="#f0f0f0" stroke-width="1.6"/><path d="M2816.5 477V482" stroke="#f0f0f0" stroke-width="1.6"/><path d="M2832.8 477V482" stroke="#f0f0f0" stroke-width="1.6"/><path d="M2849.1 477V482" stroke="#f0f0f0" stroke-width="1.6"/><path d="M2865.4 477V482" stroke="#f0f0f0" stroke-width="1.6"/><path d="M2881.7 477V482" stroke="#f0f0f0" stroke-width="1.6"/><path d="M2898.0 477V482" stroke="#f0f0f0" stroke-width="1.6"/><path d="M2914.3 477V482" stroke="#f0f0f0" stroke-width="1.6"/><path d="M2930.7 477V486" stroke="#f0f0f0" stroke-width="1.6"/><path d="M2947.0 477V482" stroke="#f0f0f0" stroke-width="1.6"/><path d="M2963.3 477V482" stroke="#f0f0f0" stroke-width="1.6"/><path d="M2979.6 477V482" stroke="#f0f0f0" stroke-width="1.6"/><path d="M2995.9 477V482" stroke="#f0f0f0" stroke-width="1.6"/><path d="M3012.2 477V482" stroke="#f0f0f0" stroke-width="1.6"/><path d="M3028.5 477V482" stroke="#f0f0f0" stroke-width="1.6"/><path d="M3044.8 477V482" stroke="#f0f0f0" stroke-width="1.6"/><path d="M3061.1 477V482" stroke="#f0f0f0" stroke-width="1.6"/><path d="M3077.4 477V482" stroke="#f0f0f0" stroke-width="1.6"/><path d="M3093.7 477V486" stroke="#f0f0f0" stroke-width="1.6"/><path d="M3110.0 477V482" stroke="#f0f0f0" stroke-width="1.6"/><path d="M3126.3 477V482" stroke="#f0f0f0" stroke-width="1.6"/><path d="M3142.6 477V482" stroke="#f0f0f0" stroke-width="1.6"/><path d="M3158.9 477V482" stroke="#f0f0f0" stroke-width="1.6"/><path d="M3175.2 477V482" stroke="#f0f0f0" stroke-width="1.6"/><path d="M3191.5 477V482" stroke="#f0f0f0" stroke-width="1.6"/><path d="M3207.8 477V482" stroke="#f0f0f0" stroke-width="1.6"/><path d="M3224.1 477V482" stroke="#f0f0f0" stroke-width="1.6"/><path d="M3240.4 477V482" stroke="#f0f0f0" stroke-width="1.6"/><path d="M3256.8 477V486" stroke="#f0f0f0" stroke-width="1.6"/><path d="M3273.1 477V482" stroke="#f0f0f0" stroke-width="1.6"/><path d="M3289.4 477V482" stroke="#f0f0f0" stroke-width="1.6"/><path d="M3305.7 477V482" stroke="#f0f0f0" stroke-width="1.6"/><path d="M3322.0 477V482" stroke="#f0f0f0" stroke-width="1.6"/><path d="M3338.3 477V482" stroke="#f0f0f0" stroke-width="1.6"/><path d="M3354.6 477V482" stroke="#f0f0f0" stroke-width="1.6"/><path d="M3370.9 477V482" stroke="#f0f0f0" stroke-width="1.6"/><path d="M3387.2 477V482" stroke="#f0f0f0" stroke-width="1.6"/><path d="M3403.5 477V482" stroke="#f0f0f0" stroke-width="1.6"/><path d="M3419.8 477V486" stroke="#f0f0f0" stroke-width="1.6"/><path d="M3436.1 477V482" stroke="#f0f0f0" stroke-width="1.6"/><path d="M3452.4 477V482" stroke="#f0f0f0" stroke-width="1.6"/><path d="M3468.7 477V482" stroke="#f0f0f0" stroke-width="1.6"/><path d="M3485.0 477V482" stroke="#f0f0f0" stroke-width="1.6"/><path d="M3501.3 477V482" stroke="#f0f0f0" stroke-width="1.6"/><path d="M3517.6 477V482" stroke="#f0f0f0" stroke-width="1.6"/><path d="M3533.9 477V482" stroke="#f0f0f0" stroke-width="1.6"/><path d="M3550.2 477V482" stroke="#f0f0f0" stroke-width="1.6"/><path d="M3566.5 477V482" stroke="#f0f0f0" stroke-width="1.6"/><path d="M3582.8 477V486" stroke="#f0f0f0" stroke-width="1.6"/><path d="M3599.2 477V482" stroke="#f0f0f0" stroke-width="1.6"/><path d="M3615.5 477V482" stroke="#f0f0f0" stroke-width="1.6"/><path d="M3631.8 477V482" stroke="#f0f0f0" stroke-width="1.6"/><path d="M3648.1 477V482" stroke="#f0f0f0" stroke-width="1.6"/><path d="M3664.4 477V482" stroke="#f0f0f0" stroke-width="1.6"/><path d="M3680.7 477V482" stroke="#f0f0f0" stroke-width="1.6"/><path d="M3697.0 477V482" stroke="#f0f0f0" stroke-width="1.6"/><path d="M3713.3 477V482" stroke="#f0f0f0" stroke-width="1.6"/><path d="M3729.6 477V482" stroke="#f0f0f0" stroke-width="1.6"/><path d="M3745.9 477V486" stroke="#f0f0f0" stroke-width="1.6"/><path d="M3762.2 477V482" stroke="#f0f0f0" stroke-width="1.6"/></svg><div class="t c" style="left:284.9px;top:489.8px;font-size:18px;color:#f4f4f4;font-weight:400;">5.650</div><div class="t c" style="left:448.0px;top:489.8px;font-size:18px;color:#f4f4f4;font-weight:400;">5.655</div><div class="t c" style="left:611.0px;top:489.8px;font-size:18px;color:#f4f4f4;font-weight:400;">5.660</div><div class="t c" style="left:774.0px;top:489.8px;font-size:18px;color:#f4f4f4;font-weight:400;">5.665</div><div class="t c" style="left:937.1px;top:489.8px;font-size:18px;color:#f4f4f4;font-weight:400;">5.670</div><div class="t c" style="left:1100.2px;top:489.8px;font-size:18px;color:#f4f4f4;font-weight:400;">5.675</div><div class="t c" style="left:1263.2px;top:489.8px;font-size:18px;color:#f4f4f4;font-weight:400;">5.680</div><div class="t c" style="left:1426.2px;top:489.8px;font-size:18px;color:#f4f4f4;font-weight:400;">5.685</div><div class="t c" style="left:1589.3px;top:489.8px;font-size:18px;color:#f4f4f4;font-weight:400;">5.690</div><div class="t c" style="left:1752.3px;top:489.8px;font-size:18px;color:#f4f4f4;font-weight:400;">5.695</div><div class="t c" style="left:1915.4px;top:489.8px;font-size:18px;color:#f4f4f4;font-weight:400;">5.700</div><div class="t c" style="left:2078.4px;top:489.8px;font-size:18px;color:#f4f4f4;font-weight:400;">5.705</div><div class="t c" style="left:2241.5px;top:489.8px;font-size:18px;color:#f4f4f4;font-weight:400;">5.710</div><div class="t c" style="left:2404.6px;top:489.8px;font-size:18px;color:#f4f4f4;font-weight:400;">5.715</div><div class="t c" style="left:2567.6px;top:489.8px;font-size:18px;color:#f4f4f4;font-weight:400;">5.720</div><div class="t c" style="left:2730.7px;top:489.8px;font-size:18px;color:#f4f4f4;font-weight:400;">5.725</div><div class="t c" style="left:2893.7px;top:489.8px;font-size:18px;color:#f4f4f4;font-weight:400;">5.730</div><div class="t c" style="left:3056.8px;top:489.8px;font-size:18px;color:#f4f4f4;font-weight:400;">5.735</div><div class="t c" style="left:3219.8px;top:489.8px;font-size:18px;color:#f4f4f4;font-weight:400;">5.740</div><div class="t c" style="left:3382.8px;top:489.8px;font-size:18px;color:#f4f4f4;font-weight:400;">5.745</div><div class="t c" style="left:3545.9px;top:489.8px;font-size:18px;color:#f4f4f4;font-weight:400;">5.750</div><div class="a" style="left:462px;top:512px;width:3308px;height:6px;background:#f4f4f4"></div><div class="a" style="left:2084px;top:514px;width:62px;height:2px;background:repeating-linear-gradient(90deg,#777 0 2px,transparent 2px 5px)"></div>
<svg class="a" style="left:462px;top:518px" width="3308" height="1550" viewBox="0 0 3308 1550"><defs><filter id="nzb" x="0" y="0" width="3308" height="1550" filterUnits="userSpaceOnUse" color-interpolation-filters="sRGB"><feTurbulence type="fractalNoise" baseFrequency="0.3 0.17" numOctaves="2" seed="3"/><feColorMatrix type="matrix" values="0.06 0 0 0 -0.03   0.14 0 0 0 -0.05   1.15 0 0 0 0.0   0 0 0 0 1"/></filter><filter id="spk" x="0" y="0" width="3308" height="1550" filterUnits="userSpaceOnUse" color-interpolation-filters="sRGB"><feTurbulence type="fractalNoise" baseFrequency="0.25 0.11" numOctaves="2" seed="9" result="n"/><feColorMatrix in="n" type="matrix" values="0 0 0 0 0  0 0 0 0 0  0 0 0 0 0  4 0 0 0 -1.9" result="m"/><feComposite in="SourceGraphic" in2="m" operator="in"/></filter><filter id="spk2" x="0" y="0" width="3308" height="1550" filterUnits="userSpaceOnUse" color-interpolation-filters="sRGB"><feTurbulence type="fractalNoise" baseFrequency="0.35 0.15" numOctaves="2" seed="21" result="n"/><feColorMatrix in="n" type="matrix" values="0 0 0 0 0  0 0 0 0 0  0 0 0 0 0  5 0 0 0 -2.3" result="m"/><feComposite in="SourceGraphic" in2="m" operator="in"/></filter><filter id="spk3" x="0" y="0" width="3308" height="1550" filterUnits="userSpaceOnUse" color-interpolation-filters="sRGB"><feTurbulence type="fractalNoise" baseFrequency="0.2 0.05" numOctaves="2" seed="5" result="n"/><feColorMatrix in="n" type="matrix" values="0 0 0 0 0  0 0 0 0 0  0 0 0 0 0  3 0 0 0 -1.3" result="m"/><feComposite in="SourceGraphic" in2="m" operator="in"/></filter><filter id="spk4" x="0" y="0" width="3308" height="1550" filterUnits="userSpaceOnUse" color-interpolation-filters="sRGB"><feTurbulence type="fractalNoise" baseFrequency="0.3 0.12" numOctaves="2" seed="33" result="n"/><feColorMatrix in="n" type="matrix" values="0 0 0 0 0  0 0 0 0 0  0 0 0 0 0  4.5 0 0 0 -2.1" result="m"/><feComposite in="SourceGraphic" in2="m" operator="in"/></filter><filter id="spk5" x="0" y="0" width="3308" height="1550" filterUnits="userSpaceOnUse" color-interpolation-filters="sRGB"><feTurbulence type="fractalNoise" baseFrequency="0.3 0.18" numOctaves="2" seed="51" result="n"/><feColorMatrix in="n" type="matrix" values="0 0 0 0 0  0 0 0 0 0  0 0 0 0 0  6 0 0 0 -3.3" result="m"/><feComposite in="SourceGraphic" in2="m" operator="in"/></filter><filter id="spk6" x="0" y="0" width="3308" height="1550" filterUnits="userSpaceOnUse" color-interpolation-filters="sRGB"><feTurbulence type="fractalNoise" baseFrequency="0.12 0.08" numOctaves="2" seed="61" result="n"/><feColorMatrix in="n" type="matrix" values="0 0 0 0 0  0 0 0 0 0  0 0 0 0 0  6 0 0 0 -3.6" result="m"/><feComposite in="SourceGraphic" in2="m" operator="in"/></filter><filter id="spkh" x="0" y="0" width="3308" height="1550" filterUnits="userSpaceOnUse" color-interpolation-filters="sRGB"><feTurbulence type="fractalNoise" baseFrequency="0.08 0.5" numOctaves="2" seed="41" result="n"/><feColorMatrix in="n" type="matrix" values="0 0 0 0 0  0 0 0 0 0  0 0 0 0 0  5 0 0 0 -2.2" result="m"/><feComposite in="SourceGraphic" in2="m" operator="in"/></filter><filter id="spkf" x="0" y="0" width="3308" height="1550" filterUnits="userSpaceOnUse" color-interpolation-filters="sRGB"><feTurbulence type="fractalNoise" baseFrequency="0.04 0.35" numOctaves="2" seed="71" result="n"/><feColorMatrix in="n" type="matrix" values="0 0 0 0 0  0 0 0 0 0  0 0 0 0 0  4 0 0 0 -2.1" result="m"/><feComposite in="SourceGraphic" in2="m" operator="in"/></filter><filter id="spks" x="0" y="0" width="3308" height="1550" filterUnits="userSpaceOnUse" color-interpolation-filters="sRGB"><feTurbulence type="fractalNoise" baseFrequency="0.06 0.12" numOctaves="2" seed="81" result="n"/><feColorMatrix in="n" type="matrix" values="0 0 0 0 0  0 0 0 0 0  0 0 0 0 0  4 0 0 0 -1.8" result="m"/><feComposite in="SourceGraphic" in2="m" operator="in"/></filter><linearGradient id="gb" x1="0" x2="1" y1="0" y2="0"><stop offset="0" stop-color="#2090f0"/><stop offset="0.08" stop-color="#30d0e0"/><stop offset="0.22" stop-color="#48e090"/><stop offset="0.42" stop-color="#5ce450"/><stop offset="0.65" stop-color="#78ee40"/><stop offset="0.86" stop-color="#50e468"/><stop offset="0.95" stop-color="#38d8c8"/><stop offset="1" stop-color="#20a0f0"/></linearGradient><pattern id="fax" width="80" height="8.37" patternUnits="userSpaceOnUse" x="0" y="3" patternTransform="rotate(-0.35)"><rect y="0" width="80" height="1.2" fill="#30b8e0"/><rect y="1.2" width="80" height="3" fill="#78e870"/><rect y="4.2" width="80" height="1.1" fill="#30b0e8"/></pattern><pattern id="sp" width="20" height="9" patternUnits="userSpaceOnUse"><rect y="0" width="20" height="3.2" fill="#40d8c0"/></pattern><linearGradient id="fade" x1="0" x2="1"><stop offset="0" stop-color="#3050ff" stop-opacity="0"/><stop offset="0.3" stop-color="#3050ff" stop-opacity="1"/><stop offset="0.7" stop-color="#3050ff" stop-opacity="1"/><stop offset="1" stop-color="#3050ff" stop-opacity="0"/></linearGradient><linearGradient id="bandA" x1="0" x2="1"><stop offset="0" stop-color="#1028e0" stop-opacity="0"/><stop offset="0.12" stop-color="#1028e0" stop-opacity="0.6"/><stop offset="0.88" stop-color="#1028e0" stop-opacity="0.6"/><stop offset="1" stop-color="#1028e0" stop-opacity="0"/></linearGradient><linearGradient id="bandA2" x1="0" x2="1"><stop offset="0" stop-color="#3050ff" stop-opacity="0"/><stop offset="0.12" stop-color="#3050ff" stop-opacity="1"/><stop offset="0.88" stop-color="#3050ff" stop-opacity="1"/><stop offset="1" stop-color="#3050ff" stop-opacity="0"/></linearGradient><linearGradient id="grect" x1="0" x2="1"><stop offset="0" stop-color="#30d8e0"/><stop offset="0.15" stop-color="#48e070"/><stop offset="0.5" stop-color="#58e440"/><stop offset="0.85" stop-color="#48e070"/><stop offset="1" stop-color="#30d8e0"/></linearGradient><clipPath id="gbclip"><rect x="2117" y="0" width="114" height="1550"/></clipPath><filter id="blur3" x="2000" y="0" width="400" height="1550" filterUnits="userSpaceOnUse"><feGaussianBlur stdDeviation="2.2"/></filter><pattern id="sp2" width="30" height="12" patternUnits="userSpaceOnUse" y="3"><path d="M0 2 Q8 0 14 3 T30 3" stroke="#38c8e0" stroke-width="3" fill="none"/><rect x="4" y="0" width="2" height="9" fill="#3090e0"/></pattern><pattern id="sp3" width="8" height="14" patternUnits="userSpaceOnUse"><rect x="2" y="0" width="2.2" height="11" fill="#40d8c8"/></pattern><pattern id="sp4" width="40" height="9.5" patternUnits="userSpaceOnUse"><path d="M0 2 Q10 0 20 3 T40 2" stroke="#40d8d8" stroke-width="3.2" fill="none"/></pattern><pattern id="sp5" width="40" height="9.5" patternUnits="userSpaceOnUse" y="4"><rect y="0" width="40" height="4" fill="#78e848"/></pattern></defs><rect x="0" y="0" width="3308" height="1550" fill="#000" filter="url(#nzb)"/><rect x="1838" y="0" width="275" height="1550" fill="url(#fade)" opacity="0.65" filter="url(#spk)"/><rect x="593" y="0" width="117" height="1550" fill="url(#bandA)"/><rect x="593" y="0" width="117" height="1550" fill="url(#bandA2)" filter="url(#spk4)"/><rect x="612" y="0" width="4" height="1550" fill="#6090ff" opacity="0.9" filter="url(#spk2)"/><rect x="687" y="0" width="4" height="1550" fill="#6090ff" opacity="0.9" filter="url(#spk2)"/><rect x="92" y="0" width="3" height="1550" fill="#6090ff" opacity="0.75" filter="url(#spk2)"/><rect x="172" y="0" width="3" height="1550" fill="#6090ff" opacity="0.65" filter="url(#spk2)"/><rect x="25" y="0" width="2" height="1550" fill="#6090ff" opacity="0.35" filter="url(#spk2)"/><rect x="943" y="0" width="2" height="1550" fill="#6090ff" opacity="0.45" filter="url(#spk2)"/><rect x="1116" y="0" width="3" height="1550" fill="#6090ff" opacity="0.55" filter="url(#spk2)"/><rect x="3150" y="0" width="5" height="1550" fill="#6090ff" opacity="1.0" filter="url(#spk2)"/><rect x="3285" y="0" width="3" height="1550" fill="#6090ff" opacity="0.75" filter="url(#spk2)"/><rect x="438" y="0" width="2" height="1550" fill="#6090ff" opacity="0.25" filter="url(#spk2)"/><rect x="1803" y="0" width="2" height="1550" fill="#6090ff" opacity="0.3" filter="url(#spk2)"/><rect x="0" y="418" width="3308" height="10" fill="#1c3cff" opacity="0.24"/><rect x="0" y="418" width="3308" height="10" fill="#6090ff" opacity="0.3" filter="url(#spkh)"/><rect x="0" y="796" width="3308" height="10" fill="#1c3cff" opacity="0.36000000000000004"/><rect x="0" y="796" width="3308" height="10" fill="#6090ff" opacity="0.45" filter="url(#spkh)"/><rect x="0" y="1492" width="3308" height="10" fill="#1c3cff" opacity="0.27999999999999997"/><rect x="0" y="1492" width="3308" height="10" fill="#6090ff" opacity="0.35" filter="url(#spkh)"/><rect x="0" y="1165" width="3308" height="6" fill="#1c3cff" opacity="0.096"/><rect x="0" y="1165" width="3308" height="6" fill="#6090ff" opacity="0.12" filter="url(#spkh)"/><rect x="0" y="820" width="3308" height="5" fill="#1c3cff" opacity="0.096"/><rect x="0" y="820" width="3308" height="5" fill="#6090ff" opacity="0.12" filter="url(#spkh)"/><polygon points="1198,0 1598,0 1596,825 1191,825" fill="#0c28c8" opacity="0.75"/><polygon points="1198,0 1598,0 1596,825 1191,825" fill="url(#fax)"/><polygon points="1198,0 1598,0 1596,825 1191,825" fill="#0a1aa8" opacity="0.35" filter="url(#spkf)"/><polygon points="1198,0 1598,0 1596,825 1191,825" fill="#c0f040" opacity="0.25" filter="url(#spk6)"/><g stroke="#0a20a0" stroke-width="2" opacity="0.55"><path d="M1108 0 L1228 825"/><path d="M1153 0 L1273 825"/><path d="M1198 0 L1318 825"/><path d="M1243 0 L1363 825"/><path d="M1288 0 L1408 825"/><path d="M1333 0 L1453 825"/><path d="M1378 0 L1498 825"/><path d="M1423 0 L1543 825"/><path d="M1468 0 L1588 825"/><path d="M1513 0 L1633 825"/></g><rect x="2117" y="0" width="114" height="1550" fill="url(#gb)"/><rect x="2117" y="0" width="114" height="1550" fill="#0a28c0" opacity="0.42" filter="url(#spk4)"/><g clip-path="url(#gbclip)" filter="url(#blur3)"><g stroke="#0a1ca8" stroke-width="7" fill="none" opacity="0.75" stroke-linecap="round" stroke-linejoin="round"><path d="M2136 2 L2150 82 L2178 142 L2198 222 L2230 282"/><path d="M2126 82 L2138 162 L2163 242 L2188 312 L2218 362"/><path d="M2133 302 L2153 362 L2178 412 L2198 472 L2228 522"/><path d="M2128 432 L2150 492 L2168 562 L2193 632 L2218 682"/><path d="M2138 562 L2163 642 L2188 712 L2208 782"/><path d="M2130 742 L2148 812 L2178 882 L2198 952"/><path d="M2138 202 L2158 282 L2148 362"/><path d="M2193 42 L2208 122 L2228 182"/></g><circle cx="2155" cy="264" r="9" fill="#0a1ca8" opacity="0.7"/><circle cx="2159" cy="397" r="9" fill="#0a1ca8" opacity="0.7"/><circle cx="2139" cy="510" r="8" fill="#0a1ca8" opacity="0.7"/></g><rect x="2183" y="0" width="2" height="1550" fill="#c0f040" opacity="0.45"/><rect x="2195" y="0" width="2" height="1550" fill="#c0f040" opacity="0.45"/><rect x="2207.5" y="0" width="2" height="1550" fill="#c0f040" opacity="0.45"/><rect x="2167" y="0" width="8" height="1550" fill="#70f040" opacity="0.35"/><rect x="2191" y="0" width="8" height="1550" fill="#80f040" opacity="0.35"/><rect x="1724" y="7" width="84" height="251" fill="#0a1890" opacity="0.5"/><rect x="1724" y="7" width="84" height="251" fill="#38d8c8" filter="url(#spk5)"/><rect x="1724" y="7" width="84" height="251" fill="#60e040" opacity="0.8" filter="url(#spk6)"/><rect x="1718" y="323" width="110" height="230" fill="#38d0d8" filter="url(#spk5)"/><rect x="1718" y="323" width="60" height="230" fill="#60e040" opacity="0.7" filter="url(#spk6)"/><rect x="1722" y="1450" width="68" height="100" fill="url(#sp3)" opacity="0.85"/><rect x="1722" y="1450" width="68" height="100" fill="#061490" opacity="0.5" filter="url(#spk2)"/><rect x="1724" y="1492" width="30" height="5" fill="#60e060" opacity="0.5"/><rect x="1724" y="1477" width="40" height="4" fill="#50d8c0" opacity="0.4"/><rect x="1722" y="1442" width="3" height="108" fill="#60e060" opacity="0.8"/><path d="M1723 0V1550" stroke="#d8d860" stroke-width="1.2" stroke-dasharray="3 4" opacity="0.8"/><path d="M1840 0V1550" stroke="#d8d860" stroke-width="1.2" stroke-dasharray="3 4" opacity="0.8"/><rect x="2273" y="621" width="165" height="371" fill="url(#sp4)" opacity="0.85" filter="url(#spks)"/><rect x="2293" y="621" width="85" height="371" fill="url(#sp4)" opacity="0.95" filter="url(#spk)"/><rect x="2313" y="755" width="66" height="177" fill="url(#sp5)" opacity="0.9" filter="url(#spk)"/><path d="M2308 621V992" stroke="#c0e0ff" stroke-width="1.5" opacity="0.6"/><rect x="3040" y="227" width="102" height="101" fill="url(#grect)"/><rect x="3040" y="227" width="102" height="101" fill="#a0f030" opacity="0.6" filter="url(#spk2)"/><rect x="1878" y="35" width="95" height="6" fill="#60e0ff" opacity="1" filter="url(#spk5)"/><rect x="1878" y="36" width="95" height="3" fill="#3878ff" opacity="0.8"/><rect x="2351" y="1438" width="80" height="6" fill="#60e0ff" opacity="1" filter="url(#spk5)"/><rect x="2351" y="1439" width="80" height="3" fill="#3878ff" opacity="0.8"/><rect x="777" y="1437" width="88" height="6" fill="#60e0ff" opacity="1" filter="url(#spk5)"/><rect x="777" y="1438" width="88" height="3" fill="#3878ff" opacity="0.8"/><rect x="2318" y="2" width="120" height="6" fill="#60e0ff" opacity="1" filter="url(#spk5)"/><rect x="2318" y="3" width="120" height="3" fill="#3878ff" opacity="0.8"/><path d="M284 0V50M294 0V50" stroke="#50e8d0" stroke-width="2.2"/><path d="M0 132.20000000000005 L3308 85.29999999999995" stroke="#48e0a0" stroke-width="3.2" stroke-dasharray="40 3 25 4" opacity="0.9"/><path d="M0 194.20000000000005 L3308 146.60000000000002" stroke="#58c8f0" stroke-width="2.4" stroke-dasharray="18 5 9 4" opacity="0.85"/></svg><div class="a" style="left:480px;top:1947px;width:463px;height:102px;background:rgba(0,2,36,0.92)"></div><div class="t" style="left:504.6px;top:1964.1px;font-size:66px;font-weight:400"><span style="display:inline-block;width:37.8px;text-align:center;color:#fff">2</span><span style="display:inline-block;width:37.8px;text-align:center;color:#fff">0</span><span style="display:inline-block;width:37.8px;text-align:center;color:#fff">:</span><span style="display:inline-block;width:37.8px;text-align:center;color:#fff">0</span><span style="display:inline-block;width:37.8px;text-align:center;color:#fff">5</span></div><svg class="a" style="left:0;top:0;pointer-events:none" width="3840" height="2160"><path d="M548.9 2008.7L574.3 1987.4" stroke="#fff" stroke-width="4.5" stroke-linecap="round"/><path d="M624.5 2008.7L649.9 1987.4" stroke="#fff" stroke-width="4.5" stroke-linecap="round"/></svg><div class="t" style="left:697.3px;top:1986.8px;font-size:38px;font-weight:400"><span style="display:inline-block;width:21.5px;text-align:center;color:#fff">:</span><span style="display:inline-block;width:21.5px;text-align:center;color:#fff">0</span><span style="display:inline-block;width:21.5px;text-align:center;color:#fff">6</span></div><svg class="a" style="left:0;top:0;pointer-events:none" width="3840" height="2160"><path d="M722.4 2012.5L737.1 2000.2" stroke="#fff" stroke-width="2.8" stroke-linecap="round"/></svg><div class="t" style="left:699.0px;top:1953.6px;font-size:11.4px;color:#fff;font-weight:400;">UTC</div><div class="t" style="left:810.3px;top:1957.5px;font-size:29.5px;font-weight:400"><span style="display:inline-block;width:18.8px;text-align:center;color:#fff">2</span><span style="display:inline-block;width:18.8px;text-align:center;color:#fff">5</span><span style="display:inline-block;width:18.8px;text-align:center;color:#fff"> </span><span style="display:inline-block;width:18.8px;text-align:center;color:#fff">N</span><span style="display:inline-block;width:18.8px;text-align:center;color:#fff">o</span><span style="display:inline-block;width:18.8px;text-align:center;color:#fff">v</span></div><div class="t" style="left:828.0px;top:1997.6px;font-size:29.5px;font-weight:400"><span style="display:inline-block;width:18.8px;text-align:center;color:#fff">2</span><span style="display:inline-block;width:18.8px;text-align:center;color:#fff">0</span><span style="display:inline-block;width:18.8px;text-align:center;color:#fff">2</span><span style="display:inline-block;width:18.8px;text-align:center;color:#fff">5</span></div><svg class="a" style="left:0;top:0;pointer-events:none" width="3840" height="2160"><path d="M850.7 2017.5L862.0 2008.0" stroke="#fff" stroke-width="2.3" stroke-linecap="round"/></svg>
<div class="a" style="left:3770px;top:259px;width:70px;height:1858px;background:#000"></div><div class="a" style="left:3771px;top:261px;width:67px;height:50px;background:linear-gradient(#3a3a3a,#1a1a1a 40%,#000);border-bottom:1px solid #444"></div><div class="t c" style="left:3605.0px;top:276.1px;font-size:18.5px;color:#f0f0f0;font-weight:400;">Auto</div><div class="a" style="left:3773px;top:715px;width:62px;height:790px;background:linear-gradient(#f82880 0%,#ff3060 8%,#ff2020 14%,#ff6010 22%,#ff9a00 28%,#ffd800 34%,#e0f000 39%,#80e000 45%,#20c020 52%,#10c070 60%,#10c8d0 68%,#1080f0 73%,#1040e0 78%,#0a20b0 85%,#000070 93%,#000020 100%)"></div><div class="a" style="left:3771px;top:714px;width:66px;height:2px;background:#e8e8e8"></div><div class="a" style="left:3771px;top:1503px;width:66px;height:2px;background:#e8e8e8"></div><div class="t c" style="left:3605.0px;top:361.2px;font-size:14.5px;color:#d8d8d8;font-weight:400;">-5</div><div class="t c" style="left:3605.0px;top:417.6px;font-size:14.5px;color:#d8d8d8;font-weight:400;">-10</div><div class="t c" style="left:3605.0px;top:473.9px;font-size:14.5px;color:#d8d8d8;font-weight:400;">-15</div><div class="t c" style="left:3605.0px;top:530.3px;font-size:14.5px;color:#d8d8d8;font-weight:400;">-20</div><div class="t c" style="left:3605.0px;top:586.6px;font-size:14.5px;color:#d8d8d8;font-weight:400;">-25</div><div class="t c" style="left:3605.0px;top:643.0px;font-size:14.5px;color:#d8d8d8;font-weight:400;">-30</div><div class="a" style="left:3785px;top:692px;width:41px;height:28px;background:rgba(0,0,0,0.42);border-radius:5px"></div><div class="t c" style="left:3605.0px;top:699.3px;font-size:14.5px;color:#d8d8d8;font-weight:400;">-35</div><div class="a" style="left:3785px;top:748px;width:41px;height:28px;background:rgba(0,0,0,0.42);border-radius:5px"></div><div class="t c" style="left:3605.0px;top:755.7px;font-size:14.5px;color:#d8d8d8;font-weight:400;">-40</div><div class="a" style="left:3785px;top:805px;width:41px;height:28px;background:rgba(0,0,0,0.42);border-radius:5px"></div><div class="t c" style="left:3605.0px;top:812.0px;font-size:14.5px;color:#d8d8d8;font-weight:400;">-45</div><div class="a" style="left:3785px;top:861px;width:41px;height:28px;background:rgba(0,0,0,0.42);border-radius:5px"></div><div class="t c" style="left:3605.0px;top:868.4px;font-size:14.5px;color:#d8d8d8;font-weight:400;">-50</div><div class="a" style="left:3785px;top:918px;width:41px;height:28px;background:rgba(0,0,0,0.42);border-radius:5px"></div><div class="t c" style="left:3605.0px;top:924.7px;font-size:14.5px;color:#d8d8d8;font-weight:400;">-55</div><div class="a" style="left:3785px;top:974px;width:41px;height:28px;background:rgba(0,0,0,0.42);border-radius:5px"></div><div class="t c" style="left:3605.0px;top:981.1px;font-size:14.5px;color:#d8d8d8;font-weight:400;">-60</div><div class="a" style="left:3785px;top:1030px;width:41px;height:28px;background:rgba(0,0,0,0.42);border-radius:5px"></div><div class="t c" style="left:3605.0px;top:1037.4px;font-size:14.5px;color:#d8d8d8;font-weight:400;">-65</div><div class="a" style="left:3785px;top:1087px;width:41px;height:28px;background:rgba(0,0,0,0.42);border-radius:5px"></div><div class="t c" style="left:3605.0px;top:1093.8px;font-size:14.5px;color:#d8d8d8;font-weight:400;">-70</div><div class="a" style="left:3785px;top:1143px;width:41px;height:28px;background:rgba(0,0,0,0.42);border-radius:5px"></div><div class="t c" style="left:3605.0px;top:1150.1px;font-size:14.5px;color:#d8d8d8;font-weight:400;">-75</div><div class="a" style="left:3785px;top:1199px;width:41px;height:28px;background:rgba(0,0,0,0.42);border-radius:5px"></div><div class="t c" style="left:3605.0px;top:1206.5px;font-size:14.5px;color:#d8d8d8;font-weight:400;">-80</div><div class="a" style="left:3785px;top:1256px;width:41px;height:28px;background:rgba(0,0,0,0.42);border-radius:5px"></div><div class="t c" style="left:3605.0px;top:1262.8px;font-size:14.5px;color:#d8d8d8;font-weight:400;">-85</div><div class="a" style="left:3785px;top:1312px;width:41px;height:28px;background:rgba(0,0,0,0.42);border-radius:5px"></div><div class="t c" style="left:3605.0px;top:1319.2px;font-size:14.5px;color:#d8d8d8;font-weight:400;">-90</div><div class="a" style="left:3785px;top:1368px;width:41px;height:28px;background:rgba(0,0,0,0.42);border-radius:5px"></div><div class="t c" style="left:3605.0px;top:1375.5px;font-size:14.5px;color:#d8d8d8;font-weight:400;">-95</div><div class="a" style="left:3785px;top:1425px;width:41px;height:28px;background:rgba(0,0,0,0.42);border-radius:5px"></div><div class="t c" style="left:3605.0px;top:1431.9px;font-size:14.5px;color:#d8d8d8;font-weight:400;">-100</div><div class="t c" style="left:3605.0px;top:1488.2px;font-size:14.5px;color:#d8d8d8;font-weight:400;">-105</div><div class="t c" style="left:3605.0px;top:1544.6px;font-size:14.5px;color:#d8d8d8;font-weight:400;">-110</div><div class="t c" style="left:3605.0px;top:1600.9px;font-size:14.5px;color:#d8d8d8;font-weight:400;">-115</div><div class="t c" style="left:3605.0px;top:1657.3px;font-size:14.5px;color:#d8d8d8;font-weight:400;">-120</div><div class="t c" style="left:3605.0px;top:1713.6px;font-size:14.5px;color:#d8d8d8;font-weight:400;">-125</div><div class="t c" style="left:3605.0px;top:1770.0px;font-size:14.5px;color:#d8d8d8;font-weight:400;">-130</div><div class="t c" style="left:3605.0px;top:1826.3px;font-size:14.5px;color:#d8d8d8;font-weight:400;">-135</div><div class="t c" style="left:3605.0px;top:1882.7px;font-size:14.5px;color:#d8d8d8;font-weight:400;">-140</div><div class="t c" style="left:3605.0px;top:1939.0px;font-size:14.5px;color:#d8d8d8;font-weight:400;">-145</div><div class="t c" style="left:3605.0px;top:1995.4px;font-size:14.5px;color:#d8d8d8;font-weight:400;">-150</div><div class="t c" style="left:3605.0px;top:2051.7px;font-size:14.5px;color:#d8d8d8;font-weight:400;">-155</div><div class="a" style="left:462px;top:2068px;width:3308px;height:49px;background:#000"></div><div class="a" style="left:509px;top:2068px;width:3050px;height:49px;background:linear-gradient(#6a6a6a 0px,#4a4a4a 6px,#2c2c2c 14px,#141414 22px,#000 26px)"></div><div class="a" style="left:1272px;top:2068px;width:1524px;height:49px;background:linear-gradient(#a8a8a8 0px,#808080 6px,#5a5a5a 14px,#404040 24px,#3a3834 40px,#4a4628 49px)"></div><div class="a" style="left:1359px;top:2096px;width:1352px;height:21px;background:radial-gradient(ellipse 50% 100% at 50% 100%,rgba(200,190,40,0.8),rgba(150,140,30,0.45) 45%,rgba(0,0,0,0) 100%)"></div><svg class="a" style="left:0;top:0" width="3840" height="2160"><path d="M518.0 2068V2074" stroke="#e8e8e8" stroke-width="1.5"/><path d="M533.0 2068V2079" stroke="#e8e8e8" stroke-width="1.5"/><path d="M548.0 2068V2074" stroke="#e8e8e8" stroke-width="1.5"/><path d="M563.0 2068V2074" stroke="#e8e8e8" stroke-width="1.5"/><path d="M578.1 2068V2074" stroke="#e8e8e8" stroke-width="1.5"/><path d="M593.1 2068V2074" stroke="#e8e8e8" stroke-width="1.5"/><path d="M608.1 2068V2076" stroke="#e8e8e8" stroke-width="1.5"/><path d="M623.1 2068V2074" stroke="#e8e8e8" stroke-width="1.5"/><path d="M638.1 2068V2074" stroke="#e8e8e8" stroke-width="1.5"/><path d="M653.1 2068V2074" stroke="#e8e8e8" stroke-width="1.5"/><path d="M668.2 2068V2074" stroke="#e8e8e8" stroke-width="1.5"/><path d="M683.2 2068V2079" stroke="#e8e8e8" stroke-width="1.5"/><path d="M698.2 2068V2074" stroke="#e8e8e8" stroke-width="1.5"/><path d="M713.2 2068V2074" stroke="#e8e8e8" stroke-width="1.5"/><path d="M728.2 2068V2074" stroke="#e8e8e8" stroke-width="1.5"/><path d="M743.3 2068V2074" stroke="#e8e8e8" stroke-width="1.5"/><path d="M758.3 2068V2076" stroke="#e8e8e8" stroke-width="1.5"/><path d="M773.3 2068V2074" stroke="#e8e8e8" stroke-width="1.5"/><path d="M788.3 2068V2074" stroke="#e8e8e8" stroke-width="1.5"/><path d="M803.3 2068V2074" stroke="#e8e8e8" stroke-width="1.5"/><path d="M818.3 2068V2074" stroke="#e8e8e8" stroke-width="1.5"/><path d="M833.4 2068V2079" stroke="#e8e8e8" stroke-width="1.5"/><path d="M848.4 2068V2074" stroke="#e8e8e8" stroke-width="1.5"/><path d="M863.4 2068V2074" stroke="#e8e8e8" stroke-width="1.5"/><path d="M878.4 2068V2074" stroke="#e8e8e8" stroke-width="1.5"/><path d="M893.4 2068V2074" stroke="#e8e8e8" stroke-width="1.5"/><path d="M908.5 2068V2076" stroke="#e8e8e8" stroke-width="1.5"/><path d="M923.5 2068V2074" stroke="#e8e8e8" stroke-width="1.5"/><path d="M938.5 2068V2074" stroke="#e8e8e8" stroke-width="1.5"/><path d="M953.5 2068V2074" stroke="#e8e8e8" stroke-width="1.5"/><path d="M968.5 2068V2074" stroke="#e8e8e8" stroke-width="1.5"/><path d="M983.5 2068V2079" stroke="#e8e8e8" stroke-width="1.5"/><path d="M998.6 2068V2074" stroke="#e8e8e8" stroke-width="1.5"/><path d="M1013.6 2068V2074" stroke="#e8e8e8" stroke-width="1.5"/><path d="M1028.6 2068V2074" stroke="#e8e8e8" stroke-width="1.5"/><path d="M1043.6 2068V2074" stroke="#e8e8e8" stroke-width="1.5"/><path d="M1058.6 2068V2076" stroke="#e8e8e8" stroke-width="1.5"/><path d="M1073.6 2068V2074" stroke="#e8e8e8" stroke-width="1.5"/><path d="M1088.7 2068V2074" stroke="#e8e8e8" stroke-width="1.5"/><path d="M1103.7 2068V2074" stroke="#e8e8e8" stroke-width="1.5"/><path d="M1118.7 2068V2074" stroke="#e8e8e8" stroke-width="1.5"/><path d="M1133.7 2068V2079" stroke="#e8e8e8" stroke-width="1.5"/><path d="M1148.7 2068V2074" stroke="#e8e8e8" stroke-width="1.5"/><path d="M1163.8 2068V2074" stroke="#e8e8e8" stroke-width="1.5"/><path d="M1178.8 2068V2074" stroke="#e8e8e8" stroke-width="1.5"/><path d="M1193.8 2068V2074" stroke="#e8e8e8" stroke-width="1.5"/><path d="M1208.8 2068V2076" stroke="#e8e8e8" stroke-width="1.5"/><path d="M1223.8 2068V2074" stroke="#e8e8e8" stroke-width="1.5"/><path d="M1238.8 2068V2074" stroke="#e8e8e8" stroke-width="1.5"/><path d="M1253.9 2068V2074" stroke="#e8e8e8" stroke-width="1.5"/><path d="M1268.9 2068V2074" stroke="#e8e8e8" stroke-width="1.5"/><path d="M1283.9 2068V2079" stroke="#e8e8e8" stroke-width="1.5"/><path d="M1298.9 2068V2074" stroke="#e8e8e8" stroke-width="1.5"/><path d="M1313.9 2068V2074" stroke="#e8e8e8" stroke-width="1.5"/><path d="M1329.0 2068V2074" stroke="#e8e8e8" stroke-width="1.5"/><path d="M1344.0 2068V2074" stroke="#e8e8e8" stroke-width="1.5"/><path d="M1359.0 2068V2076" stroke="#e8e8e8" stroke-width="1.5"/><path d="M1374.0 2068V2074" stroke="#e8e8e8" stroke-width="1.5"/><path d="M1389.0 2068V2074" stroke="#e8e8e8" stroke-width="1.5"/><path d="M1404.0 2068V2074" stroke="#e8e8e8" stroke-width="1.5"/><path d="M1419.1 2068V2074" stroke="#e8e8e8" stroke-width="1.5"/><path d="M1434.1 2068V2079" stroke="#e8e8e8" stroke-width="1.5"/><path d="M1449.1 2068V2074" stroke="#e8e8e8" stroke-width="1.5"/><path d="M1464.1 2068V2074" stroke="#e8e8e8" stroke-width="1.5"/><path d="M1479.1 2068V2074" stroke="#e8e8e8" stroke-width="1.5"/><path d="M1494.2 2068V2074" stroke="#e8e8e8" stroke-width="1.5"/><path d="M1509.2 2068V2076" stroke="#e8e8e8" stroke-width="1.5"/><path d="M1524.2 2068V2074" stroke="#e8e8e8" stroke-width="1.5"/><path d="M1539.2 2068V2074" stroke="#e8e8e8" stroke-width="1.5"/><path d="M1554.2 2068V2074" stroke="#e8e8e8" stroke-width="1.5"/><path d="M1569.2 2068V2074" stroke="#e8e8e8" stroke-width="1.5"/><path d="M1584.3 2068V2079" stroke="#e8e8e8" stroke-width="1.5"/><path d="M1599.3 2068V2074" stroke="#e8e8e8" stroke-width="1.5"/><path d="M1614.3 2068V2074" stroke="#e8e8e8" stroke-width="1.5"/><path d="M1629.3 2068V2074" stroke="#e8e8e8" stroke-width="1.5"/><path d="M1644.3 2068V2074" stroke="#e8e8e8" stroke-width="1.5"/><path d="M1659.4 2068V2076" stroke="#e8e8e8" stroke-width="1.5"/><path d="M1674.4 2068V2074" stroke="#e8e8e8" stroke-width="1.5"/><path d="M1689.4 2068V2074" stroke="#e8e8e8" stroke-width="1.5"/><path d="M1704.4 2068V2074" stroke="#e8e8e8" stroke-width="1.5"/><path d="M1719.4 2068V2074" stroke="#e8e8e8" stroke-width="1.5"/><path d="M1734.4 2068V2079" stroke="#e8e8e8" stroke-width="1.5"/><path d="M1749.5 2068V2074" stroke="#e8e8e8" stroke-width="1.5"/><path d="M1764.5 2068V2074" stroke="#e8e8e8" stroke-width="1.5"/><path d="M1779.5 2068V2074" stroke="#e8e8e8" stroke-width="1.5"/><path d="M1794.5 2068V2074" stroke="#e8e8e8" stroke-width="1.5"/><path d="M1809.5 2068V2076" stroke="#e8e8e8" stroke-width="1.5"/><path d="M1824.5 2068V2074" stroke="#e8e8e8" stroke-width="1.5"/><path d="M1839.6 2068V2074" stroke="#e8e8e8" stroke-width="1.5"/><path d="M1854.6 2068V2074" stroke="#e8e8e8" stroke-width="1.5"/><path d="M1869.6 2068V2074" stroke="#e8e8e8" stroke-width="1.5"/><path d="M1884.6 2068V2079" stroke="#e8e8e8" stroke-width="1.5"/><path d="M1899.6 2068V2074" stroke="#e8e8e8" stroke-width="1.5"/><path d="M1914.7 2068V2074" stroke="#e8e8e8" stroke-width="1.5"/><path d="M1929.7 2068V2074" stroke="#e8e8e8" stroke-width="1.5"/><path d="M1944.7 2068V2074" stroke="#e8e8e8" stroke-width="1.5"/><path d="M1959.7 2068V2076" stroke="#e8e8e8" stroke-width="1.5"/><path d="M1974.7 2068V2074" stroke="#e8e8e8" stroke-width="1.5"/><path d="M1989.7 2068V2074" stroke="#e8e8e8" stroke-width="1.5"/><path d="M2004.8 2068V2074" stroke="#e8e8e8" stroke-width="1.5"/><path d="M2019.8 2068V2074" stroke="#e8e8e8" stroke-width="1.5"/><path d="M2034.8 2068V2079" stroke="#e8e8e8" stroke-width="1.5"/><path d="M2049.8 2068V2074" stroke="#e8e8e8" stroke-width="1.5"/><path d="M2064.8 2068V2074" stroke="#e8e8e8" stroke-width="1.5"/><path d="M2079.9 2068V2074" stroke="#e8e8e8" stroke-width="1.5"/><path d="M2094.9 2068V2074" stroke="#e8e8e8" stroke-width="1.5"/><path d="M2109.9 2068V2076" stroke="#e8e8e8" stroke-width="1.5"/><path d="M2124.9 2068V2074" stroke="#e8e8e8" stroke-width="1.5"/><path d="M2139.9 2068V2074" stroke="#e8e8e8" stroke-width="1.5"/><path d="M2154.9 2068V2074" stroke="#e8e8e8" stroke-width="1.5"/><path d="M2170.0 2068V2074" stroke="#e8e8e8" stroke-width="1.5"/><path d="M2185.0 2068V2079" stroke="#e8e8e8" stroke-width="1.5"/><path d="M2200.0 2068V2074" stroke="#e8e8e8" stroke-width="1.5"/><path d="M2215.0 2068V2074" stroke="#e8e8e8" stroke-width="1.5"/><path d="M2230.0 2068V2074" stroke="#e8e8e8" stroke-width="1.5"/><path d="M2245.1 2068V2074" stroke="#e8e8e8" stroke-width="1.5"/><path d="M2260.1 2068V2076" stroke="#e8e8e8" stroke-width="1.5"/><path d="M2275.1 2068V2074" stroke="#e8e8e8" stroke-width="1.5"/><path d="M2290.1 2068V2074" stroke="#e8e8e8" stroke-width="1.5"/><path d="M2305.1 2068V2074" stroke="#e8e8e8" stroke-width="1.5"/><path d="M2320.1 2068V2074" stroke="#e8e8e8" stroke-width="1.5"/><path d="M2335.2 2068V2079" stroke="#e8e8e8" stroke-width="1.5"/><path d="M2350.2 2068V2074" stroke="#e8e8e8" stroke-width="1.5"/><path d="M2365.2 2068V2074" stroke="#e8e8e8" stroke-width="1.5"/><path d="M2380.2 2068V2074" stroke="#e8e8e8" stroke-width="1.5"/><path d="M2395.2 2068V2074" stroke="#e8e8e8" stroke-width="1.5"/><path d="M2410.2 2068V2076" stroke="#e8e8e8" stroke-width="1.5"/><path d="M2425.3 2068V2074" stroke="#e8e8e8" stroke-width="1.5"/><path d="M2440.3 2068V2074" stroke="#e8e8e8" stroke-width="1.5"/><path d="M2455.3 2068V2074" stroke="#e8e8e8" stroke-width="1.5"/><path d="M2470.3 2068V2074" stroke="#e8e8e8" stroke-width="1.5"/><path d="M2485.3 2068V2079" stroke="#e8e8e8" stroke-width="1.5"/><path d="M2500.4 2068V2074" stroke="#e8e8e8" stroke-width="1.5"/><path d="M2515.4 2068V2074" stroke="#e8e8e8" stroke-width="1.5"/><path d="M2530.4 2068V2074" stroke="#e8e8e8" stroke-width="1.5"/><path d="M2545.4 2068V2074" stroke="#e8e8e8" stroke-width="1.5"/><path d="M2560.4 2068V2076" stroke="#e8e8e8" stroke-width="1.5"/><path d="M2575.4 2068V2074" stroke="#e8e8e8" stroke-width="1.5"/><path d="M2590.5 2068V2074" stroke="#e8e8e8" stroke-width="1.5"/><path d="M2605.5 2068V2074" stroke="#e8e8e8" stroke-width="1.5"/><path d="M2620.5 2068V2074" stroke="#e8e8e8" stroke-width="1.5"/><path d="M2635.5 2068V2079" stroke="#e8e8e8" stroke-width="1.5"/><path d="M2650.5 2068V2074" stroke="#e8e8e8" stroke-width="1.5"/><path d="M2665.6 2068V2074" stroke="#e8e8e8" stroke-width="1.5"/><path d="M2680.6 2068V2074" stroke="#e8e8e8" stroke-width="1.5"/><path d="M2695.6 2068V2074" stroke="#e8e8e8" stroke-width="1.5"/><path d="M2710.6 2068V2076" stroke="#e8e8e8" stroke-width="1.5"/><path d="M2725.6 2068V2074" stroke="#e8e8e8" stroke-width="1.5"/><path d="M2740.6 2068V2074" stroke="#e8e8e8" stroke-width="1.5"/><path d="M2755.7 2068V2074" stroke="#e8e8e8" stroke-width="1.5"/><path d="M2770.7 2068V2074" stroke="#e8e8e8" stroke-width="1.5"/><path d="M2785.7 2068V2079" stroke="#e8e8e8" stroke-width="1.5"/><path d="M2800.7 2068V2074" stroke="#e8e8e8" stroke-width="1.5"/><path d="M2815.7 2068V2074" stroke="#e8e8e8" stroke-width="1.5"/><path d="M2830.8 2068V2074" stroke="#e8e8e8" stroke-width="1.5"/><path d="M2845.8 2068V2074" stroke="#e8e8e8" stroke-width="1.5"/><path d="M2860.8 2068V2076" stroke="#e8e8e8" stroke-width="1.5"/><path d="M2875.8 2068V2074" stroke="#e8e8e8" stroke-width="1.5"/><path d="M2890.8 2068V2074" stroke="#e8e8e8" stroke-width="1.5"/><path d="M2905.8 2068V2074" stroke="#e8e8e8" stroke-width="1.5"/><path d="M2920.9 2068V2074" stroke="#e8e8e8" stroke-width="1.5"/><path d="M2935.9 2068V2079" stroke="#e8e8e8" stroke-width="1.5"/><path d="M2950.9 2068V2074" stroke="#e8e8e8" stroke-width="1.5"/><path d="M2965.9 2068V2074" stroke="#e8e8e8" stroke-width="1.5"/><path d="M2980.9 2068V2074" stroke="#e8e8e8" stroke-width="1.5"/><path d="M2996.0 2068V2074" stroke="#e8e8e8" stroke-width="1.5"/><path d="M3011.0 2068V2076" stroke="#e8e8e8" stroke-width="1.5"/><path d="M3026.0 2068V2074" stroke="#e8e8e8" stroke-width="1.5"/><path d="M3041.0 2068V2074" stroke="#e8e8e8" stroke-width="1.5"/><path d="M3056.0 2068V2074" stroke="#e8e8e8" stroke-width="1.5"/><path d="M3071.0 2068V2074" stroke="#e8e8e8" stroke-width="1.5"/><path d="M3086.1 2068V2079" stroke="#e8e8e8" stroke-width="1.5"/><path d="M3101.1 2068V2074" stroke="#e8e8e8" stroke-width="1.5"/><path d="M3116.1 2068V2074" stroke="#e8e8e8" stroke-width="1.5"/><path d="M3131.1 2068V2074" stroke="#e8e8e8" stroke-width="1.5"/><path d="M3146.1 2068V2074" stroke="#e8e8e8" stroke-width="1.5"/><path d="M3161.2 2068V2076" stroke="#e8e8e8" stroke-width="1.5"/><path d="M3176.2 2068V2074" stroke="#e8e8e8" stroke-width="1.5"/><path d="M3191.2 2068V2074" stroke="#e8e8e8" stroke-width="1.5"/><path d="M3206.2 2068V2074" stroke="#e8e8e8" stroke-width="1.5"/><path d="M3221.2 2068V2074" stroke="#e8e8e8" stroke-width="1.5"/><path d="M3236.2 2068V2079" stroke="#e8e8e8" stroke-width="1.5"/><path d="M3251.3 2068V2074" stroke="#e8e8e8" stroke-width="1.5"/><path d="M3266.3 2068V2074" stroke="#e8e8e8" stroke-width="1.5"/><path d="M3281.3 2068V2074" stroke="#e8e8e8" stroke-width="1.5"/><path d="M3296.3 2068V2074" stroke="#e8e8e8" stroke-width="1.5"/><path d="M3311.3 2068V2076" stroke="#e8e8e8" stroke-width="1.5"/><path d="M3326.3 2068V2074" stroke="#e8e8e8" stroke-width="1.5"/><path d="M3341.4 2068V2074" stroke="#e8e8e8" stroke-width="1.5"/><path d="M3356.4 2068V2074" stroke="#e8e8e8" stroke-width="1.5"/><path d="M3371.4 2068V2074" stroke="#e8e8e8" stroke-width="1.5"/><path d="M3386.4 2068V2079" stroke="#e8e8e8" stroke-width="1.5"/><path d="M3401.4 2068V2074" stroke="#e8e8e8" stroke-width="1.5"/><path d="M3416.5 2068V2074" stroke="#e8e8e8" stroke-width="1.5"/><path d="M3431.5 2068V2074" stroke="#e8e8e8" stroke-width="1.5"/><path d="M3446.5 2068V2074" stroke="#e8e8e8" stroke-width="1.5"/><path d="M3461.5 2068V2076" stroke="#e8e8e8" stroke-width="1.5"/><path d="M3476.5 2068V2074" stroke="#e8e8e8" stroke-width="1.5"/><path d="M3491.5 2068V2074" stroke="#e8e8e8" stroke-width="1.5"/><path d="M3506.6 2068V2074" stroke="#e8e8e8" stroke-width="1.5"/><path d="M3521.6 2068V2074" stroke="#e8e8e8" stroke-width="1.5"/><path d="M3536.6 2068V2079" stroke="#e8e8e8" stroke-width="1.5"/><path d="M1272.0 2068V2117M2796.0 2068V2117" stroke="#f0f0f0" stroke-width="2"/><path d="M2034.8 2068V2117" stroke="#f0f040" stroke-width="1.5"/></svg><div class="t c" style="left:333.0px;top:2088.6px;font-size:22px;color:#c4c4bc;font-weight:400;transform:scaleX(0.96)">5.600</div><div class="t c" style="left:483.2px;top:2088.6px;font-size:22px;color:#c4c4bc;font-weight:400;transform:scaleX(0.96)">5.610</div><div class="t c" style="left:633.4px;top:2088.6px;font-size:22px;color:#c4c4bc;font-weight:400;transform:scaleX(0.96)">5.620</div><div class="t c" style="left:783.5px;top:2088.6px;font-size:22px;color:#c4c4bc;font-weight:400;transform:scaleX(0.96)">5.630</div><div class="t c" style="left:933.7px;top:2088.6px;font-size:22px;color:#c4c4bc;font-weight:400;transform:scaleX(0.96)">5.640</div><div class="t c" style="left:1083.9px;top:2088.6px;font-size:22px;color:#c4c4bc;font-weight:400;transform:scaleX(0.96)">5.650</div><div class="t c" style="left:1234.1px;top:2088.6px;font-size:22px;color:#c4c4bc;font-weight:400;transform:scaleX(0.96)">5.660</div><div class="t c" style="left:1384.3px;top:2088.6px;font-size:22px;color:#c4c4bc;font-weight:400;transform:scaleX(0.96)">5.670</div><div class="t c" style="left:1534.4px;top:2088.6px;font-size:22px;color:#c4c4bc;font-weight:400;transform:scaleX(0.96)">5.680</div><div class="t c" style="left:1684.6px;top:2088.6px;font-size:22px;color:#c4c4bc;font-weight:400;transform:scaleX(0.96)">5.690</div><div class="t c" style="left:1834.8px;top:2088.6px;font-size:22px;color:#c4c4bc;font-weight:400;transform:scaleX(0.96)">5.700</div><div class="t c" style="left:1985.0px;top:2088.6px;font-size:22px;color:#c4c4bc;font-weight:400;transform:scaleX(0.96)">5.710</div><div class="t c" style="left:2135.2px;top:2088.6px;font-size:22px;color:#c4c4bc;font-weight:400;transform:scaleX(0.96)">5.720</div><div class="t c" style="left:2285.3px;top:2088.6px;font-size:22px;color:#c4c4bc;font-weight:400;transform:scaleX(0.96)">5.730</div><div class="t c" style="left:2435.5px;top:2088.6px;font-size:22px;color:#c4c4bc;font-weight:400;transform:scaleX(0.96)">5.740</div><div class="t c" style="left:2585.7px;top:2088.6px;font-size:22px;color:#c4c4bc;font-weight:400;transform:scaleX(0.96)">5.750</div><div class="t c" style="left:2735.9px;top:2088.6px;font-size:22px;color:#c4c4bc;font-weight:400;transform:scaleX(0.96)">5.760</div><div class="t c" style="left:2886.1px;top:2088.6px;font-size:22px;color:#c4c4bc;font-weight:400;transform:scaleX(0.96)">5.770</div><div class="t c" style="left:3036.2px;top:2088.6px;font-size:22px;color:#c4c4bc;font-weight:400;transform:scaleX(0.96)">5.780</div><div class="t c" style="left:3186.4px;top:2088.6px;font-size:22px;color:#c4c4bc;font-weight:400;transform:scaleX(0.96)">5.790</div><div class="t c" style="left:3336.6px;top:2088.6px;font-size:22px;color:#c4c4bc;font-weight:400;transform:scaleX(0.96)">5.800</div><div class="a" style="left:462px;top:2068px;width:47px;height:49px;background:#000"></div><div class="a" style="left:464px;top:2070px;width:44px;height:45px;background:#fcfcfc;border:1px solid #c8c8c8;border-radius:4px"></div><svg class="a" style="left:472px;top:2078px;" width="28" height="28" viewBox="0 0 28 28"><circle cx="14" cy="14" r="12" fill="#fafafa" stroke="#444" stroke-width="2.8"/><path d="M7 14L13 9V19Z M13 14L19 9V19Z" fill="#111"/></svg><div class="a" style="left:3558px;top:2068px;width:212px;height:49px;background:#000"></div><div class="a" style="left:3559px;top:2070px;width:67px;height:45px;background:#fcfcfc;border:1px solid #d0d0d0;border-radius:4px"></div><svg class="a" style="left:3578px;top:2080px;" width="30" height="26" viewBox="0 0 30 26"><path d="M16 6 Q16 1 20 1" stroke="#333" stroke-width="1.5" fill="none"/><rect x="1" y="7" width="28" height="17" rx="2" fill="#fff" stroke="#333" stroke-width="1.8"/><g fill="#333"><rect x="4" y="10" width="3" height="2.5"/><rect x="9" y="10" width="3" height="2.5"/><rect x="14" y="10" width="3" height="2.5"/><rect x="19" y="10" width="3" height="2.5"/><rect x="24" y="10" width="3" height="2.5"/><rect x="4" y="14" width="3" height="2.5"/><rect x="9" y="14" width="3" height="2.5"/><rect x="14" y="14" width="3" height="2.5"/><rect x="19" y="14" width="3" height="2.5"/><rect x="24" y="14" width="3" height="2.5"/><rect x="8" y="18.5" width="14" height="2.5"/></g></svg><div class="a" style="left:3630px;top:2070px;width:90px;height:45px;background:#fcfcfc;border:1px solid #d0d0d0;border-radius:4px"></div><div class="t c" style="left:3460.0px;top:2087.0px;font-size:13px;color:#222;font-weight:400;">x2</div><svg class="a" style="left:3703px;top:2085px;" width="9" height="15" viewBox="0 0 9 15"><path d="M0 0L9 7.5L0 15Z" fill="#111"/></svg><div class="a" style="left:3723px;top:2070px;width:46px;height:45px;background:#fcfcfc;border:1px solid #d0d0d0;border-radius:4px"></div><svg class="a" style="left:3732px;top:2078px;" width="28" height="28" viewBox="0 0 28 28"><circle cx="14" cy="14" r="12" fill="#fafafa" stroke="#444" stroke-width="2.8"/><path d="M21 14L15 9V19Z M15 14L9 9V19Z" fill="#111"/></svg><div class="a" style="left:0px;top:2117px;width:3840px;height:42px;background:linear-gradient(90deg,#efefed,#f0f0f0)"></div><div class="a" style="left:0px;top:2117px;width:3840px;height:1px;background:#dcdcdc"></div><div class="a" style="left:0px;top:2159px;width:3840px;height:1px;background:#111"></div><div class="t" style="left:9.3px;top:2130.7px;font-size:18.5px;color:#777;font-weight:400;">RX-666, BW = 32.000 MHz</div><svg class="a" style="left:2796px;top:2125px;" width="24" height="24" viewBox="0 0 24 24"><path d="M2 6 L20 2 L21 6 L3 10Z" fill="#5a8ab0"/><rect x="2" y="10" width="20" height="13" fill="#7ab8e8"/><path d="M5 13L19 21" stroke="#d8f0ff" stroke-width="3"/></svg><div class="t" style="left:2826.3px;top:2130.2px;font-size:19px;color:#222;font-weight:400;">--:02:21,</div><svg class="a" style="left:2905px;top:2131px;" width="15" height="16" viewBox="0 0 15 16"><rect x="0.5" y="0.5" width="14" height="15" fill="#fff" stroke="#333"/><rect x="3" y="1" width="8" height="5" fill="#333"/><rect x="3" y="9" width="9" height="6" fill="#888"/></svg><div class="t" style="left:2926.4px;top:2130.2px;font-size:19px;color:#222;font-weight:400;">967.2 MB (0)</div><div class="t" style="left:3059.2px;top:2130.2px;font-size:19px;color:#222;font-weight:400;">CPU: 14.3%</div><div class="t" style="left:3255.7px;top:2130.2px;font-size:19px;color:#222;font-weight:400;">GPU: 39.2%</div><div class="t" style="left:3455.0px;top:2130.2px;font-size:19px;color:#222;font-weight:400;">Audio: 8ms</div><div class="t" style="left:3650.7px;top:2130.2px;font-size:19px;color:#222;font-weight:400;">Size: 6.6 GB</div><div class="a" style="left:3172px;top:2128px;width:69px;height:20px;background:#e6e6e6;border:1px solid #bcbcbc"></div><div class="a" style="left:3174px;top:2130px;width:4px;height:16px;background:#18b418"></div><div class="a" style="left:3371px;top:2128px;width:69px;height:20px;background:#e6e6e6;border:1px solid #bcbcbc"></div><div class="a" style="left:3373px;top:2130px;width:24px;height:16px;background:#18b418"></div><div class="a" style="left:3567px;top:2128px;width:69px;height:20px;background:#e6e6e6;border:1px solid #bcbcbc"></div><div class="a" style="left:3765px;top:2128px;width:69px;height:20px;background:#e6e6e6;border:1px solid #bcbcbc"></div><div class="a" style="left:3767px;top:2130px;width:7px;height:16px;background:#18b418"></div></body></html>
